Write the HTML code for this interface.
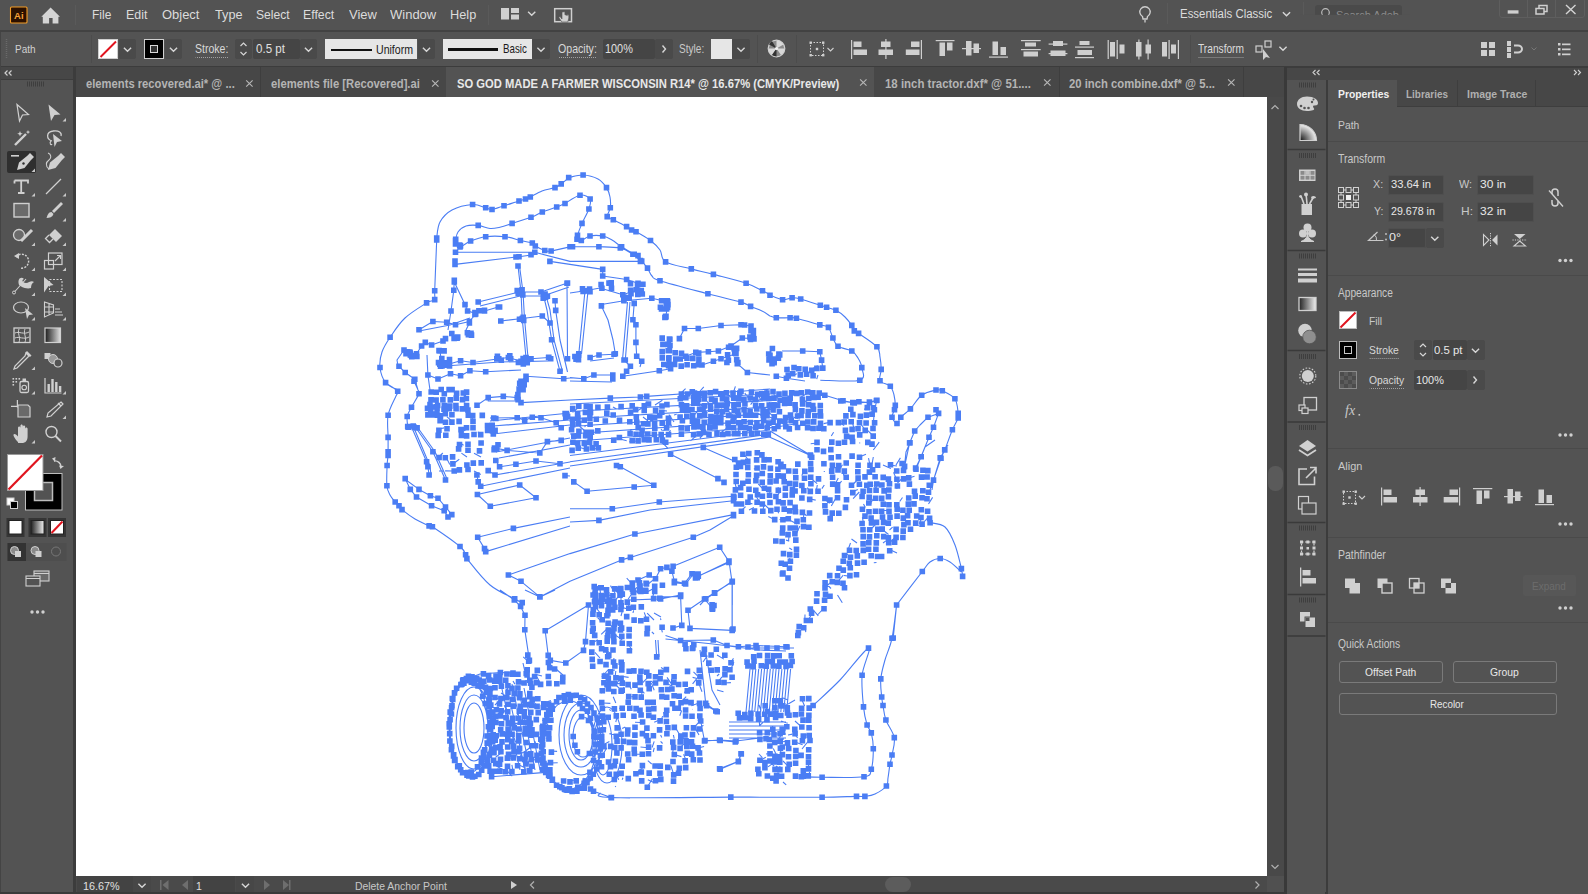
<!DOCTYPE html>
<html><head><meta charset="utf-8">
<style>
*{margin:0;padding:0;box-sizing:border-box}
html,body{width:1588px;height:894px;overflow:hidden;background:#535353;font-family:"Liberation Sans",sans-serif;color:#d6d6d6;font-size:12px}
.a{position:absolute}
.t{position:absolute;white-space:nowrap;line-height:1;transform-origin:0 0}
svg{position:absolute;overflow:visible}
.fld{position:absolute;background:#454545;border:1px solid #4f4f4f;border-radius:2px}
.dd{position:absolute;background:#4a4a4a;border-radius:2px}
.sep{position:absolute;background:#4a4a4a}
.btn{position:absolute;border:1px solid #7a7a7a;border-radius:3px}
</style></head><body>
<!-- MENU BAR -->
<div class="a" style="left:0;top:0;width:1588px;height:30px;background:#535353"></div>
<div class="a" style="left:0;top:30px;width:1588px;height:2px;background:#424242"></div>
<div class="sep" style="left:75px;top:5px;width:1px;height:20px;background:#5a5a5a"></div>
<div class="sep" style="left:488px;top:5px;width:1px;height:20px;background:#5a5a5a"></div>
<div class="sep" style="left:1167px;top:3px;width:1px;height:21px;background:#5a5a5a"></div>
<div class="sep" style="left:1303px;top:2px;width:1px;height:22px;background:#5a5a5a"></div>
<div class="a" style="left:1315px;top:5px;width:87px;height:10px;background:#4a4a4a;border-radius:3px 3px 0 0"></div>
<div class="a" style="left:1499px;top:-2px;width:86px;height:20px;border:1px solid #5e5e5e;border-radius:3px"></div>
<div class="a" style="left:1527px;top:0;width:1px;height:18px;background:#5e5e5e"></div>
<div class="a" style="left:1555px;top:0;width:1px;height:18px;background:#5e5e5e"></div>
<!-- CONTROL BAR -->
<div class="a" style="left:0;top:32px;width:1588px;height:34px;background:#535353"></div>

<div class="a" style="left:0;top:66px;width:1588px;height:2px;background:#3c3c3c"></div>
<div class="sep" style="left:91px;top:35px;width:1px;height:28px;background:#4c4c4c"></div>
<!-- fill / stroke -->
<div class="a" style="left:98px;top:39px;width:20px;height:20px;background:#fff;border:1px solid #cfcfcf"></div>
<svg style="left:98px;top:39px" width="20" height="20"><line x1="2.5" y1="18" x2="18" y2="2.5" stroke="#e0141e" stroke-width="2"/></svg>
<div class="dd" style="left:119px;top:39px;width:17px;height:20px"></div>
<div class="a" style="left:144px;top:39px;width:20px;height:20px;background:#000;border:1px solid #cfcfcf"></div>
<div class="a" style="left:150px;top:45px;width:8px;height:8px;border:1.5px solid #d8d8d8;background:#333"></div>
<div class="dd" style="left:165px;top:39px;width:17px;height:20px"></div>
<div class="dd" style="left:235px;top:39px;width:17px;height:20px"></div>
<div class="fld" style="left:253px;top:39px;width:47px;height:20px;border:none"></div>
<div class="dd" style="left:300px;top:39px;width:17px;height:20px"></div>
<div class="a" style="left:325px;top:39px;width:92px;height:20px;background:#e6e6e6"></div>
<div class="a" style="left:331px;top:48.5px;width:41px;height:2.5px;background:#111"></div>
<div class="dd" style="left:418px;top:39px;width:17px;height:20px"></div>
<div class="a" style="left:443px;top:39px;width:89px;height:20px;background:#e6e6e6"></div>
<div class="a" style="left:448px;top:48px;width:50px;height:2.5px;background:#111"></div>
<div class="dd" style="left:532px;top:39px;width:18px;height:20px"></div>
<div class="fld" style="left:603px;top:39px;width:52px;height:20px;border:none"></div>
<div class="dd" style="left:655px;top:39px;width:18px;height:20px"></div>
<div class="a" style="left:711px;top:39px;width:21px;height:20px;background:#e6e6e6"></div>
<div class="dd" style="left:732px;top:39px;width:18px;height:20px"></div>
<div class="sep" style="left:757px;top:35px;width:1px;height:28px;background:#4c4c4c"></div>
<div class="sep" style="left:796px;top:35px;width:1px;height:28px;background:#4c4c4c"></div>
<div class="sep" style="left:1190px;top:35px;width:1px;height:28px;background:#4c4c4c"></div>
<!-- LEFT PANEL -->
<div class="a" style="left:0;top:67px;width:73px;height:12px;background:#474747"></div>
<div class="a" style="left:0;top:78.5px;width:73px;height:1.5px;background:#3c3c3c"></div>
<div class="a" style="left:73px;top:67px;width:3px;height:827px;background:#3c3c3c"></div>
<div class="a" style="left:7px;top:151px;width:29px;height:22px;background:#2f2f2f;border-radius:2px"></div>
<!-- TAB ROW -->
<div class="a" style="left:76px;top:67px;width:1208px;height:30px;background:#474747"></div>
<div class="a" style="left:446px;top:67px;width:428px;height:30px;background:#535353"></div>
<div class="a" style="left:260px;top:67px;width:1px;height:30px;background:#3e3e3e"></div>
<div class="a" style="left:1059px;top:67px;width:1px;height:30px;background:#3e3e3e"></div>
<div class="a" style="left:1243px;top:67px;width:1px;height:30px;background:#3e3e3e"></div>
<!-- CANVAS -->
<div class="a" style="left:76px;top:97px;width:1191px;height:779px;background:#ffffff"></div>
<svg style="left:0;top:0" width="1588" height="894" viewBox="0 0 1588 894">
<path d="M397.7,390.0 C395.7,388.8 388.6,386.4 385.6,382.6 C382.7,378.9 380.6,372.6 380.0,367.5 C379.4,362.4 380.3,357.0 382.0,352.0 C383.7,347.0 386.3,343.0 390.1,337.3 C393.9,331.6 398.9,323.7 405.0,318.0 C411.1,312.3 421.7,306.0 426.6,302.9 C431.6,299.8 433.4,301.6 434.7,299.6 C436.0,297.6 434.4,300.7 434.7,290.8 C435.0,280.9 436.4,248.8 436.7,240.0 C437.0,231.2 436.1,241.0 436.7,238.0 C437.2,235.0 437.4,226.7 440.0,222.0 C442.6,217.3 446.6,212.9 452.0,210.0 C457.4,207.1 467.0,204.9 472.6,204.5 C478.2,204.1 482.5,207.0 485.7,207.8 C488.9,208.6 488.9,209.8 492.0,209.5 C495.1,209.2 499.5,207.2 504.0,205.8 C508.5,204.4 515.4,202.1 519.0,201.0 C522.6,199.9 523.6,199.7 525.5,199.0 C527.4,198.3 527.5,198.3 530.3,197.0 C533.0,195.7 537.9,192.6 542.0,191.0 C546.1,189.4 551.8,188.8 555.0,187.6 C558.2,186.4 558.9,185.6 561.2,183.9 C563.5,182.2 567.5,178.7 568.7,177.6 M455.5,240.5 C455.9,239.1 456.2,234.4 458.0,232.0 C459.8,229.6 462.6,227.1 466.0,226.0 C469.4,224.9 474.2,225.0 478.2,225.4 C482.2,225.8 486.2,228.2 490.0,228.5 C493.8,228.8 497.1,227.8 500.8,227.0 C504.5,226.2 507.1,225.0 512.1,223.4 C517.1,221.8 526.0,219.2 531.0,217.3 C536.0,215.4 538.0,213.7 542.3,212.0 C546.6,210.3 552.9,208.4 556.7,207.0 C560.5,205.6 563.6,204.1 565.0,203.5 M455.5,244.0 C456.2,244.5 457.5,247.5 460.0,247.0 C462.5,246.5 466.3,242.7 470.6,241.0 C474.9,239.3 480.0,237.4 485.7,236.7 C491.4,236.0 499.2,236.1 505.0,236.7 C510.8,237.3 515.9,239.4 520.4,240.5 C524.9,241.6 529.8,242.1 532.3,243.0 C534.8,243.9 533.2,244.8 535.3,246.0 C537.4,247.2 542.2,249.7 544.8,250.5 C547.4,251.3 546.9,251.6 551.1,251.0 C555.3,250.4 566.9,247.5 570.0,246.8 M455.5,252.3 L534.8,252.3 L531.0,254.8 M455.0,261.0 L455.0,264.4 L516.0,257.0 L519.0,256.8 L535.0,254.5 M549.9,261.4 L570.0,264.4 M518.0,266.0 L521.0,292.0 L522.2,318.5 L526.0,357.5 M519.5,266.0 L523.0,292.0 L524.5,318.5 L528.0,357.5 M478.2,302.0 L519.0,292.0 L541.0,292.0 L567.5,283.0 M480.0,306.0 L520.0,296.0 L543.0,296.0 L569.0,287.0 M484.5,311.0 L498.3,307.0 L499.6,307.0 M500.8,321.0 L522.2,318.5 L542.3,316.0 L550.0,323.0 M543.6,295.8 L547.0,310.0 L551.6,339.8 L560.0,371.3 M546.0,295.8 L550.0,310.0 L554.0,339.8 L562.5,371.3 M555.0,300.8 L555.7,310.4 L560.0,340.0 L567.5,372.0 M567.0,283.2 L567.5,358.7 M454.3,280.2 L453.8,290.3 L451.0,311.0 L448.0,330.0 M454.3,282.0 L465.0,304.6 L467.6,311.0 L475.7,313.4 L484.5,310.4 M419.0,329.8 L432.9,321.5 L446.7,322.2 L455.5,324.7 L469.4,321.5 L475.7,314.0 M419.0,331.0 L450.0,325.0 L470.0,318.0 M404.0,350.0 L410.3,355.0 L416.5,353.7 L421.6,346.0 L425.3,342.4 L431.6,345.0 L443.0,341.0 L445.5,338.6 M440.0,351.0 L442.0,366.0 L460.6,360.7 L473.0,362.5 L498.8,358.7 L508.4,357.5 L521.0,361.2 L531.0,358.7 L548.6,357.5 M445.0,366.0 L500.0,362.0 L548.0,361.0 M399.0,366.3 L405.2,372.5 L414.8,379.3 L418.0,390.0 M398.0,366.0 L397.0,360.0 L404.0,350.0 M427.9,375.0 L438.0,379.0 L450.5,373.8 L460.6,375.8 L469.9,370.8 L485.7,371.8 L521.0,370.0 M427.0,355.0 L427.9,375.0 L430.0,390.0 M521.0,381.3 L526.0,376.3 L563.7,378.8 L570.0,378.0 M451.8,333.5 L455.5,337.3 M469.4,323.0 L466.0,330.0 L469.4,333.5 M568.7,177.6 C571.1,177.2 578.2,174.8 583.1,175.0 C588.0,175.2 594.1,176.9 598.0,179.0 C601.9,181.1 604.5,184.6 606.5,187.6 C608.5,190.6 609.4,193.6 610.0,197.0 C610.6,200.4 610.8,204.5 610.3,207.8 C609.8,211.1 606.7,214.6 607.2,216.6 C607.7,218.6 610.1,218.1 613.3,219.8 C616.5,221.5 623.5,224.9 626.6,226.6 C629.7,228.3 630.0,229.2 631.6,230.0 C633.2,230.8 632.9,229.9 636.0,231.7 C639.1,233.4 646.5,237.4 650.5,240.5 C654.5,243.6 657.5,246.4 660.0,250.0 C662.5,253.6 660.4,258.8 665.6,261.9 C670.8,265.0 683.3,266.8 691.3,268.9 C699.3,271.0 704.3,272.0 713.4,274.4 C722.5,276.8 737.9,280.5 746.1,283.2 C754.3,285.9 758.5,288.9 762.5,290.8 C766.5,292.7 768.8,294.0 770.0,294.6 M565.0,203.5 C567.5,202.1 575.8,195.9 580.0,195.2 C584.2,194.4 588.6,196.7 590.1,199.0 C591.6,201.3 590.2,204.9 588.9,209.0 C587.5,213.1 583.9,219.0 582.0,223.4 C580.1,227.8 578.3,232.8 577.5,235.4 C576.7,238.0 576.4,238.3 577.0,239.2 C577.6,240.0 579.1,241.0 581.3,240.5 C583.5,240.0 586.4,236.8 590.0,236.0 C593.6,235.2 599.0,235.3 602.7,236.0 C606.4,236.7 608.9,238.2 612.0,240.0 C615.1,241.8 617.9,244.4 621.6,246.8 C625.3,249.2 631.5,252.8 634.2,254.3 C636.9,255.8 636.8,254.5 638.0,255.6 C639.2,256.7 640.1,259.0 641.7,261.1 C643.3,263.2 645.8,265.6 647.5,268.1 C649.2,270.6 649.9,273.9 652.0,276.0 C654.1,278.1 650.7,277.7 660.0,280.7 C669.3,283.7 694.4,290.2 707.9,293.8 C721.4,297.4 733.9,300.0 741.0,302.1 C748.1,304.2 747.1,304.9 750.6,306.4 C754.1,307.9 758.8,309.4 762.0,311.0 C765.2,312.6 768.7,315.2 770.0,316.0 M570.0,246.8 C570.4,246.8 567.7,246.8 572.5,246.8 C577.3,246.8 590.9,246.6 598.9,246.8 C606.9,247.0 614.6,246.8 620.3,248.0 C626.0,249.2 629.5,252.2 632.9,254.3 C636.2,256.4 639.1,259.6 640.4,260.6 M534.8,252.3 L570.0,261.4 L640.4,261.4 M570.0,264.4 L602.7,269.4 L602.7,276.0 L626.6,279.5 L638.0,283.2 M570.0,293.0 L585.0,290.8 L600.0,288.0 L622.8,294.8 L634.0,291.0 M585.0,290.8 L578.8,353.7 M588.0,291.0 L581.5,354.0 M601.4,305.9 L608.0,320.0 L613.0,340.0 L615.3,353.7 M601.4,304.5 L624.0,300.8 L651.8,298.3 L663.0,300.8 L668.0,304.6 L665.6,317.2 M634.2,303.4 L632.9,319.7 L635.9,324.7 L635.9,342.4 L636.7,356.2 L641.7,361.2 L640.0,367.0 M630.0,302.0 L625.3,360.0 M627.5,302.0 L622.5,360.0 M590.1,357.5 L599.0,355.0 L614.0,354.2 M590.1,361.0 L614.0,358.0 M624.0,360.0 L630.4,366.3 L626.6,371.3 L622.8,376.3 M570.0,377.6 L583.8,378.8 L593.9,375.0 L612.8,375.0 L612.8,379.0 M570.0,381.0 L612.0,382.0 M622.8,376.3 L659.3,370.8 L670.6,368.8 M679.4,338.6 L684.5,328.5 L698.3,328.5 L721.0,325.5 L741.0,324.7 L751.0,326.0 L753.6,338.6 L742.3,338.0 M685.7,356.2 L695.8,352.4 L708.4,351.7 L718.4,351.0 L731.0,346.0 L736.0,353.7 L721.0,358.7 L713.4,361.2 L702.0,365.0 M737.3,363.7 L747.4,372.5 L770.0,375.0 M742.3,338.0 L731.0,346.0 M770.0,294.6 C770.0,294.7 767.9,294.4 770.0,295.2 C772.1,296.0 778.9,299.3 782.6,299.7 C786.3,300.1 789.1,297.8 792.1,297.7 C795.1,297.6 796.0,297.7 800.7,299.0 C805.4,300.3 816.0,303.9 820.3,305.3 C824.6,306.7 824.0,306.5 826.6,307.3 C829.2,308.1 832.8,308.7 835.9,310.3 C839.0,311.9 842.4,314.5 845.0,317.0 C847.6,319.5 850.2,323.1 851.8,325.4 C853.3,327.7 853.2,329.6 854.3,330.9 C855.4,332.2 854.8,330.8 858.6,333.4 C862.4,336.0 873.3,342.9 876.9,346.8 C880.5,350.7 879.3,353.2 880.0,357.0 C880.7,360.8 881.2,365.4 881.2,369.4 C881.2,373.3 878.5,377.9 880.0,380.7 C881.5,383.5 888.0,383.9 890.3,386.3 C892.6,388.7 893.2,391.8 894.0,395.0 C894.8,398.2 895.2,402.9 895.3,405.4 C895.4,407.8 895.0,407.7 894.5,409.7 C894.0,411.7 891.6,414.9 892.0,417.2 C892.4,419.5 895.5,423.5 897.0,423.5 C898.5,423.5 898.6,419.6 900.8,417.2 C903.0,414.8 906.9,412.5 910.4,408.9 C913.9,405.2 917.4,398.4 921.7,395.3 C926.0,392.2 932.6,390.8 936.0,390.0 C939.4,389.2 939.1,389.3 942.3,390.8 C945.4,392.3 952.2,395.0 954.9,398.8 C957.5,402.6 957.7,410.2 958.2,413.4 C958.8,416.6 959.2,415.3 958.2,418.0 C957.2,420.7 954.6,424.5 952.4,429.8 C950.2,435.1 946.7,445.2 944.8,449.9 C942.9,454.6 942.9,453.2 941.0,458.2 C939.1,463.2 935.3,474.7 933.5,480.0 C931.7,485.3 930.6,488.3 930.0,490.0 M936.0,409.7 L938.6,413.4 L928.0,417.2 L920.0,425.0 L914.7,431.0 L909.6,443.0 L904.6,466.3 M938.6,413.4 L933.5,427.3 L929.0,437.3 L921.0,456.7 L916.0,469.3 M770.0,316.0 C771.0,316.3 772.9,317.5 776.3,317.8 C779.6,318.1 786.8,317.7 790.1,317.8 C793.5,317.9 791.5,317.1 796.4,318.3 C801.3,319.5 814.5,323.4 819.8,324.9 C825.1,326.4 826.2,325.2 828.4,327.4 C830.6,329.6 831.3,334.9 832.9,338.0 C834.5,341.1 834.9,344.1 838.0,346.3 C841.1,348.5 848.5,349.1 851.8,351.0 C855.1,352.9 856.3,355.2 858.0,358.0 C859.7,360.8 861.5,363.9 861.8,367.6 C862.1,371.3 866.7,378.1 859.8,380.2 C852.9,382.3 826.9,380.2 820.3,380.2 M782.0,351.0 L802.7,351.0 L819.8,351.8 L821.6,360.1 L822.8,368.1 M776.3,376.2 L786.4,378.2 L805.0,381.0 M824.8,395.3 L843.0,400.8 L854.3,402.9 L869.4,402.1 L876.9,400.3 L874.4,409.7 L873.0,428.5 M770.0,431.0 L810.3,455.0 M770.0,428.0 L795.0,424.0 M770.0,425.0 L800.0,420.0 M385.6,383.0 C387.6,384.4 396.0,389.1 397.7,391.3 C399.4,393.5 397.6,392.0 396.0,396.0 C394.4,400.0 389.4,408.3 388.1,415.2 C386.8,422.1 388.1,431.3 388.1,437.4 C388.1,443.5 388.1,448.7 388.1,451.7 C388.1,454.7 388.3,453.2 388.1,455.5 C387.9,457.8 387.3,460.5 387.1,465.5 C386.9,470.5 386.4,480.8 386.9,485.7 C387.4,490.6 388.6,492.3 390.0,495.0 C391.4,497.7 393.7,500.2 395.2,502.0 C396.7,503.8 397.9,504.5 399.0,505.8 C400.1,507.1 399.3,507.4 402.0,509.6 C404.7,511.8 410.5,516.3 415.0,519.0 C419.5,521.7 426.2,524.6 429.1,525.9 C432.0,527.2 427.2,523.3 432.4,526.7 C437.5,530.1 454.5,541.8 460.0,546.5 C465.5,551.2 464.5,552.8 465.6,554.8 C466.8,556.8 462.8,553.6 466.9,558.6 C471.0,563.6 482.0,578.3 490.0,585.0 C498.0,591.7 509.3,596.0 514.7,598.9 C520.1,601.8 521.0,602.0 522.2,602.6 M414.0,381.3 C414.7,382.8 417.2,387.9 418.0,390.0 C418.8,392.1 420.1,390.9 419.0,393.8 C417.9,396.7 413.5,403.4 411.5,407.2 C409.5,411.0 407.8,413.3 407.2,416.5 C406.6,419.7 407.6,424.8 407.7,426.5 M412.0,428.0 L426.6,461.8 L427.9,466.8 L429.1,475.0 M414.0,428.0 L430.0,466.0 L431.0,475.0 M416.0,428.0 L432.9,451.7 L445.5,480.0 M418.0,428.0 L435.0,451.7 L447.5,480.0 M405.2,478.6 L410.3,489.4 L416.5,497.0 L431.6,505.8 L444.2,510.8 L448.0,517.0 M406.0,480.0 L419.0,489.4 L430.4,495.7 L438.0,498.2 L445.5,507.0 L451.8,514.6 M477.0,405.2 L488.2,397.6 L503.3,396.4 L517.2,397.6 L521.0,402.6 M521.0,402.6 L570.0,400.0 M488.2,397.6 L488.2,401.0 L521.0,401.0 M490.0,418.0 L517.2,417.7 L524.7,420.3 L532.3,417.2 L541.0,417.7 L556.2,422.8 L561.2,427.8 M490.0,421.0 L570.0,413.0 M493.0,426.0 L570.0,420.0 M493.3,434.0 L570.0,425.0 M494.5,448.0 L507.1,450.4 L539.8,453.0 L547.4,441.6 L561.2,440.4 M496.0,452.0 L570.0,438.0 M495.8,460.5 L499.6,466.8 L515.9,464.3 L536.0,461.0 L560.0,463.8 M499.0,458.0 L570.0,445.0 M488.2,470.6 L495.0,475.0 L570.0,462.0 M476.9,475.0 L478.2,481.9 L480.7,486.2 L570.0,468.0 M477.4,494.5 L519.7,485.0 L536.0,497.7 L490.3,506.3 L477.4,494.5 M565.0,475.6 L570.0,476.0 M570.0,517.0 L513.4,528.4 L477.7,537.2 L484.5,548.6 L485.7,551.6 L570.0,526.0 M570.0,553.6 L508.4,575.0 L521.0,581.3 L539.8,596.9 L570.0,581.3 M570.0,400.0 L610.3,398.1 L640.4,397.0 L646.7,396.4 L694.5,393.0 L700.8,393.8 L741.0,391.3 L770.0,389.0 M570.0,404.0 L770.0,394.0 M570.0,411.5 L770.0,400.5 M570.0,419.0 L770.0,407.0 M570.0,426.5 L770.0,413.5 M570.0,434.0 L770.0,420.0 M570.0,441.5 L770.0,426.5 M570.0,455.5 L770.0,430.0 M570.0,461.8 L770.0,434.0 M570.0,466.0 L770.0,437.0 M670.6,454.2 L717.9,478.6 L724.0,482.4 M703.3,447.4 L738.6,463.0 M616.5,465.5 L620.3,466.8 L653.8,485.2 L634.2,487.0 L587.1,491.2 L573.8,481.9 M570.0,508.8 L612.3,508.8 L659.3,502.0 L733.5,496.2 M570.0,522.0 L598.9,520.4 L650.0,510.0 L733.5,500.8 M570.0,553.6 L634.9,534.0 L733.5,514.6 M570.0,581.3 L621.6,559.9 L630.4,557.4 L693.3,537.2 L710.0,530.0 L733.5,515.8 M719.7,547.3 L729.0,561.6 L698.3,576.2 L692.0,573.7 M719.7,547.3 L673.1,566.2 M649.2,575.0 L655.5,578.7 L660.6,568.7 L666.9,567.4 L671.9,571.2 L674.4,581.3 L684.5,583.3 L692.0,573.7 M638.0,580.0 L649.2,575.0 M732.3,581.3 L714.7,593.3 L705.8,598.9 L700.0,605.0 M732.3,581.3 L732.3,605.0 M680.7,595.0 L660.6,598.9 L630.0,600.0 M930.1,522.7 C932.6,523.4 940.9,523.3 945.0,527.0 C949.1,530.7 952.3,538.1 955.0,545.0 C957.7,551.9 960.1,563.4 961.4,568.6 C962.7,573.8 962.4,575.1 962.6,576.4 M896.6,605.0 C900.9,599.4 916.7,578.7 922.3,571.5 C927.9,564.3 927.0,564.2 930.0,562.0 C933.0,559.8 936.9,558.5 940.2,558.5 C943.5,558.5 946.5,559.8 950.0,562.0 C953.5,564.2 959.5,570.3 961.4,572.0 M896.6,605.0 L893.2,638.0 M732.2,582.0 L732.2,630.0 M910.0,442.7 L906.0,452.0 L904.4,466.8 M921.2,456.8 L915.6,468.0 M944.7,450.0 L940.2,457.9 L933.5,480.2 L932.0,490.0 M944.7,450.0 L948.0,445.0 M921.2,456.8 L925.0,447.0 L935.0,440.0 M763.8,434.4 L810.6,455.5 M840.8,401.0 L852.8,402.6 L858.9,401.7 L869.5,402.6 L876.4,400.5 M729.0,561.0 L732.0,581.8 M500.0,590.0 L514.3,600.0 L520.6,606.4 L525.0,615.2 L524.8,629.7 L529.4,660.4 M540.0,597.0 L525.0,590.0 M540.0,597.0 L555.0,590.0 M588.5,605.0 L545.2,630.8 L548.2,655.4 L550.3,660.4 L565.8,663.0 L583.5,650.4 L585.5,641.6 L588.5,605.0 M462.7,680.6 L480.0,674.0 L500.4,672.5 L513.0,673.0 M491.6,776.7 L545.7,772.4 M593.5,791.3 L611.1,797.5 L630.0,798.0 M500.0,680.0 L520.0,770.0 M506.0,682.0 L525.0,770.0 M512.0,684.0 L530.0,770.0 M518.0,686.0 L535.0,770.0 M524.0,688.0 L540.0,770.0 M700.7,575.0 L728.9,562.5 M674.3,582.6 L685.6,584.0 L692.0,576.0 M732.1,582.0 L714.5,592.7 L704.5,599.0 L712.0,607.8 M704.5,599.0 L688.0,610.3 L690.0,628.4 L732.1,630.4 L732.1,582.0 M680.6,596.5 L681.8,625.4 L673.0,628.0 M655.0,597.0 L680.6,596.5 M656.7,656.9 L655.5,640.0 M659.0,656.9 L658.0,640.0 M665.5,635.5 L680.6,640.5 L713.3,640.0 L727.0,645.5 L738.4,646.8 L756.0,645.5 L786.0,646.8 M665.5,639.0 L713.0,644.0 L760.0,650.0 L786.0,651.0 M700.0,650.0 L705.7,703.4 L715.8,711.0 M705.0,648.0 L712.0,690.0 L720.0,705.0 M745.0,648.0 L794.0,648.0 M750.0,669.0 L746.0,712.0 M752.9,669.0 L748.9,712.0 M755.8,669.0 L751.8,712.0 M758.7,669.0 L754.7,712.0 M761.6,669.0 L757.6,712.0 M764.5,669.0 L760.5,712.0 M767.4,669.0 L763.4,712.0 M770.3,669.0 L766.3,712.0 M773.2,669.0 L769.2,712.0 M776.1,669.0 L772.1,712.0 M779.0,669.0 L775.0,712.0 M781.9,669.0 L777.9,712.0 M784.8,669.0 L780.8,712.0 M787.7,669.0 L783.7,712.0 M790.6,669.0 L786.6,712.0 M700.7,721.0 L704.5,741.0 L719.6,740.0 L736.0,741.0 L760.0,738.0 M741.0,753.7 L738.4,761.3 L719.6,768.8 M896.6,605.0 C895.8,610.5 893.9,629.1 892.0,638.3 C890.1,647.5 886.9,653.2 885.0,660.0 C883.1,666.8 881.3,672.7 880.8,678.9 C880.2,685.1 881.3,692.6 881.7,697.0 C882.1,701.4 882.3,701.7 883.0,705.5 C883.7,709.3 884.0,714.6 885.9,720.0 C887.8,725.4 893.3,731.8 894.3,737.6 C895.3,743.4 892.7,750.6 892.0,755.0 C891.3,759.4 890.7,760.4 890.0,764.2 C889.3,768.0 888.6,774.4 888.0,778.0 C887.4,781.6 888.6,783.3 886.4,786.0 C884.2,788.7 878.6,792.3 875.0,794.0 C871.4,795.7 868.0,796.0 864.9,796.4 C861.8,796.8 863.6,796.3 856.5,796.4 C849.4,796.5 838.2,797.1 822.1,797.2 C806.0,797.3 775.2,797.2 760.0,797.2 C744.8,797.2 755.6,797.0 730.8,797.1 C706.0,797.2 633.2,798.3 611.4,797.6 C589.6,796.9 601.9,793.8 600.0,793.0 M813.1,705.5 C817.6,701.2 830.8,689.6 840.0,680.0 C849.2,670.4 864.8,648.9 868.5,648.1 C872.2,647.3 862.9,665.4 862.1,675.2 C861.3,685.0 862.7,698.6 863.5,706.9 C864.3,715.2 865.8,720.7 867.1,725.0 C868.4,729.3 870.3,728.9 871.3,732.9 C872.3,736.9 873.3,742.8 873.3,748.8 C873.3,754.8 872.8,764.5 871.3,769.2 C869.8,773.9 872.2,775.4 864.0,776.8 C855.8,778.1 832.5,777.3 822.1,777.3 C811.7,777.3 804.9,776.9 801.4,776.8 M705.0,740.5 L720.2,740.5 L735.3,742.0 M717.2,711.7 L706.6,705.7 M720.2,769.2 L738.3,761.6 L741.3,754.0 M729.0,722.0 L786.0,722.0 M729.0,726.0 L786.0,726.0 M729.0,730.0 L786.0,730.0 M729.0,734.0 L786.0,734.0 M729.0,738.0 L786.0,738.0 M449.0,727.0 a22,50 0 1 0 44,0 a22,50 0 1 0 -44,0 M450.0,727.0 a19,46 0 1 0 38,0 a19,46 0 1 0 -38,0 M464.0,728.0 a10,25 0 1 0 20,0 a10,25 0 1 0 -20,0 M460.0,728.0 a14,33 0 1 0 28,0 a14,33 0 1 0 -28,0 M456.0,728.0 a18,41 0 1 0 36,0 a18,41 0 1 0 -36,0 M541.0,743.0 a30,48 0 1 0 60,0 a30,48 0 1 0 -60,0 M542.0,745.0 a27,44 0 1 0 54,0 a27,44 0 1 0 -54,0 M569.0,735.0 a12,25 0 1 0 24,0 a12,25 0 1 0 -24,0 M564.0,735.0 a17,32 0 1 0 34,0 a17,32 0 1 0 -34,0 M559.0,735.0 a22,40 0 1 0 44,0 a22,40 0 1 0 -44,0 M573.0,737.0 a10,20 0 1 0 20,0 a10,20 0 1 0 -20,0 M592.0,745.0 a15,38 0 1 0 30,0 a15,38 0 1 0 -30,0 M594.0,745.0 a9,30 0 1 0 18,0 a9,30 0 1 0 -18,0 M788.0,369.0 l0.6,-2.1 M812.0,369.0 l5.7,-3.4 M794.0,375.0 l2.9,-1.2 M818.0,375.0 l-1.3,4.1 M807.8,393.0 l-7.1,4.3 M778.8,398.8 l-5.2,-4.3 M802.0,398.8 l6.4,4.5 M813.6,398.8 l-4.7,-5.4 M819.4,398.8 l-6.4,-2.2 M773.0,404.6 l-4.0,-2.4 M784.6,404.6 l-2.5,-3.8 M796.2,404.6 l0.4,7.7 M773.0,410.4 l-7.6,-3.5 M796.2,410.4 l2.0,6.4 M773.0,416.2 l-6.0,-5.6 M790.4,416.2 l7.5,2.4 M773.0,422.0 l-1.0,-5.1 M773.0,427.8 l-6.1,-0.9 M813.6,427.8 l0.9,-1.0 M453.0,422.0 l-6.2,-5.4 M474.0,422.0 l-4.0,-7.8 M439.0,429.0 l5.1,-1.1 M467.0,429.0 l-6.9,3.9 M481.0,436.0 l-3.1,-4.3 M460.0,443.0 l3.6,2.3 M439.0,457.0 l3.8,-4.0 M446.0,457.0 l3.8,7.6 M467.0,457.0 l-5.6,-3.9 M481.0,457.0 l-7.0,-3.7 M453.0,464.0 l6.3,-4.8 M439.0,471.0 l5.1,0.1 M453.0,471.0 l-7.9,-0.1 M474.0,471.0 l6.8,3.4 M579.0,407.0 l-6.4,5.4 M585.0,413.0 l6.8,-6.0 M591.0,419.0 l-2.5,-6.5 M585.0,425.0 l0.1,2.1 M591.0,425.0 l-1.6,-0.9 M579.0,431.0 l-1.7,6.8 M585.0,431.0 l-6.3,-5.5 M585.0,437.0 l0.4,1.3 M591.0,437.0 l-3.2,-0.6 M573.0,443.0 l7.4,3.3 M585.0,449.0 l-4.4,-1.3 M597.0,449.0 l-7.0,-1.7 M643.0,405.0 l2.6,-1.9 M649.0,405.0 l-3.5,-2.4 M655.0,405.0 l7.4,-4.7 M631.0,411.0 l-1.4,5.0 M637.0,411.0 l6.7,-3.9 M667.0,411.0 l-4.3,-0.4 M643.0,417.0 l4.8,3.8 M655.0,417.0 l-4.8,4.0 M655.0,423.0 l-4.0,-4.1 M667.0,423.0 l4.9,2.5 M631.0,429.0 l-0.4,5.1 M661.0,429.0 l1.5,1.9 M667.0,429.0 l-3.9,1.6 M637.0,435.0 l4.7,0.8 M667.0,435.0 l3.6,-4.7 M637.0,441.0 l-7.8,0.8 M661.0,441.0 l7.1,7.6 M681.0,393.0 l4.6,-4.4 M686.8,393.0 l-4.5,-1.6 M692.6,393.0 l3.6,6.4 M698.4,393.0 l5.4,-6.1 M727.4,393.0 l-5.9,-1.1 M733.2,393.0 l2.2,-6.7 M739.0,393.0 l0.1,-2.0 M744.8,393.0 l5.7,7.9 M756.4,393.0 l4.6,6.9 M762.2,393.0 l6.3,-3.6 M721.6,398.8 l3.9,-7.2 M733.2,398.8 l-7.5,-5.6 M744.8,398.8 l-8.0,-2.3 M762.2,398.8 l-6.5,2.2 M704.2,404.6 l-4.8,1.7 M710.0,404.6 l-3.0,-3.2 M727.4,404.6 l-4.3,-7.4 M750.6,404.6 l6.1,-7.8 M698.4,410.4 l-6.3,6.9 M704.2,410.4 l3.1,2.1 M727.4,410.4 l5.6,5.0 M739.0,410.4 l-2.9,-1.2 M768.0,410.4 l5.1,-5.3 M698.4,416.2 l3.2,-0.0 M715.8,416.2 l6.2,-7.6 M762.2,416.2 l-4.0,-2.8 M768.0,416.2 l7.6,3.7 M698.4,422.0 l-1.6,4.7 M727.4,427.8 l-5.9,4.4 M698.4,433.6 l-7.8,7.2 M704.2,433.6 l-4.3,4.4 M739.0,433.6 l-0.5,-5.7 M762.2,433.6 l2.2,2.2 M613.0,407.0 l3.5,2.0 M620.0,439.0 l6.7,1.7 M674.0,415.0 l2.7,-0.7 M674.0,422.0 l-5.1,-7.4 M749.0,461.0 l-5.6,-7.8 M763.0,461.0 l3.5,-4.1 M777.0,461.0 l2.1,3.3 M756.0,468.0 l-2.1,1.2 M735.0,482.0 l0.9,4.8 M742.0,482.0 l1.7,2.8 M735.0,489.0 l1.6,-2.5 M763.0,489.0 l-4.8,-5.1 M777.0,489.0 l1.6,-1.6 M749.0,496.0 l4.6,3.4 M756.0,496.0 l4.1,7.0 M770.0,496.0 l-0.3,-5.3 M777.0,496.0 l3.5,-4.9 M749.0,503.0 l3.4,0.9 M742.0,510.0 l3.6,-3.3 M749.0,510.0 l4.9,-2.5 M763.0,510.0 l1.1,-5.8 M770.0,510.0 l-6.7,-6.6 M777.0,510.0 l1.8,3.3 M784.0,510.0 l3.7,-1.5 M866.3,408.0 l-2.1,1.5 M866.3,415.0 l7.5,-4.4 M831.3,422.0 l-7.7,1.6 M838.3,422.0 l5.9,3.5 M852.3,422.0 l1.5,5.8 M859.3,422.0 l5.2,7.0 M831.3,436.0 l2.3,-3.7 M873.3,436.0 l-6.0,-5.9 M817.3,443.0 l-6.6,0.7 M859.3,443.0 l0.9,-0.1 M873.3,450.0 l5.9,-7.9 M859.3,457.0 l6.7,-2.8 M873.3,457.0 l-1.2,6.6 M803.3,471.0 l-1.4,4.6 M824.3,471.0 l-0.0,0.9 M838.3,471.0 l4.2,-6.3 M810.3,478.0 l6.9,5.7 M838.3,478.0 l-3.1,6.0 M845.3,478.0 l-2.3,-5.0 M817.3,485.0 l-0.9,5.4 M824.3,485.0 l-2.4,3.6 M838.3,485.0 l3.3,-3.8 M852.3,485.0 l6.0,-6.0 M810.3,492.0 l-3.0,-4.4 M852.3,492.0 l5.5,-2.4 M859.3,492.0 l-6.2,6.6 M803.3,499.0 l-3.2,-1.9 M810.3,499.0 l5.4,1.1 M824.3,499.0 l5.3,4.4 M845.3,499.0 l3.1,-1.7 M831.3,506.0 l4.2,-7.3 M803.3,513.0 l3.3,2.7 M775.3,520.0 l-7.0,-3.5 M782.3,520.0 l-2.8,-0.5 M789.3,520.0 l7.9,4.0 M803.3,520.0 l0.7,-7.9 M789.3,534.0 l-0.9,7.5 M796.3,534.0 l3.6,-8.0 M789.3,541.0 l-3.3,-0.9 M796.3,541.0 l-2.8,-0.6 M789.3,548.0 l2.8,1.7 M782.3,555.0 l2.9,-0.8 M789.3,562.0 l0.5,-4.0 M870.0,465.0 l-1.5,-6.8 M883.0,465.0 l7.9,3.5 M889.5,465.0 l7.4,1.0 M896.0,465.0 l4.4,-7.1 M915.5,471.5 l1.7,-6.4 M896.0,478.0 l-2.5,-5.6 M902.5,478.0 l-5.1,5.1 M909.0,478.0 l5.5,-1.7 M876.5,484.5 l-0.6,7.8 M896.0,484.5 l1.0,4.3 M876.5,491.0 l-2.4,-5.8 M889.5,491.0 l-3.2,-3.1 M870.0,497.5 l1.6,5.8 M902.5,497.5 l-2.8,4.0 M863.5,504.0 l1.8,3.6 M870.0,504.0 l4.3,-6.6 M928.5,504.0 l4.1,-6.6 M883.0,510.5 l7.7,-0.0 M902.5,517.0 l5.8,7.9 M922.0,517.0 l-2.6,6.7 M928.5,517.0 l-4.2,4.7 M863.5,523.5 l-1.1,-6.3 M909.0,523.5 l-7.3,0.1 M915.5,523.5 l3.0,2.4 M870.0,530.0 l8.0,-7.9 M883.0,530.0 l5.5,4.5 M889.5,530.0 l3.1,-2.8 M896.0,536.5 l-5.2,5.2 M850.5,543.0 l-1.9,5.3 M857.0,543.0 l-5.5,-4.0 M883.0,543.0 l2.9,-2.1 M857.0,549.5 l2.2,5.7 M889.5,549.5 l7.5,3.4 M844.0,556.0 l4.1,-1.9 M876.5,562.5 l-2.7,0.3 M844.0,575.5 l6.7,0.9 M837.5,582.0 l5.8,-6.8 M824.5,588.5 l5.4,-5.7 M831.0,588.5 l-6.4,-6.5 M824.5,595.0 l1.3,-2.9 M837.5,595.0 l4.8,7.7 M811.5,608.0 l6.8,7.9 M805.0,614.5 l-0.2,5.8 M811.5,614.5 l-3.7,6.3 M818.0,614.5 l6.8,-7.5 M805.0,627.5 l0.8,4.6 M489.0,675.0 l-5.3,7.1 M501.0,675.0 l-0.1,0.6 M501.0,681.0 l1.5,4.5 M513.0,681.0 l1.9,3.1 M525.0,681.0 l7.0,-1.4 M483.0,687.0 l-4.8,-4.5 M501.0,693.0 l7.5,4.6 M507.0,693.0 l-0.7,-4.2 M495.0,699.0 l5.0,-1.3 M501.0,699.0 l-2.3,5.5 M495.0,705.0 l5.3,-5.4 M507.0,711.0 l-2.8,-5.8 M519.0,711.0 l-1.7,4.0 M495.0,717.0 l1.2,5.2 M507.0,717.0 l-3.0,-7.1 M519.0,717.0 l-2.9,-1.0 M495.0,723.0 l4.1,-0.5 M513.0,723.0 l5.2,1.1 M519.0,723.0 l-6.9,0.8 M507.0,735.0 l1.7,5.2 M513.0,735.0 l2.8,7.6 M519.0,735.0 l5.4,-2.8 M489.0,741.0 l2.1,-2.6 M489.0,747.0 l-0.4,-5.9 M531.0,747.0 l-7.8,5.8 M501.0,753.0 l-5.5,4.4 M513.0,753.0 l1.0,0.1 M507.0,759.0 l6.5,-1.9 M513.0,759.0 l-0.7,1.4 M519.0,759.0 l3.6,-7.1 M483.0,765.0 l-4.2,7.8 M495.0,765.0 l7.6,4.8 M519.0,765.0 l7.6,3.4 M507.0,771.0 l5.3,5.0 M513.0,771.0 l-1.1,-6.2 M523.0,663.0 l1.7,7.7 M530.0,663.0 l-6.8,-6.2 M537.0,677.0 l2.9,5.6 M530.0,698.0 l6.2,6.7 M537.0,705.0 l0.5,2.4 M537.0,747.0 l-2.2,-5.7 M537.0,761.0 l-3.1,-1.5 M544.0,703.0 l6.9,-2.5 M550.0,703.0 l5.7,4.8 M544.0,709.0 l6.5,-5.5 M550.0,709.0 l-5.7,-6.4 M550.0,715.0 l-7.8,5.6 M550.0,727.0 l-4.9,-4.5 M544.0,739.0 l-0.6,3.4 M550.0,739.0 l-4.3,-1.0 M550.0,751.0 l7.1,0.4 M544.0,757.0 l-6.7,-3.8 M550.0,763.0 l7.7,-0.3 M608.0,593.0 l-4.4,1.6 M615.0,593.0 l-4.5,-7.4 M615.0,600.0 l5.3,-4.8 M601.0,614.0 l-4.3,-5.3 M601.0,621.0 l-3.4,-3.4 M608.0,628.0 l-6.8,6.4 M615.0,635.0 l7.3,4.6 M622.0,635.0 l-1.5,7.4 M594.0,642.0 l3.8,-2.2 M601.0,649.0 l-0.3,-7.7 M608.0,649.0 l-2.1,7.4 M608.0,670.0 l-6.2,7.0 M615.0,670.0 l-2.6,0.4 M608.0,677.0 l2.0,3.1 M615.0,684.0 l4.8,4.8 M622.0,691.0 l2.1,-4.1 M556.0,669.0 l6.9,6.0 M542.0,676.0 l-6.9,-1.8 M549.0,676.0 l-2.9,-0.4 M535.0,683.0 l-0.7,2.2 M633.0,585.0 l-6.3,-6.9 M640.0,585.0 l-5.2,4.2 M647.0,585.0 l7.5,-6.1 M633.0,592.0 l-4.9,7.3 M640.0,592.0 l-3.9,-0.5 M647.0,592.0 l5.7,-2.9 M654.0,592.0 l-1.3,5.1 M633.0,613.0 l0.6,-2.6 M654.0,613.0 l7.0,3.9 M647.0,620.0 l-2.8,-7.6 M654.0,620.0 l-6.9,-6.9 M661.0,620.0 l-0.6,-1.6 M661.0,627.0 l1.4,5.3 M654.0,634.0 l-2.2,-2.2 M600.0,588.0 l0.4,5.1 M614.0,588.0 l6.1,7.9 M607.0,595.0 l6.6,0.8 M621.0,595.0 l0.0,6.4 M600.0,602.0 l2.1,4.9 M614.0,602.0 l-7.9,-2.6 M628.0,602.0 l1.6,6.5 M607.0,609.0 l7.1,-0.9 M628.0,609.0 l-5.4,-1.4 M600.0,616.0 l-2.9,0.1 M621.0,616.0 l1.5,-5.7 M607.0,623.0 l5.6,3.7 M628.0,644.0 l4.0,5.7 M607.0,651.0 l3.3,2.1 M600.0,658.0 l-5.1,-5.6 M614.0,658.0 l-1.0,4.7 M717.0,655.0 l6.9,4.1 M703.0,662.0 l4.4,-6.4 M731.0,662.0 l2.5,-3.6 M731.0,669.0 l2.9,-7.1 M717.0,676.0 l2.2,-2.0 M731.0,676.0 l-0.6,-0.5 M717.0,683.0 l5.0,-6.1 M724.0,683.0 l6.9,-0.4 M717.0,690.0 l6.5,1.8 M615.8,671.0 l-0.6,5.2 M667.0,671.0 l-6.0,-3.5 M603.0,677.4 l0.9,-4.7 M628.6,677.4 l-7.2,-1.2 M647.8,677.4 l-5.1,5.3 M667.0,677.4 l5.3,7.7 M673.4,677.4 l-2.2,2.6 M692.6,677.4 l3.6,0.8 M699.0,677.4 l-5.5,-5.6 M615.8,683.8 l4.1,-4.1 M622.2,683.8 l-6.5,-0.4 M628.6,683.8 l2.7,5.4 M654.2,683.8 l-3.1,-2.8 M667.0,683.8 l5.6,2.4 M692.6,683.8 l6.4,-7.9 M699.0,683.8 l3.0,7.9 M603.0,690.2 l-1.6,3.0 M622.2,690.2 l2.7,-0.1 M641.4,690.2 l3.0,3.2 M654.2,690.2 l-2.8,-7.1 M686.2,690.2 l-1.9,2.7 M635.0,696.6 l-3.6,0.0 M641.4,696.6 l0.5,-3.6 M686.2,696.6 l-4.3,4.6 M603.0,703.0 l7.4,0.4 M615.8,703.0 l-2.6,-6.3 M699.0,703.0 l-7.7,2.8 M609.4,709.4 l1.4,1.2 M622.2,709.4 l-3.0,-1.3 M667.0,709.4 l-3.8,4.0 M679.8,709.4 l-2.1,-1.1 M692.6,709.4 l0.2,-0.1 M679.8,715.8 l1.8,-5.3 M686.2,715.8 l-0.3,1.9 M699.0,715.8 l-0.9,5.3 M615.8,722.2 l1.8,-7.5 M635.0,722.2 l5.2,0.3 M654.2,722.2 l6.4,-2.6 M660.6,722.2 l2.0,-6.1 M699.0,722.2 l-6.5,6.8 M603.0,728.6 l3.2,-0.6 M622.2,728.6 l3.1,-1.7 M699.0,728.6 l4.4,-3.3 M615.8,735.0 l-6.4,-1.4 M660.6,735.0 l1.2,2.4 M673.4,735.0 l0.8,3.7 M679.8,735.0 l-4.0,-6.7 M699.0,735.0 l-4.4,-7.9 M609.4,741.4 l-7.4,4.1 M654.2,741.4 l-2.1,6.1 M660.6,741.4 l2.0,2.1 M647.8,747.8 l-7.3,-0.8 M654.2,747.8 l-1.0,4.2 M673.4,747.8 l-0.9,6.6 M679.8,747.8 l6.8,-6.3 M692.6,747.8 l-4.4,-6.7 M699.0,747.8 l5.1,-1.3 M603.0,754.2 l3.9,-6.4 M615.8,754.2 l3.1,1.4 M641.4,754.2 l-6.2,0.1 M673.4,754.2 l8.0,2.4 M647.8,760.6 l3.9,3.4 M686.2,760.6 l-2.6,-6.4 M609.4,767.0 l7.4,-4.3 M615.8,773.4 l2.9,6.3 M635.0,773.4 l7.5,-5.2 M673.4,773.4 l-2.6,-7.8 M622.2,779.8 l0.7,-2.0 M647.8,779.8 l6.1,2.6 M615.8,786.2 l-0.6,0.8 M647.8,786.2 l4.6,-7.5 M783.0,740.0 l0.3,-1.8 M776.0,754.0 l-2.7,-5.5 M769.0,761.0 l5.1,5.1 M776.0,761.0 l-8.0,5.9 M783.0,761.0 l4.3,4.4 M783.0,782.0 l3.2,2.8 M788.0,700.0 l-6.3,-2.4 M795.0,700.0 l-6.8,4.0 M802.0,700.0 l2.6,6.0 M788.0,707.0 l-2.8,-3.5 M781.0,721.0 l6.7,2.2 M795.0,721.0 l5.6,5.1 M774.0,728.0 l-2.0,-1.4 M781.0,735.0 l-2.5,4.5 M788.0,735.0 l4.5,-0.9 M795.0,735.0 l2.7,3.0 M809.0,735.0 l-7.3,-0.2 M781.0,742.0 l5.1,-0.7 M795.0,742.0 l7.6,2.8 M802.0,749.0 l6.0,-7.5 M781.0,756.0 l-0.5,-8.0 M795.0,756.0 l0.6,1.6 M809.0,763.0 l-1.1,6.4 M774.0,770.0 l6.4,-3.6 M781.0,770.0 l-5.1,-4.0 M809.0,777.0 l0.5,-5.2 M759.0,705.0 l2.0,5.8 M759.0,719.0 l0.7,7.1 M759.0,726.0 l7.3,-6.4 M759.0,754.0 l3.3,3.6 M766.0,754.0 l6.8,-1.0 M759.0,761.0 l6.8,-3.7 M570.0,781.0 l6.0,-1.3 M591.0,781.0 l-7.7,-2.7 M563.0,788.0 l6.7,-0.3" fill="none" stroke="#4a7df4" stroke-width="1.1" stroke-linejoin="round"/>
<path d="M784.2,366.7h5.6v5.6h-5.6zM791.2,364.8h5.6v5.6h-5.6zM796.0,366.0h5.6v5.6h-5.6zM802.4,366.6h5.6v5.6h-5.6zM808.9,367.6h5.6v5.6h-5.6zM814.1,365.6h5.6v5.6h-5.6zM785.4,372.6h5.6v5.6h-5.6zM789.9,370.9h5.6v5.6h-5.6zM797.5,372.1h5.6v5.6h-5.6zM803.8,371.4h5.6v5.6h-5.6zM810.3,372.9h5.6v5.6h-5.6zM770.2,388.8h5.6v5.6h-5.6zM776.2,391.3h5.6v5.6h-5.6zM782.1,390.4h5.6v5.6h-5.6zM788.9,390.1h5.6v5.6h-5.6zM794.0,390.6h5.6v5.6h-5.6zM798.6,389.9h5.6v5.6h-5.6zM804.9,389.2h5.6v5.6h-5.6zM810.0,389.9h5.6v5.6h-5.6zM816.4,390.3h5.6v5.6h-5.6zM771.3,395.3h5.6v5.6h-5.6zM777.2,397.4h5.6v5.6h-5.6zM781.8,396.3h5.6v5.6h-5.6zM787.4,395.6h5.6v5.6h-5.6zM799.6,396.5h5.6v5.6h-5.6zM805.9,395.7h5.6v5.6h-5.6zM811.2,394.7h5.6v5.6h-5.6zM815.3,394.5h5.6v5.6h-5.6zM771.3,402.1h5.6v5.6h-5.6zM774.9,402.8h5.6v5.6h-5.6zM781.8,400.6h5.6v5.6h-5.6zM786.6,400.4h5.6v5.6h-5.6zM792.3,401.9h5.6v5.6h-5.6zM799.8,401.1h5.6v5.6h-5.6zM805.8,401.9h5.6v5.6h-5.6zM810.0,402.7h5.6v5.6h-5.6zM817.5,402.8h5.6v5.6h-5.6zM770.3,407.2h5.6v5.6h-5.6zM776.6,409.0h5.6v5.6h-5.6zM792.6,406.7h5.6v5.6h-5.6zM799.1,408.1h5.6v5.6h-5.6zM805.5,408.8h5.6v5.6h-5.6zM810.7,406.6h5.6v5.6h-5.6zM817.5,409.0h5.6v5.6h-5.6zM771.5,414.1h5.6v5.6h-5.6zM782.8,414.8h5.6v5.6h-5.6zM787.7,412.3h5.6v5.6h-5.6zM794.7,413.2h5.6v5.6h-5.6zM798.3,412.7h5.6v5.6h-5.6zM805.3,412.7h5.6v5.6h-5.6zM812.0,413.0h5.6v5.6h-5.6zM817.8,413.2h5.6v5.6h-5.6zM770.3,419.3h5.6v5.6h-5.6zM776.9,418.2h5.6v5.6h-5.6zM782.0,418.7h5.6v5.6h-5.6zM788.5,418.0h5.6v5.6h-5.6zM792.7,420.0h5.6v5.6h-5.6zM800.0,420.4h5.6v5.6h-5.6zM805.0,419.2h5.6v5.6h-5.6zM810.9,419.1h5.6v5.6h-5.6zM817.7,420.5h5.6v5.6h-5.6zM771.5,426.0h5.6v5.6h-5.6zM775.2,423.7h5.6v5.6h-5.6zM783.0,424.0h5.6v5.6h-5.6zM786.5,426.1h5.6v5.6h-5.6zM794.8,424.7h5.6v5.6h-5.6zM804.8,425.0h5.6v5.6h-5.6zM810.3,425.7h5.6v5.6h-5.6zM816.1,425.4h5.6v5.6h-5.6zM437.7,413.1h5.6v5.6h-5.6zM442.5,410.8h5.6v5.6h-5.6zM449.1,412.0h5.6v5.6h-5.6zM465.5,412.4h5.6v5.6h-5.6zM469.9,412.8h5.6v5.6h-5.6zM479.5,412.6h5.6v5.6h-5.6zM437.3,417.9h5.6v5.6h-5.6zM442.7,419.4h5.6v5.6h-5.6zM449.1,419.3h5.6v5.6h-5.6zM456.3,418.6h5.6v5.6h-5.6zM470.2,418.7h5.6v5.6h-5.6zM436.1,427.5h5.6v5.6h-5.6zM444.2,425.9h5.6v5.6h-5.6zM458.2,426.8h5.6v5.6h-5.6zM463.7,424.9h5.6v5.6h-5.6zM470.2,425.0h5.6v5.6h-5.6zM435.4,432.6h5.6v5.6h-5.6zM443.0,432.5h5.6v5.6h-5.6zM458.6,432.6h5.6v5.6h-5.6zM463.8,433.1h5.6v5.6h-5.6zM471.2,431.7h5.6v5.6h-5.6zM477.9,431.8h5.6v5.6h-5.6zM456.7,441.7h5.6v5.6h-5.6zM465.2,441.4h5.6v5.6h-5.6zM478.3,440.2h5.6v5.6h-5.6zM455.8,446.1h5.6v5.6h-5.6zM465.2,447.4h5.6v5.6h-5.6zM476.7,448.1h5.6v5.6h-5.6zM436.3,454.7h5.6v5.6h-5.6zM442.5,454.9h5.6v5.6h-5.6zM449.8,454.1h5.6v5.6h-5.6zM450.1,461.1h5.6v5.6h-5.6zM464.1,462.2h5.6v5.6h-5.6zM470.5,460.3h5.6v5.6h-5.6zM478.4,460.1h5.6v5.6h-5.6zM451.4,468.2h5.6v5.6h-5.6zM456.6,467.1h5.6v5.6h-5.6zM465.2,466.7h5.6v5.6h-5.6zM569.9,405.7h5.6v5.6h-5.6zM576.0,403.5h5.6v5.6h-5.6zM583.5,403.4h5.6v5.6h-5.6zM587.3,403.8h5.6v5.6h-5.6zM595.1,404.6h5.6v5.6h-5.6zM574.8,410.9h5.6v5.6h-5.6zM582.6,409.6h5.6v5.6h-5.6zM587.7,409.6h5.6v5.6h-5.6zM569.6,416.4h5.6v5.6h-5.6zM575.2,415.3h5.6v5.6h-5.6zM581.4,417.4h5.6v5.6h-5.6zM587.1,415.3h5.6v5.6h-5.6zM593.5,416.4h5.6v5.6h-5.6zM569.9,421.9h5.6v5.6h-5.6zM575.7,420.9h5.6v5.6h-5.6zM587.3,421.5h5.6v5.6h-5.6zM568.8,426.8h5.6v5.6h-5.6zM576.1,428.5h5.6v5.6h-5.6zM583.3,429.6h5.6v5.6h-5.6zM588.7,429.5h5.6v5.6h-5.6zM595.0,428.1h5.6v5.6h-5.6zM571.0,433.4h5.6v5.6h-5.6zM575.6,433.1h5.6v5.6h-5.6zM582.8,433.0h5.6v5.6h-5.6zM587.4,434.5h5.6v5.6h-5.6zM570.1,439.4h5.6v5.6h-5.6zM574.8,440.2h5.6v5.6h-5.6zM581.5,440.7h5.6v5.6h-5.6zM586.8,439.7h5.6v5.6h-5.6zM593.3,441.1h5.6v5.6h-5.6zM569.3,447.6h5.6v5.6h-5.6zM575.4,445.4h5.6v5.6h-5.6zM583.6,446.2h5.6v5.6h-5.6zM589.5,445.1h5.6v5.6h-5.6zM595.6,445.1h5.6v5.6h-5.6zM629.4,402.9h5.6v5.6h-5.6zM641.5,402.9h5.6v5.6h-5.6zM645.7,401.2h5.6v5.6h-5.6zM659.2,403.2h5.6v5.6h-5.6zM664.1,401.8h5.6v5.6h-5.6zM627.8,409.4h5.6v5.6h-5.6zM632.8,406.8h5.6v5.6h-5.6zM641.4,407.7h5.6v5.6h-5.6zM652.8,407.6h5.6v5.6h-5.6zM659.0,409.4h5.6v5.6h-5.6zM633.5,414.0h5.6v5.6h-5.6zM647.0,414.5h5.6v5.6h-5.6zM651.8,415.0h5.6v5.6h-5.6zM656.9,412.8h5.6v5.6h-5.6zM665.6,415.4h5.6v5.6h-5.6zM627.0,419.0h5.6v5.6h-5.6zM634.0,419.4h5.6v5.6h-5.6zM640.7,420.9h5.6v5.6h-5.6zM645.1,421.2h5.6v5.6h-5.6zM651.8,420.9h5.6v5.6h-5.6zM659.4,420.4h5.6v5.6h-5.6zM665.7,420.2h5.6v5.6h-5.6zM635.4,424.8h5.6v5.6h-5.6zM639.3,427.6h5.6v5.6h-5.6zM652.0,425.5h5.6v5.6h-5.6zM663.8,425.1h5.6v5.6h-5.6zM627.3,430.7h5.6v5.6h-5.6zM633.3,431.6h5.6v5.6h-5.6zM639.0,431.9h5.6v5.6h-5.6zM645.0,431.2h5.6v5.6h-5.6zM651.5,431.6h5.6v5.6h-5.6zM658.4,431.8h5.6v5.6h-5.6zM665.7,431.8h5.6v5.6h-5.6zM629.4,438.0h5.6v5.6h-5.6zM635.3,438.1h5.6v5.6h-5.6zM641.4,437.0h5.6v5.6h-5.6zM646.2,437.1h5.6v5.6h-5.6zM653.5,437.0h5.6v5.6h-5.6zM659.6,437.3h5.6v5.6h-5.6zM662.9,439.5h5.6v5.6h-5.6zM678.6,391.2h5.6v5.6h-5.6zM685.0,391.2h5.6v5.6h-5.6zM689.5,389.1h5.6v5.6h-5.6zM695.8,391.0h5.6v5.6h-5.6zM701.6,390.6h5.6v5.6h-5.6zM707.4,390.0h5.6v5.6h-5.6zM712.8,388.8h5.6v5.6h-5.6zM718.0,391.0h5.6v5.6h-5.6zM723.6,390.1h5.6v5.6h-5.6zM730.2,390.2h5.6v5.6h-5.6zM737.0,390.2h5.6v5.6h-5.6zM748.7,389.3h5.6v5.6h-5.6zM755.0,391.4h5.6v5.6h-5.6zM759.0,391.0h5.6v5.6h-5.6zM764.1,390.2h5.6v5.6h-5.6zM677.5,396.0h5.6v5.6h-5.6zM683.0,395.0h5.6v5.6h-5.6zM691.0,395.0h5.6v5.6h-5.6zM695.7,396.4h5.6v5.6h-5.6zM701.6,396.2h5.6v5.6h-5.6zM708.7,396.4h5.6v5.6h-5.6zM712.3,397.5h5.6v5.6h-5.6zM719.6,395.8h5.6v5.6h-5.6zM723.9,396.4h5.6v5.6h-5.6zM730.9,395.4h5.6v5.6h-5.6zM736.0,396.0h5.6v5.6h-5.6zM741.2,396.5h5.6v5.6h-5.6zM747.4,395.2h5.6v5.6h-5.6zM752.7,396.4h5.6v5.6h-5.6zM760.7,395.2h5.6v5.6h-5.6zM766.0,395.7h5.6v5.6h-5.6zM678.6,402.0h5.6v5.6h-5.6zM683.8,403.1h5.6v5.6h-5.6zM691.0,400.4h5.6v5.6h-5.6zM694.8,400.5h5.6v5.6h-5.6zM701.6,403.1h5.6v5.6h-5.6zM707.6,402.7h5.6v5.6h-5.6zM714.2,402.6h5.6v5.6h-5.6zM719.8,402.5h5.6v5.6h-5.6zM724.5,401.0h5.6v5.6h-5.6zM731.1,402.4h5.6v5.6h-5.6zM735.5,402.0h5.6v5.6h-5.6zM742.1,401.1h5.6v5.6h-5.6zM752.8,402.5h5.6v5.6h-5.6zM758.9,402.9h5.6v5.6h-5.6zM766.4,402.2h5.6v5.6h-5.6zM679.6,407.5h5.6v5.6h-5.6zM685.1,407.4h5.6v5.6h-5.6zM689.2,406.7h5.6v5.6h-5.6zM696.8,406.5h5.6v5.6h-5.6zM700.3,406.2h5.6v5.6h-5.6zM707.9,406.3h5.6v5.6h-5.6zM714.0,408.6h5.6v5.6h-5.6zM719.9,408.8h5.6v5.6h-5.6zM723.7,406.4h5.6v5.6h-5.6zM731.4,408.0h5.6v5.6h-5.6zM735.0,408.4h5.6v5.6h-5.6zM741.3,406.9h5.6v5.6h-5.6zM747.3,409.0h5.6v5.6h-5.6zM754.0,406.2h5.6v5.6h-5.6zM760.2,407.1h5.6v5.6h-5.6zM764.3,408.7h5.6v5.6h-5.6zM677.3,414.2h5.6v5.6h-5.6zM684.0,413.4h5.6v5.6h-5.6zM689.8,412.9h5.6v5.6h-5.6zM696.9,412.8h5.6v5.6h-5.6zM701.8,412.1h5.6v5.6h-5.6zM708.1,413.8h5.6v5.6h-5.6zM712.7,414.6h5.6v5.6h-5.6zM718.1,414.6h5.6v5.6h-5.6zM725.8,412.6h5.6v5.6h-5.6zM731.2,414.2h5.6v5.6h-5.6zM735.7,412.4h5.6v5.6h-5.6zM742.7,412.4h5.6v5.6h-5.6zM748.0,412.3h5.6v5.6h-5.6zM752.8,412.5h5.6v5.6h-5.6zM760.4,412.4h5.6v5.6h-5.6zM764.2,412.9h5.6v5.6h-5.6zM679.6,418.0h5.6v5.6h-5.6zM689.6,418.3h5.6v5.6h-5.6zM694.7,418.9h5.6v5.6h-5.6zM701.4,419.6h5.6v5.6h-5.6zM707.5,418.9h5.6v5.6h-5.6zM712.8,419.4h5.6v5.6h-5.6zM718.0,419.9h5.6v5.6h-5.6zM725.2,420.3h5.6v5.6h-5.6zM730.3,418.6h5.6v5.6h-5.6zM736.0,420.0h5.6v5.6h-5.6zM741.3,419.0h5.6v5.6h-5.6zM747.5,419.7h5.6v5.6h-5.6zM754.1,420.0h5.6v5.6h-5.6zM760.8,417.8h5.6v5.6h-5.6zM766.0,420.5h5.6v5.6h-5.6zM678.4,425.1h5.6v5.6h-5.6zM684.4,426.0h5.6v5.6h-5.6zM691.1,424.1h5.6v5.6h-5.6zM696.4,423.9h5.6v5.6h-5.6zM700.1,424.3h5.6v5.6h-5.6zM707.0,424.8h5.6v5.6h-5.6zM712.3,424.2h5.6v5.6h-5.6zM725.5,424.7h5.6v5.6h-5.6zM730.8,424.9h5.6v5.6h-5.6zM737.6,424.6h5.6v5.6h-5.6zM742.9,424.9h5.6v5.6h-5.6zM746.7,426.0h5.6v5.6h-5.6zM752.9,424.6h5.6v5.6h-5.6zM758.5,423.5h5.6v5.6h-5.6zM764.4,424.4h5.6v5.6h-5.6zM678.6,431.3h5.6v5.6h-5.6zM690.8,432.0h5.6v5.6h-5.6zM696.6,431.2h5.6v5.6h-5.6zM700.7,429.6h5.6v5.6h-5.6zM706.2,432.0h5.6v5.6h-5.6zM714.2,431.1h5.6v5.6h-5.6zM720.0,431.7h5.6v5.6h-5.6zM725.2,430.9h5.6v5.6h-5.6zM731.5,431.0h5.6v5.6h-5.6zM735.1,430.8h5.6v5.6h-5.6zM742.0,430.9h5.6v5.6h-5.6zM748.8,430.7h5.6v5.6h-5.6zM754.6,430.4h5.6v5.6h-5.6zM765.5,431.3h5.6v5.6h-5.6zM604.6,404.2h5.6v5.6h-5.6zM618.3,403.8h5.6v5.6h-5.6zM604.0,410.3h5.6v5.6h-5.6zM610.4,412.2h5.6v5.6h-5.6zM602.5,418.2h5.6v5.6h-5.6zM616.7,417.6h5.6v5.6h-5.6zM610.9,437.4h5.6v5.6h-5.6zM616.6,434.7h5.6v5.6h-5.6zM740.1,451.4h5.6v5.6h-5.6zM746.0,450.7h5.6v5.6h-5.6zM754.5,449.9h5.6v5.6h-5.6zM759.1,452.1h5.6v5.6h-5.6zM732.0,456.7h5.6v5.6h-5.6zM740.5,459.6h5.6v5.6h-5.6zM745.0,458.6h5.6v5.6h-5.6zM753.8,457.1h5.6v5.6h-5.6zM761.3,457.1h5.6v5.6h-5.6zM766.3,456.9h5.6v5.6h-5.6zM775.3,458.9h5.6v5.6h-5.6zM733.5,464.5h5.6v5.6h-5.6zM737.7,463.7h5.6v5.6h-5.6zM744.9,464.6h5.6v5.6h-5.6zM754.3,465.2h5.6v5.6h-5.6zM760.7,464.1h5.6v5.6h-5.6zM767.6,465.6h5.6v5.6h-5.6zM775.1,466.5h5.6v5.6h-5.6zM780.6,463.9h5.6v5.6h-5.6zM733.2,471.7h5.6v5.6h-5.6zM745.6,472.0h5.6v5.6h-5.6zM753.8,472.5h5.6v5.6h-5.6zM759.5,470.7h5.6v5.6h-5.6zM767.5,473.1h5.6v5.6h-5.6zM775.2,473.1h5.6v5.6h-5.6zM780.5,473.3h5.6v5.6h-5.6zM733.4,478.7h5.6v5.6h-5.6zM740.0,480.5h5.6v5.6h-5.6zM745.3,478.5h5.6v5.6h-5.6zM753.1,478.0h5.6v5.6h-5.6zM759.4,479.4h5.6v5.6h-5.6zM767.3,479.1h5.6v5.6h-5.6zM773.3,478.2h5.6v5.6h-5.6zM781.4,478.9h5.6v5.6h-5.6zM786.8,480.7h5.6v5.6h-5.6zM732.6,487.1h5.6v5.6h-5.6zM737.8,484.8h5.6v5.6h-5.6zM746.2,486.4h5.6v5.6h-5.6zM753.0,487.5h5.6v5.6h-5.6zM761.6,485.5h5.6v5.6h-5.6zM765.9,486.4h5.6v5.6h-5.6zM775.5,487.4h5.6v5.6h-5.6zM782.6,485.5h5.6v5.6h-5.6zM789.6,486.7h5.6v5.6h-5.6zM731.2,494.6h5.6v5.6h-5.6zM737.8,492.5h5.6v5.6h-5.6zM747.4,494.2h5.6v5.6h-5.6zM754.7,491.9h5.6v5.6h-5.6zM759.6,493.5h5.6v5.6h-5.6zM766.7,492.5h5.6v5.6h-5.6zM773.1,493.7h5.6v5.6h-5.6zM782.5,492.4h5.6v5.6h-5.6zM789.4,492.1h5.6v5.6h-5.6zM733.5,501.2h5.6v5.6h-5.6zM738.7,501.2h5.6v5.6h-5.6zM745.1,499.4h5.6v5.6h-5.6zM754.3,499.5h5.6v5.6h-5.6zM759.5,501.2h5.6v5.6h-5.6zM767.2,499.7h5.6v5.6h-5.6zM775.6,498.9h5.6v5.6h-5.6zM780.3,500.1h5.6v5.6h-5.6zM787.3,499.8h5.6v5.6h-5.6zM738.6,508.4h5.6v5.6h-5.6zM751.7,508.2h5.6v5.6h-5.6zM760.0,508.4h5.6v5.6h-5.6zM768.0,507.8h5.6v5.6h-5.6zM774.2,506.5h5.6v5.6h-5.6zM781.4,506.3h5.6v5.6h-5.6zM786.9,508.1h5.6v5.6h-5.6zM848.0,406.4h5.6v5.6h-5.6zM864.5,404.8h5.6v5.6h-5.6zM870.6,405.0h5.6v5.6h-5.6zM843.1,413.1h5.6v5.6h-5.6zM850.1,411.8h5.6v5.6h-5.6zM857.6,413.6h5.6v5.6h-5.6zM863.6,412.3h5.6v5.6h-5.6zM869.3,411.5h5.6v5.6h-5.6zM827.3,419.8h5.6v5.6h-5.6zM835.6,419.8h5.6v5.6h-5.6zM841.4,419.2h5.6v5.6h-5.6zM848.4,418.9h5.6v5.6h-5.6zM856.7,419.9h5.6v5.6h-5.6zM863.3,420.2h5.6v5.6h-5.6zM871.8,420.0h5.6v5.6h-5.6zM821.0,426.0h5.6v5.6h-5.6zM842.6,427.6h5.6v5.6h-5.6zM849.3,426.6h5.6v5.6h-5.6zM855.2,426.0h5.6v5.6h-5.6zM862.4,427.6h5.6v5.6h-5.6zM843.8,433.6h5.6v5.6h-5.6zM849.3,434.6h5.6v5.6h-5.6zM856.9,432.1h5.6v5.6h-5.6zM870.4,433.3h5.6v5.6h-5.6zM814.2,439.6h5.6v5.6h-5.6zM829.0,439.3h5.6v5.6h-5.6zM835.6,440.5h5.6v5.6h-5.6zM841.7,439.4h5.6v5.6h-5.6zM849.8,438.7h5.6v5.6h-5.6zM865.0,439.6h5.6v5.6h-5.6zM869.2,441.3h5.6v5.6h-5.6zM814.2,447.0h5.6v5.6h-5.6zM820.7,448.6h5.6v5.6h-5.6zM828.0,446.8h5.6v5.6h-5.6zM808.9,454.4h5.6v5.6h-5.6zM828.4,454.9h5.6v5.6h-5.6zM835.7,453.9h5.6v5.6h-5.6zM849.3,453.3h5.6v5.6h-5.6zM856.7,454.4h5.6v5.6h-5.6zM778.1,461.4h5.6v5.6h-5.6zM795.0,461.3h5.6v5.6h-5.6zM807.8,460.8h5.6v5.6h-5.6zM821.1,460.9h5.6v5.6h-5.6zM829.6,462.6h5.6v5.6h-5.6zM835.9,462.7h5.6v5.6h-5.6zM843.4,460.2h5.6v5.6h-5.6zM855.3,462.4h5.6v5.6h-5.6zM785.9,468.2h5.6v5.6h-5.6zM792.5,468.6h5.6v5.6h-5.6zM802.0,468.6h5.6v5.6h-5.6zM808.1,466.7h5.6v5.6h-5.6zM828.9,468.3h5.6v5.6h-5.6zM835.2,467.1h5.6v5.6h-5.6zM841.5,468.3h5.6v5.6h-5.6zM855.0,469.0h5.6v5.6h-5.6zM869.8,467.0h5.6v5.6h-5.6zM793.0,475.0h5.6v5.6h-5.6zM801.7,475.4h5.6v5.6h-5.6zM807.9,474.4h5.6v5.6h-5.6zM815.7,476.1h5.6v5.6h-5.6zM829.8,474.4h5.6v5.6h-5.6zM843.4,474.4h5.6v5.6h-5.6zM855.3,475.3h5.6v5.6h-5.6zM862.2,474.1h5.6v5.6h-5.6zM792.7,481.3h5.6v5.6h-5.6zM799.1,482.7h5.6v5.6h-5.6zM808.1,481.0h5.6v5.6h-5.6zM829.9,481.3h5.6v5.6h-5.6zM834.7,482.1h5.6v5.6h-5.6zM848.7,482.5h5.6v5.6h-5.6zM856.6,481.5h5.6v5.6h-5.6zM864.0,482.4h5.6v5.6h-5.6zM792.3,488.2h5.6v5.6h-5.6zM801.0,488.0h5.6v5.6h-5.6zM807.5,488.6h5.6v5.6h-5.6zM815.2,488.5h5.6v5.6h-5.6zM834.8,487.8h5.6v5.6h-5.6zM850.0,489.8h5.6v5.6h-5.6zM799.1,495.2h5.6v5.6h-5.6zM806.9,496.6h5.6v5.6h-5.6zM822.1,495.7h5.6v5.6h-5.6zM827.1,497.3h5.6v5.6h-5.6zM834.7,495.0h5.6v5.6h-5.6zM843.7,496.9h5.6v5.6h-5.6zM792.3,504.5h5.6v5.6h-5.6zM822.1,503.0h5.6v5.6h-5.6zM842.6,504.6h5.6v5.6h-5.6zM792.7,508.9h5.6v5.6h-5.6zM799.6,509.6h5.6v5.6h-5.6zM806.7,510.2h5.6v5.6h-5.6zM822.7,509.1h5.6v5.6h-5.6zM829.4,510.3h5.6v5.6h-5.6zM836.0,510.5h5.6v5.6h-5.6zM771.9,516.8h5.6v5.6h-5.6zM780.1,517.0h5.6v5.6h-5.6zM785.5,515.9h5.6v5.6h-5.6zM794.2,518.6h5.6v5.6h-5.6zM800.5,517.0h5.6v5.6h-5.6zM827.4,515.8h5.6v5.6h-5.6zM779.9,525.2h5.6v5.6h-5.6zM787.4,525.2h5.6v5.6h-5.6zM792.6,525.2h5.6v5.6h-5.6zM800.7,523.8h5.6v5.6h-5.6zM806.1,524.4h5.6v5.6h-5.6zM779.5,530.2h5.6v5.6h-5.6zM785.2,531.8h5.6v5.6h-5.6zM792.1,531.0h5.6v5.6h-5.6zM773.0,538.2h5.6v5.6h-5.6zM779.3,538.7h5.6v5.6h-5.6zM793.0,537.3h5.6v5.6h-5.6zM793.7,546.6h5.6v5.6h-5.6zM780.7,550.8h5.6v5.6h-5.6zM787.0,551.8h5.6v5.6h-5.6zM793.6,552.4h5.6v5.6h-5.6zM778.5,560.4h5.6v5.6h-5.6zM787.6,558.5h5.6v5.6h-5.6zM786.7,565.4h5.6v5.6h-5.6zM867.2,462.5h5.6v5.6h-5.6zM874.8,462.4h5.6v5.6h-5.6zM887.7,461.9h5.6v5.6h-5.6zM899.3,460.7h5.6v5.6h-5.6zM866.6,469.3h5.6v5.6h-5.6zM893.9,468.2h5.6v5.6h-5.6zM900.7,467.6h5.6v5.6h-5.6zM920.1,467.5h5.6v5.6h-5.6zM925.0,467.8h5.6v5.6h-5.6zM872.3,474.0h5.6v5.6h-5.6zM880.4,474.6h5.6v5.6h-5.6zM885.6,476.3h5.6v5.6h-5.6zM894.1,476.5h5.6v5.6h-5.6zM900.8,476.1h5.6v5.6h-5.6zM905.9,475.1h5.6v5.6h-5.6zM918.7,474.3h5.6v5.6h-5.6zM924.3,474.2h5.6v5.6h-5.6zM867.4,481.4h5.6v5.6h-5.6zM873.9,481.2h5.6v5.6h-5.6zM879.1,482.2h5.6v5.6h-5.6zM886.7,481.0h5.6v5.6h-5.6zM894.6,483.2h5.6v5.6h-5.6zM906.6,481.3h5.6v5.6h-5.6zM926.5,482.4h5.6v5.6h-5.6zM860.3,488.4h5.6v5.6h-5.6zM866.7,487.7h5.6v5.6h-5.6zM873.3,487.4h5.6v5.6h-5.6zM881.3,488.1h5.6v5.6h-5.6zM886.1,487.2h5.6v5.6h-5.6zM911.7,488.4h5.6v5.6h-5.6zM920.0,488.0h5.6v5.6h-5.6zM925.7,489.4h5.6v5.6h-5.6zM859.3,493.7h5.6v5.6h-5.6zM866.4,494.4h5.6v5.6h-5.6zM872.8,495.4h5.6v5.6h-5.6zM878.9,495.6h5.6v5.6h-5.6zM885.6,493.8h5.6v5.6h-5.6zM905.9,495.2h5.6v5.6h-5.6zM912.4,493.3h5.6v5.6h-5.6zM919.2,495.0h5.6v5.6h-5.6zM924.2,496.0h5.6v5.6h-5.6zM866.0,500.2h5.6v5.6h-5.6zM880.5,501.4h5.6v5.6h-5.6zM886.2,501.9h5.6v5.6h-5.6zM894.0,502.0h5.6v5.6h-5.6zM905.5,501.3h5.6v5.6h-5.6zM911.2,501.1h5.6v5.6h-5.6zM859.6,506.4h5.6v5.6h-5.6zM866.2,509.0h5.6v5.6h-5.6zM872.7,508.4h5.6v5.6h-5.6zM878.8,508.5h5.6v5.6h-5.6zM886.2,508.6h5.6v5.6h-5.6zM894.4,506.5h5.6v5.6h-5.6zM900.1,507.4h5.6v5.6h-5.6zM906.4,507.4h5.6v5.6h-5.6zM918.5,507.0h5.6v5.6h-5.6zM924.8,508.5h5.6v5.6h-5.6zM862.2,513.3h5.6v5.6h-5.6zM868.3,515.3h5.6v5.6h-5.6zM879.7,514.2h5.6v5.6h-5.6zM887.2,514.5h5.6v5.6h-5.6zM894.3,513.3h5.6v5.6h-5.6zM900.5,515.3h5.6v5.6h-5.6zM904.8,513.0h5.6v5.6h-5.6zM913.9,513.2h5.6v5.6h-5.6zM918.2,514.7h5.6v5.6h-5.6zM926.8,515.6h5.6v5.6h-5.6zM859.3,520.7h5.6v5.6h-5.6zM868.7,520.1h5.6v5.6h-5.6zM873.7,519.6h5.6v5.6h-5.6zM880.8,519.6h5.6v5.6h-5.6zM885.5,520.3h5.6v5.6h-5.6zM901.1,521.8h5.6v5.6h-5.6zM905.2,520.0h5.6v5.6h-5.6zM912.9,520.3h5.6v5.6h-5.6zM919.3,521.3h5.6v5.6h-5.6zM860.2,527.0h5.6v5.6h-5.6zM866.9,526.9h5.6v5.6h-5.6zM875.0,526.5h5.6v5.6h-5.6zM879.4,526.3h5.6v5.6h-5.6zM893.3,526.6h5.6v5.6h-5.6zM900.4,528.3h5.6v5.6h-5.6zM907.7,526.4h5.6v5.6h-5.6zM860.4,533.8h5.6v5.6h-5.6zM866.7,534.1h5.6v5.6h-5.6zM874.0,533.0h5.6v5.6h-5.6zM880.9,533.8h5.6v5.6h-5.6zM885.6,535.0h5.6v5.6h-5.6zM893.3,534.6h5.6v5.6h-5.6zM900.1,534.7h5.6v5.6h-5.6zM860.3,541.1h5.6v5.6h-5.6zM866.0,539.9h5.6v5.6h-5.6zM873.5,540.1h5.6v5.6h-5.6zM885.9,539.8h5.6v5.6h-5.6zM891.8,539.3h5.6v5.6h-5.6zM846.7,547.4h5.6v5.6h-5.6zM853.4,547.7h5.6v5.6h-5.6zM860.5,547.6h5.6v5.6h-5.6zM865.8,546.5h5.6v5.6h-5.6zM873.1,546.4h5.6v5.6h-5.6zM886.9,548.0h5.6v5.6h-5.6zM841.7,552.7h5.6v5.6h-5.6zM847.7,554.4h5.6v5.6h-5.6zM854.5,553.1h5.6v5.6h-5.6zM868.4,553.0h5.6v5.6h-5.6zM874.7,553.7h5.6v5.6h-5.6zM878.8,553.7h5.6v5.6h-5.6zM840.4,558.4h5.6v5.6h-5.6zM846.5,560.5h5.6v5.6h-5.6zM854.7,560.3h5.6v5.6h-5.6zM861.3,559.5h5.6v5.6h-5.6zM836.2,565.5h5.6v5.6h-5.6zM840.5,567.3h5.6v5.6h-5.6zM847.5,564.9h5.6v5.6h-5.6zM826.9,572.8h5.6v5.6h-5.6zM834.7,573.0h5.6v5.6h-5.6zM847.1,572.8h5.6v5.6h-5.6zM853.7,572.0h5.6v5.6h-5.6zM822.3,580.1h5.6v5.6h-5.6zM829.5,579.0h5.6v5.6h-5.6zM834.5,579.6h5.6v5.6h-5.6zM840.2,580.5h5.6v5.6h-5.6zM822.2,585.1h5.6v5.6h-5.6zM841.7,585.0h5.6v5.6h-5.6zM814.2,590.9h5.6v5.6h-5.6zM822.7,591.6h5.6v5.6h-5.6zM827.2,593.4h5.6v5.6h-5.6zM813.8,598.3h5.6v5.6h-5.6zM821.8,597.5h5.6v5.6h-5.6zM807.5,606.2h5.6v5.6h-5.6zM821.2,606.0h5.6v5.6h-5.6zM808.8,610.5h5.6v5.6h-5.6zM803.6,617.7h5.6v5.6h-5.6zM807.4,617.7h5.6v5.6h-5.6zM796.4,623.7h5.6v5.6h-5.6zM800.9,624.9h5.6v5.6h-5.6zM795.6,629.8h5.6v5.6h-5.6zM480.6,671.1h5.6v5.6h-5.6zM485.8,672.7h5.6v5.6h-5.6zM493.2,673.3h5.6v5.6h-5.6zM497.0,673.3h5.6v5.6h-5.6zM504.1,671.2h5.6v5.6h-5.6zM509.8,671.3h5.6v5.6h-5.6zM515.1,671.4h5.6v5.6h-5.6zM523.4,670.7h5.6v5.6h-5.6zM481.1,678.4h5.6v5.6h-5.6zM487.0,677.2h5.6v5.6h-5.6zM491.9,678.3h5.6v5.6h-5.6zM497.0,678.4h5.6v5.6h-5.6zM502.9,677.4h5.6v5.6h-5.6zM515.7,679.1h5.6v5.6h-5.6zM527.0,677.4h5.6v5.6h-5.6zM479.2,683.7h5.6v5.6h-5.6zM487.6,685.7h5.6v5.6h-5.6zM492.2,685.0h5.6v5.6h-5.6zM498.6,683.3h5.6v5.6h-5.6zM505.1,683.0h5.6v5.6h-5.6zM509.2,685.6h5.6v5.6h-5.6zM515.1,685.2h5.6v5.6h-5.6zM529.1,684.5h5.6v5.6h-5.6zM487.1,691.3h5.6v5.6h-5.6zM505.2,689.4h5.6v5.6h-5.6zM511.4,690.8h5.6v5.6h-5.6zM517.1,691.1h5.6v5.6h-5.6zM527.0,690.7h5.6v5.6h-5.6zM486.5,697.2h5.6v5.6h-5.6zM492.2,694.7h5.6v5.6h-5.6zM498.1,695.7h5.6v5.6h-5.6zM503.6,695.0h5.6v5.6h-5.6zM510.0,696.7h5.6v5.6h-5.6zM516.7,694.8h5.6v5.6h-5.6zM521.5,697.6h5.6v5.6h-5.6zM529.4,696.5h5.6v5.6h-5.6zM486.2,703.6h5.6v5.6h-5.6zM496.7,701.2h5.6v5.6h-5.6zM505.1,701.5h5.6v5.6h-5.6zM510.4,703.3h5.6v5.6h-5.6zM517.5,703.4h5.6v5.6h-5.6zM522.6,702.0h5.6v5.6h-5.6zM528.7,702.6h5.6v5.6h-5.6zM486.7,709.4h5.6v5.6h-5.6zM493.6,706.9h5.6v5.6h-5.6zM498.4,708.0h5.6v5.6h-5.6zM504.9,708.9h5.6v5.6h-5.6zM516.5,708.4h5.6v5.6h-5.6zM521.5,709.0h5.6v5.6h-5.6zM528.0,709.6h5.6v5.6h-5.6zM486.7,713.8h5.6v5.6h-5.6zM492.8,713.5h5.6v5.6h-5.6zM497.7,713.1h5.6v5.6h-5.6zM503.2,714.9h5.6v5.6h-5.6zM509.8,715.6h5.6v5.6h-5.6zM515.6,715.5h5.6v5.6h-5.6zM521.5,713.9h5.6v5.6h-5.6zM487.4,720.1h5.6v5.6h-5.6zM493.0,719.6h5.6v5.6h-5.6zM498.7,721.0h5.6v5.6h-5.6zM505.5,720.3h5.6v5.6h-5.6zM509.5,721.0h5.6v5.6h-5.6zM517.5,719.5h5.6v5.6h-5.6zM522.7,719.9h5.6v5.6h-5.6zM527.6,720.6h5.6v5.6h-5.6zM486.8,727.0h5.6v5.6h-5.6zM497.9,727.1h5.6v5.6h-5.6zM505.3,726.3h5.6v5.6h-5.6zM511.4,725.1h5.6v5.6h-5.6zM515.9,726.2h5.6v5.6h-5.6zM522.4,725.9h5.6v5.6h-5.6zM529.2,727.1h5.6v5.6h-5.6zM486.7,733.0h5.6v5.6h-5.6zM493.4,732.9h5.6v5.6h-5.6zM499.3,731.1h5.6v5.6h-5.6zM504.5,731.5h5.6v5.6h-5.6zM509.3,731.4h5.6v5.6h-5.6zM515.8,732.8h5.6v5.6h-5.6zM522.6,731.1h5.6v5.6h-5.6zM528.0,732.4h5.6v5.6h-5.6zM487.2,737.0h5.6v5.6h-5.6zM492.4,737.4h5.6v5.6h-5.6zM499.2,739.1h5.6v5.6h-5.6zM505.0,736.8h5.6v5.6h-5.6zM508.9,738.6h5.6v5.6h-5.6zM515.9,738.2h5.6v5.6h-5.6zM523.3,739.7h5.6v5.6h-5.6zM492.7,744.8h5.6v5.6h-5.6zM497.3,743.9h5.6v5.6h-5.6zM504.9,744.2h5.6v5.6h-5.6zM510.8,743.3h5.6v5.6h-5.6zM516.8,745.6h5.6v5.6h-5.6zM528.9,742.9h5.6v5.6h-5.6zM480.6,749.5h5.6v5.6h-5.6zM486.6,751.7h5.6v5.6h-5.6zM491.2,749.8h5.6v5.6h-5.6zM498.1,749.0h5.6v5.6h-5.6zM505.7,751.4h5.6v5.6h-5.6zM511.2,749.1h5.6v5.6h-5.6zM515.5,748.8h5.6v5.6h-5.6zM523.5,751.6h5.6v5.6h-5.6zM527.9,751.1h5.6v5.6h-5.6zM478.7,755.3h5.6v5.6h-5.6zM484.7,757.2h5.6v5.6h-5.6zM490.8,757.4h5.6v5.6h-5.6zM497.7,756.6h5.6v5.6h-5.6zM504.6,755.3h5.6v5.6h-5.6zM510.5,755.1h5.6v5.6h-5.6zM516.8,756.0h5.6v5.6h-5.6zM521.9,756.7h5.6v5.6h-5.6zM528.6,756.8h5.6v5.6h-5.6zM481.4,762.5h5.6v5.6h-5.6zM485.9,763.1h5.6v5.6h-5.6zM492.9,760.8h5.6v5.6h-5.6zM496.8,761.4h5.6v5.6h-5.6zM504.7,763.5h5.6v5.6h-5.6zM514.8,763.0h5.6v5.6h-5.6zM523.1,761.2h5.6v5.6h-5.6zM529.1,763.4h5.6v5.6h-5.6zM487.3,768.4h5.6v5.6h-5.6zM492.6,768.5h5.6v5.6h-5.6zM496.9,768.3h5.6v5.6h-5.6zM502.7,768.9h5.6v5.6h-5.6zM509.1,768.7h5.6v5.6h-5.6zM521.0,768.9h5.6v5.6h-5.6zM527.0,767.8h5.6v5.6h-5.6zM534.5,667.6h5.6v5.6h-5.6zM521.3,680.2h5.6v5.6h-5.6zM527.8,680.5h5.6v5.6h-5.6zM533.7,680.0h5.6v5.6h-5.6zM526.9,693.8h5.6v5.6h-5.6zM535.0,696.0h5.6v5.6h-5.6zM528.2,701.6h5.6v5.6h-5.6zM534.3,703.6h5.6v5.6h-5.6zM535.4,709.8h5.6v5.6h-5.6zM526.3,715.6h5.6v5.6h-5.6zM533.5,716.8h5.6v5.6h-5.6zM527.0,723.8h5.6v5.6h-5.6zM526.5,728.8h5.6v5.6h-5.6zM533.5,731.6h5.6v5.6h-5.6zM532.9,742.9h5.6v5.6h-5.6zM534.2,752.6h5.6v5.6h-5.6zM535.0,757.2h5.6v5.6h-5.6zM541.0,700.9h5.6v5.6h-5.6zM545.8,701.2h5.6v5.6h-5.6zM540.5,704.7h5.6v5.6h-5.6zM547.5,706.7h5.6v5.6h-5.6zM547.4,711.4h5.6v5.6h-5.6zM542.6,717.8h5.6v5.6h-5.6zM548.1,717.5h5.6v5.6h-5.6zM540.0,723.4h5.6v5.6h-5.6zM546.8,725.0h5.6v5.6h-5.6zM540.8,730.6h5.6v5.6h-5.6zM545.9,730.7h5.6v5.6h-5.6zM539.8,736.0h5.6v5.6h-5.6zM546.1,736.1h5.6v5.6h-5.6zM539.9,741.8h5.6v5.6h-5.6zM540.4,748.9h5.6v5.6h-5.6zM548.6,749.3h5.6v5.6h-5.6zM540.2,755.3h5.6v5.6h-5.6zM539.9,760.1h5.6v5.6h-5.6zM547.7,759.8h5.6v5.6h-5.6zM539.7,766.7h5.6v5.6h-5.6zM547.1,766.9h5.6v5.6h-5.6zM547.2,772.5h5.6v5.6h-5.6zM592.1,591.5h5.6v5.6h-5.6zM618.1,589.3h5.6v5.6h-5.6zM592.5,596.9h5.6v5.6h-5.6zM599.5,596.4h5.6v5.6h-5.6zM606.5,597.2h5.6v5.6h-5.6zM592.6,603.7h5.6v5.6h-5.6zM598.7,602.8h5.6v5.6h-5.6zM606.2,602.7h5.6v5.6h-5.6zM612.1,604.4h5.6v5.6h-5.6zM618.4,603.1h5.6v5.6h-5.6zM590.1,611.3h5.6v5.6h-5.6zM605.1,610.9h5.6v5.6h-5.6zM599.4,617.0h5.6v5.6h-5.6zM612.3,619.2h5.6v5.6h-5.6zM590.4,625.7h5.6v5.6h-5.6zM611.2,625.8h5.6v5.6h-5.6zM618.8,625.3h5.6v5.6h-5.6zM591.9,632.6h5.6v5.6h-5.6zM605.1,632.7h5.6v5.6h-5.6zM619.0,633.6h5.6v5.6h-5.6zM604.4,638.3h5.6v5.6h-5.6zM611.1,638.9h5.6v5.6h-5.6zM619.4,640.5h5.6v5.6h-5.6zM598.8,646.0h5.6v5.6h-5.6zM606.0,652.6h5.6v5.6h-5.6zM597.3,658.7h5.6v5.6h-5.6zM610.7,659.2h5.6v5.6h-5.6zM618.4,659.5h5.6v5.6h-5.6zM619.0,667.1h5.6v5.6h-5.6zM604.0,673.2h5.6v5.6h-5.6zM613.1,674.9h5.6v5.6h-5.6zM618.3,675.5h5.6v5.6h-5.6zM604.2,681.8h5.6v5.6h-5.6zM619.5,680.3h5.6v5.6h-5.6zM611.0,688.7h5.6v5.6h-5.6zM618.3,688.4h5.6v5.6h-5.6zM525.0,652.3h5.6v5.6h-5.6zM525.9,658.4h5.6v5.6h-5.6zM545.6,659.7h5.6v5.6h-5.6zM524.4,667.0h5.6v5.6h-5.6zM546.9,664.9h5.6v5.6h-5.6zM551.8,666.2h5.6v5.6h-5.6zM524.3,672.1h5.6v5.6h-5.6zM531.8,673.8h5.6v5.6h-5.6zM545.5,673.7h5.6v5.6h-5.6zM560.0,674.5h5.6v5.6h-5.6zM537.8,681.6h5.6v5.6h-5.6zM546.1,680.6h5.6v5.6h-5.6zM554.0,681.0h5.6v5.6h-5.6zM559.9,679.0h5.6v5.6h-5.6zM629.6,583.0h5.6v5.6h-5.6zM637.3,583.2h5.6v5.6h-5.6zM643.7,581.1h5.6v5.6h-5.6zM651.9,583.4h5.6v5.6h-5.6zM659.6,582.5h5.6v5.6h-5.6zM630.8,589.9h5.6v5.6h-5.6zM638.1,588.7h5.6v5.6h-5.6zM651.9,588.7h5.6v5.6h-5.6zM631.0,596.5h5.6v5.6h-5.6zM650.8,595.8h5.6v5.6h-5.6zM657.0,595.4h5.6v5.6h-5.6zM630.6,604.4h5.6v5.6h-5.6zM638.5,604.1h5.6v5.6h-5.6zM631.3,617.3h5.6v5.6h-5.6zM638.0,618.0h5.6v5.6h-5.6zM643.7,616.4h5.6v5.6h-5.6zM644.6,625.4h5.6v5.6h-5.6zM659.3,624.4h5.6v5.6h-5.6zM644.2,630.9h5.6v5.6h-5.6zM591.4,583.8h5.6v5.6h-5.6zM597.9,585.0h5.6v5.6h-5.6zM611.9,586.1h5.6v5.6h-5.6zM617.8,585.8h5.6v5.6h-5.6zM624.6,584.7h5.6v5.6h-5.6zM590.3,592.2h5.6v5.6h-5.6zM598.6,593.7h5.6v5.6h-5.6zM619.5,591.3h5.6v5.6h-5.6zM604.5,598.5h5.6v5.6h-5.6zM611.2,599.1h5.6v5.6h-5.6zM624.5,599.3h5.6v5.6h-5.6zM590.5,606.9h5.6v5.6h-5.6zM605.2,607.5h5.6v5.6h-5.6zM609.9,607.1h5.6v5.6h-5.6zM618.1,606.6h5.6v5.6h-5.6zM626.0,605.4h5.6v5.6h-5.6zM596.4,612.0h5.6v5.6h-5.6zM604.1,613.0h5.6v5.6h-5.6zM623.9,613.8h5.6v5.6h-5.6zM589.8,620.0h5.6v5.6h-5.6zM605.3,620.4h5.6v5.6h-5.6zM611.6,621.5h5.6v5.6h-5.6zM617.6,620.4h5.6v5.6h-5.6zM589.8,628.3h5.6v5.6h-5.6zM605.5,627.3h5.6v5.6h-5.6zM610.0,628.4h5.6v5.6h-5.6zM617.7,627.1h5.6v5.6h-5.6zM626.4,626.7h5.6v5.6h-5.6zM604.5,635.1h5.6v5.6h-5.6zM610.9,633.8h5.6v5.6h-5.6zM626.2,633.2h5.6v5.6h-5.6zM589.3,639.9h5.6v5.6h-5.6zM596.4,639.9h5.6v5.6h-5.6zM626.5,641.0h5.6v5.6h-5.6zM589.0,649.3h5.6v5.6h-5.6zM602.9,647.1h5.6v5.6h-5.6zM610.2,647.2h5.6v5.6h-5.6zM626.6,648.0h5.6v5.6h-5.6zM589.4,656.6h5.6v5.6h-5.6zM604.9,653.9h5.6v5.6h-5.6zM589.9,663.5h5.6v5.6h-5.6zM603.2,661.8h5.6v5.6h-5.6zM612.1,663.1h5.6v5.6h-5.6zM619.1,661.9h5.6v5.6h-5.6zM701.6,646.6h5.6v5.6h-5.6zM713.5,646.4h5.6v5.6h-5.6zM701.0,651.5h5.6v5.6h-5.6zM708.3,652.2h5.6v5.6h-5.6zM722.0,652.4h5.6v5.6h-5.6zM706.0,660.3h5.6v5.6h-5.6zM728.2,659.9h5.6v5.6h-5.6zM708.5,667.5h5.6v5.6h-5.6zM714.4,667.1h5.6v5.6h-5.6zM722.3,665.9h5.6v5.6h-5.6zM727.1,666.9h5.6v5.6h-5.6zM722.1,671.8h5.6v5.6h-5.6zM729.3,674.4h5.6v5.6h-5.6zM715.5,679.3h5.6v5.6h-5.6zM721.2,679.7h5.6v5.6h-5.6zM607.8,669.1h5.6v5.6h-5.6zM626.4,668.4h5.6v5.6h-5.6zM631.1,668.1h5.6v5.6h-5.6zM638.2,668.4h5.6v5.6h-5.6zM644.0,669.4h5.6v5.6h-5.6zM658.0,669.6h5.6v5.6h-5.6zM663.6,666.8h5.6v5.6h-5.6zM684.7,668.6h5.6v5.6h-5.6zM696.5,667.6h5.6v5.6h-5.6zM601.6,673.3h5.6v5.6h-5.6zM605.5,675.6h5.6v5.6h-5.6zM637.1,674.3h5.6v5.6h-5.6zM646.0,673.1h5.6v5.6h-5.6zM652.7,673.9h5.6v5.6h-5.6zM657.3,676.0h5.6v5.6h-5.6zM671.3,673.9h5.6v5.6h-5.6zM697.4,673.9h5.6v5.6h-5.6zM601.1,680.0h5.6v5.6h-5.6zM606.8,680.7h5.6v5.6h-5.6zM611.7,680.8h5.6v5.6h-5.6zM625.3,681.8h5.6v5.6h-5.6zM632.2,682.3h5.6v5.6h-5.6zM637.3,679.7h5.6v5.6h-5.6zM645.4,680.8h5.6v5.6h-5.6zM652.7,680.2h5.6v5.6h-5.6zM663.2,679.6h5.6v5.6h-5.6zM671.0,679.7h5.6v5.6h-5.6zM675.8,681.7h5.6v5.6h-5.6zM682.4,681.5h5.6v5.6h-5.6zM695.9,680.1h5.6v5.6h-5.6zM599.5,687.9h5.6v5.6h-5.6zM605.6,686.1h5.6v5.6h-5.6zM619.4,687.4h5.6v5.6h-5.6zM637.5,687.4h5.6v5.6h-5.6zM646.4,686.0h5.6v5.6h-5.6zM658.5,686.9h5.6v5.6h-5.6zM664.8,686.7h5.6v5.6h-5.6zM669.1,686.2h5.6v5.6h-5.6zM684.5,688.1h5.6v5.6h-5.6zM688.4,687.0h5.6v5.6h-5.6zM625.9,693.7h5.6v5.6h-5.6zM632.2,694.1h5.6v5.6h-5.6zM638.4,694.3h5.6v5.6h-5.6zM659.1,693.8h5.6v5.6h-5.6zM663.9,694.4h5.6v5.6h-5.6zM671.3,692.9h5.6v5.6h-5.6zM676.4,693.4h5.6v5.6h-5.6zM598.9,699.8h5.6v5.6h-5.6zM625.4,699.5h5.6v5.6h-5.6zM644.8,699.6h5.6v5.6h-5.6zM650.4,699.5h5.6v5.6h-5.6zM669.7,701.0h5.6v5.6h-5.6zM678.2,700.0h5.6v5.6h-5.6zM682.7,698.8h5.6v5.6h-5.6zM688.3,699.8h5.6v5.6h-5.6zM696.7,700.6h5.6v5.6h-5.6zM599.6,705.7h5.6v5.6h-5.6zM611.6,706.1h5.6v5.6h-5.6zM619.4,705.5h5.6v5.6h-5.6zM627.0,705.4h5.6v5.6h-5.6zM633.3,705.8h5.6v5.6h-5.6zM637.2,707.5h5.6v5.6h-5.6zM645.8,706.5h5.6v5.6h-5.6zM651.0,705.8h5.6v5.6h-5.6zM663.9,707.5h5.6v5.6h-5.6zM672.1,705.4h5.6v5.6h-5.6zM675.5,705.4h5.6v5.6h-5.6zM682.8,707.2h5.6v5.6h-5.6zM697.3,705.7h5.6v5.6h-5.6zM599.7,713.3h5.6v5.6h-5.6zM605.4,714.4h5.6v5.6h-5.6zM613.5,713.1h5.6v5.6h-5.6zM620.4,712.5h5.6v5.6h-5.6zM631.2,713.5h5.6v5.6h-5.6zM638.3,712.2h5.6v5.6h-5.6zM646.0,712.6h5.6v5.6h-5.6zM650.6,714.4h5.6v5.6h-5.6zM663.3,712.0h5.6v5.6h-5.6zM682.8,713.2h5.6v5.6h-5.6zM689.2,713.5h5.6v5.6h-5.6zM697.0,713.2h5.6v5.6h-5.6zM601.0,719.0h5.6v5.6h-5.6zM639.8,719.2h5.6v5.6h-5.6zM657.3,718.1h5.6v5.6h-5.6zM663.6,718.7h5.6v5.6h-5.6zM600.5,726.9h5.6v5.6h-5.6zM614.4,725.1h5.6v5.6h-5.6zM625.0,727.2h5.6v5.6h-5.6zM632.2,724.4h5.6v5.6h-5.6zM644.1,725.3h5.6v5.6h-5.6zM656.8,727.1h5.6v5.6h-5.6zM665.1,724.9h5.6v5.6h-5.6zM671.5,724.6h5.6v5.6h-5.6zM683.6,725.0h5.6v5.6h-5.6zM690.7,725.1h5.6v5.6h-5.6zM696.5,726.2h5.6v5.6h-5.6zM613.5,733.6h5.6v5.6h-5.6zM618.3,731.4h5.6v5.6h-5.6zM624.7,731.2h5.6v5.6h-5.6zM632.1,732.3h5.6v5.6h-5.6zM639.6,730.8h5.6v5.6h-5.6zM643.6,733.0h5.6v5.6h-5.6zM650.6,733.0h5.6v5.6h-5.6zM664.1,730.9h5.6v5.6h-5.6zM678.0,733.3h5.6v5.6h-5.6zM682.2,732.2h5.6v5.6h-5.6zM689.7,731.8h5.6v5.6h-5.6zM599.0,739.2h5.6v5.6h-5.6zM614.3,738.3h5.6v5.6h-5.6zM620.7,738.6h5.6v5.6h-5.6zM626.6,739.6h5.6v5.6h-5.6zM631.9,739.8h5.6v5.6h-5.6zM645.2,737.8h5.6v5.6h-5.6zM670.0,739.2h5.6v5.6h-5.6zM677.4,739.1h5.6v5.6h-5.6zM683.2,738.1h5.6v5.6h-5.6zM688.7,739.1h5.6v5.6h-5.6zM601.1,743.8h5.6v5.6h-5.6zM607.9,743.6h5.6v5.6h-5.6zM612.0,744.7h5.6v5.6h-5.6zM618.3,745.1h5.6v5.6h-5.6zM631.4,746.4h5.6v5.6h-5.6zM645.8,744.3h5.6v5.6h-5.6zM656.8,745.1h5.6v5.6h-5.6zM670.8,744.7h5.6v5.6h-5.6zM677.3,745.6h5.6v5.6h-5.6zM684.0,743.6h5.6v5.6h-5.6zM689.7,743.5h5.6v5.6h-5.6zM695.3,745.1h5.6v5.6h-5.6zM599.4,752.4h5.6v5.6h-5.6zM614.1,750.2h5.6v5.6h-5.6zM624.9,751.2h5.6v5.6h-5.6zM631.6,750.7h5.6v5.6h-5.6zM639.5,751.4h5.6v5.6h-5.6zM645.7,751.0h5.6v5.6h-5.6zM671.5,751.7h5.6v5.6h-5.6zM684.5,750.4h5.6v5.6h-5.6zM688.9,751.3h5.6v5.6h-5.6zM696.7,750.2h5.6v5.6h-5.6zM605.7,759.2h5.6v5.6h-5.6zM612.6,758.4h5.6v5.6h-5.6zM625.8,756.9h5.6v5.6h-5.6zM670.2,758.7h5.6v5.6h-5.6zM682.4,758.0h5.6v5.6h-5.6zM690.5,757.0h5.6v5.6h-5.6zM697.2,757.2h5.6v5.6h-5.6zM598.7,764.0h5.6v5.6h-5.6zM607.7,763.8h5.6v5.6h-5.6zM611.6,763.0h5.6v5.6h-5.6zM619.4,763.4h5.6v5.6h-5.6zM639.6,762.8h5.6v5.6h-5.6zM652.3,763.2h5.6v5.6h-5.6zM657.5,763.3h5.6v5.6h-5.6zM665.0,764.6h5.6v5.6h-5.6zM676.5,765.5h5.6v5.6h-5.6zM682.9,764.8h5.6v5.6h-5.6zM606.5,771.4h5.6v5.6h-5.6zM613.4,771.5h5.6v5.6h-5.6zM618.3,770.6h5.6v5.6h-5.6zM633.1,771.0h5.6v5.6h-5.6zM638.5,769.2h5.6v5.6h-5.6zM646.4,770.3h5.6v5.6h-5.6zM657.2,770.6h5.6v5.6h-5.6zM670.9,772.1h5.6v5.6h-5.6zM675.7,770.4h5.6v5.6h-5.6zM611.5,776.7h5.6v5.6h-5.6zM625.5,775.8h5.6v5.6h-5.6zM638.9,778.1h5.6v5.6h-5.6zM652.7,778.0h5.6v5.6h-5.6zM658.0,776.6h5.6v5.6h-5.6zM670.7,778.3h5.6v5.6h-5.6zM644.5,784.5h5.6v5.6h-5.6zM779.8,729.4h5.6v5.6h-5.6zM766.5,736.7h5.6v5.6h-5.6zM767.1,743.2h5.6v5.6h-5.6zM779.5,744.2h5.6v5.6h-5.6zM767.2,750.9h5.6v5.6h-5.6zM779.6,751.8h5.6v5.6h-5.6zM767.1,758.2h5.6v5.6h-5.6zM774.5,759.1h5.6v5.6h-5.6zM773.8,772.8h5.6v5.6h-5.6zM773.3,778.1h5.6v5.6h-5.6zM772.0,698.0h5.6v5.6h-5.6zM777.5,698.0h5.6v5.6h-5.6zM799.7,696.0h5.6v5.6h-5.6zM806.0,695.8h5.6v5.6h-5.6zM772.1,704.8h5.6v5.6h-5.6zM778.8,703.1h5.6v5.6h-5.6zM784.5,704.9h5.6v5.6h-5.6zM798.8,705.5h5.6v5.6h-5.6zM806.4,705.3h5.6v5.6h-5.6zM770.0,711.2h5.6v5.6h-5.6zM778.0,712.7h5.6v5.6h-5.6zM786.2,712.4h5.6v5.6h-5.6zM792.6,711.9h5.6v5.6h-5.6zM798.6,711.2h5.6v5.6h-5.6zM806.1,712.4h5.6v5.6h-5.6zM800.2,717.3h5.6v5.6h-5.6zM805.9,717.3h5.6v5.6h-5.6zM770.0,726.6h5.6v5.6h-5.6zM779.4,726.5h5.6v5.6h-5.6zM784.0,723.9h5.6v5.6h-5.6zM792.0,726.6h5.6v5.6h-5.6zM799.0,724.2h5.6v5.6h-5.6zM806.3,725.0h5.6v5.6h-5.6zM771.2,732.0h5.6v5.6h-5.6zM777.3,730.9h5.6v5.6h-5.6zM792.3,730.8h5.6v5.6h-5.6zM800.5,733.2h5.6v5.6h-5.6zM806.4,732.7h5.6v5.6h-5.6zM771.9,739.6h5.6v5.6h-5.6zM777.4,738.3h5.6v5.6h-5.6zM784.7,740.1h5.6v5.6h-5.6zM791.9,739.4h5.6v5.6h-5.6zM799.6,738.0h5.6v5.6h-5.6zM807.2,737.7h5.6v5.6h-5.6zM777.6,745.4h5.6v5.6h-5.6zM785.9,745.7h5.6v5.6h-5.6zM793.1,747.7h5.6v5.6h-5.6zM805.9,747.0h5.6v5.6h-5.6zM772.1,753.4h5.6v5.6h-5.6zM776.8,754.0h5.6v5.6h-5.6zM785.7,754.0h5.6v5.6h-5.6zM792.9,753.7h5.6v5.6h-5.6zM798.3,752.6h5.6v5.6h-5.6zM805.7,753.9h5.6v5.6h-5.6zM771.9,759.1h5.6v5.6h-5.6zM777.0,759.5h5.6v5.6h-5.6zM786.4,761.5h5.6v5.6h-5.6zM792.8,760.4h5.6v5.6h-5.6zM805.7,759.7h5.6v5.6h-5.6zM772.2,766.6h5.6v5.6h-5.6zM777.1,766.8h5.6v5.6h-5.6zM785.0,766.6h5.6v5.6h-5.6zM800.5,768.1h5.6v5.6h-5.6zM805.7,766.1h5.6v5.6h-5.6zM770.0,775.5h5.6v5.6h-5.6zM778.8,773.4h5.6v5.6h-5.6zM792.7,773.3h5.6v5.6h-5.6zM800.6,773.3h5.6v5.6h-5.6zM805.5,773.1h5.6v5.6h-5.6zM762.4,703.0h5.6v5.6h-5.6zM764.6,708.7h5.6v5.6h-5.6zM764.2,717.0h5.6v5.6h-5.6zM756.8,729.9h5.6v5.6h-5.6zM764.5,729.9h5.6v5.6h-5.6zM757.1,736.6h5.6v5.6h-5.6zM763.2,735.9h5.6v5.6h-5.6zM757.1,757.5h5.6v5.6h-5.6zM762.1,759.7h5.6v5.6h-5.6zM755.1,766.4h5.6v5.6h-5.6zM762.1,764.9h5.6v5.6h-5.6zM756.0,770.9h5.6v5.6h-5.6zM764.6,773.2h5.6v5.6h-5.6zM560.8,778.2h5.6v5.6h-5.6zM567.2,779.1h5.6v5.6h-5.6zM573.4,778.1h5.6v5.6h-5.6zM582.4,778.2h5.6v5.6h-5.6zM559.1,785.0h5.6v5.6h-5.6zM575.0,784.6h5.6v5.6h-5.6zM581.4,785.5h5.6v5.6h-5.6zM587.7,786.2h5.6v5.6h-5.6zM489.4,723.6h5.6v5.6h-5.6zM490.4,732.1h5.6v5.6h-5.6zM489.8,739.0h5.6v5.6h-5.6zM488.9,746.2h5.6v5.6h-5.6zM486.6,752.4h5.6v5.6h-5.6zM484.5,757.5h5.6v5.6h-5.6zM481.8,763.2h5.6v5.6h-5.6zM478.9,767.3h5.6v5.6h-5.6zM476.0,771.7h5.6v5.6h-5.6zM472.1,773.4h5.6v5.6h-5.6zM469.7,774.2h5.6v5.6h-5.6zM466.0,773.1h5.6v5.6h-5.6zM464.2,772.5h5.6v5.6h-5.6zM459.8,769.9h5.6v5.6h-5.6zM457.9,767.0h5.6v5.6h-5.6zM454.9,763.9h5.6v5.6h-5.6zM451.8,757.7h5.6v5.6h-5.6zM450.7,753.1h5.6v5.6h-5.6zM448.6,746.9h5.6v5.6h-5.6zM447.1,738.2h5.6v5.6h-5.6zM446.9,730.8h5.6v5.6h-5.6zM446.5,724.1h5.6v5.6h-5.6zM447.3,717.0h5.6v5.6h-5.6zM447.4,709.3h5.6v5.6h-5.6zM449.2,703.0h5.6v5.6h-5.6zM449.5,695.7h5.6v5.6h-5.6zM451.7,690.1h5.6v5.6h-5.6zM453.8,685.5h5.6v5.6h-5.6zM458.1,681.8h5.6v5.6h-5.6zM460.4,676.9h5.6v5.6h-5.6zM463.6,675.7h5.6v5.6h-5.6zM465.6,673.6h5.6v5.6h-5.6zM469.2,674.0h5.6v5.6h-5.6zM473.9,675.5h5.6v5.6h-5.6zM476.4,677.2h5.6v5.6h-5.6zM478.5,680.4h5.6v5.6h-5.6zM482.7,684.4h5.6v5.6h-5.6zM483.6,689.6h5.6v5.6h-5.6zM486.2,696.6h5.6v5.6h-5.6zM488.0,702.3h5.6v5.6h-5.6zM490.0,709.3h5.6v5.6h-5.6zM489.5,717.7h5.6v5.6h-5.6zM485.6,724.0h5.6v5.6h-5.6zM484.2,733.2h5.6v5.6h-5.6zM484.4,740.3h5.6v5.6h-5.6zM481.9,747.1h5.6v5.6h-5.6zM480.9,754.6h5.6v5.6h-5.6zM478.5,760.0h5.6v5.6h-5.6zM474.7,764.1h5.6v5.6h-5.6zM468.4,769.3h5.6v5.6h-5.6zM464.9,769.8h5.6v5.6h-5.6zM456.5,762.9h5.6v5.6h-5.6zM452.2,756.8h5.6v5.6h-5.6zM450.9,751.9h5.6v5.6h-5.6zM448.9,743.6h5.6v5.6h-5.6zM446.4,721.0h5.6v5.6h-5.6zM448.6,711.2h5.6v5.6h-5.6zM448.8,705.0h5.6v5.6h-5.6zM450.0,696.6h5.6v5.6h-5.6zM459.1,681.5h5.6v5.6h-5.6zM461.1,680.3h5.6v5.6h-5.6zM465.6,677.9h5.6v5.6h-5.6zM468.6,679.5h5.6v5.6h-5.6zM471.4,680.7h5.6v5.6h-5.6zM475.2,683.1h5.6v5.6h-5.6zM479.9,693.4h5.6v5.6h-5.6zM482.5,700.7h5.6v5.6h-5.6zM597.3,740.9h5.6v5.6h-5.6zM597.5,746.2h5.6v5.6h-5.6zM597.6,752.7h5.6v5.6h-5.6zM596.3,760.1h5.6v5.6h-5.6zM594.0,766.2h5.6v5.6h-5.6zM590.5,771.4h5.6v5.6h-5.6zM587.5,775.2h5.6v5.6h-5.6zM584.2,779.8h5.6v5.6h-5.6zM581.5,783.1h5.6v5.6h-5.6zM576.6,785.5h5.6v5.6h-5.6zM574.1,788.3h5.6v5.6h-5.6zM569.3,788.7h5.6v5.6h-5.6zM564.3,787.4h5.6v5.6h-5.6zM561.7,786.4h5.6v5.6h-5.6zM557.0,783.9h5.6v5.6h-5.6zM553.8,782.4h5.6v5.6h-5.6zM549.4,777.3h5.6v5.6h-5.6zM547.0,773.3h5.6v5.6h-5.6zM543.2,769.1h5.6v5.6h-5.6zM542.3,762.4h5.6v5.6h-5.6zM540.0,757.1h5.6v5.6h-5.6zM538.6,750.6h5.6v5.6h-5.6zM539.0,744.1h5.6v5.6h-5.6zM538.0,736.4h5.6v5.6h-5.6zM539.5,729.8h5.6v5.6h-5.6zM539.4,724.7h5.6v5.6h-5.6zM542.3,717.7h5.6v5.6h-5.6zM544.0,711.8h5.6v5.6h-5.6zM545.8,707.7h5.6v5.6h-5.6zM549.0,702.7h5.6v5.6h-5.6zM553.8,699.0h5.6v5.6h-5.6zM556.1,694.7h5.6v5.6h-5.6zM561.5,692.9h5.6v5.6h-5.6zM565.6,691.8h5.6v5.6h-5.6zM570.0,692.7h5.6v5.6h-5.6zM573.4,692.5h5.6v5.6h-5.6zM578.0,694.9h5.6v5.6h-5.6zM581.8,697.0h5.6v5.6h-5.6zM584.7,701.2h5.6v5.6h-5.6zM588.2,704.7h5.6v5.6h-5.6zM591.2,710.3h5.6v5.6h-5.6zM594.4,715.2h5.6v5.6h-5.6zM596.3,720.0h5.6v5.6h-5.6zM597.5,727.6h5.6v5.6h-5.6zM598.9,733.8h5.6v5.6h-5.6zM592.4,741.4h5.6v5.6h-5.6zM592.5,749.2h5.6v5.6h-5.6zM590.8,757.7h5.6v5.6h-5.6zM587.1,769.5h5.6v5.6h-5.6zM581.3,780.6h5.6v5.6h-5.6zM566.6,785.9h5.6v5.6h-5.6zM562.6,786.8h5.6v5.6h-5.6zM549.6,776.6h5.6v5.6h-5.6zM545.8,772.7h5.6v5.6h-5.6zM544.2,767.0h5.6v5.6h-5.6zM541.2,760.8h5.6v5.6h-5.6zM539.2,738.0h5.6v5.6h-5.6zM540.0,731.3h5.6v5.6h-5.6zM542.3,724.8h5.6v5.6h-5.6zM549.5,706.4h5.6v5.6h-5.6zM561.8,698.3h5.6v5.6h-5.6zM567.5,697.5h5.6v5.6h-5.6zM577.1,701.0h5.6v5.6h-5.6zM579.7,705.7h5.6v5.6h-5.6zM584.7,708.3h5.6v5.6h-5.6zM587.7,715.5h5.6v5.6h-5.6zM591.4,728.5h5.6v5.6h-5.6zM593.7,734.3h5.6v5.6h-5.6zM591.1,733.7h5.6v5.6h-5.6zM586.6,750.7h5.6v5.6h-5.6zM574.6,748.9h5.6v5.6h-5.6zM572.1,742.4h5.6v5.6h-5.6zM570.4,733.7h5.6v5.6h-5.6zM578.8,713.8h5.6v5.6h-5.6zM585.7,717.7h5.6v5.6h-5.6zM382.8,379.8h5.6v5.6h-5.6zM377.2,364.7h5.6v5.6h-5.6zM387.3,334.5h5.6v5.6h-5.6zM423.8,300.1h5.6v5.6h-5.6zM431.9,296.8h5.6v5.6h-5.6zM431.9,288.0h5.6v5.6h-5.6zM433.9,237.2h5.6v5.6h-5.6zM433.9,235.2h5.6v5.6h-5.6zM469.8,201.7h5.6v5.6h-5.6zM482.9,205.0h5.6v5.6h-5.6zM489.2,206.7h5.6v5.6h-5.6zM501.2,203.0h5.6v5.6h-5.6zM516.2,198.2h5.6v5.6h-5.6zM522.7,196.2h5.6v5.6h-5.6zM527.5,194.2h5.6v5.6h-5.6zM552.2,184.8h5.6v5.6h-5.6zM558.4,181.1h5.6v5.6h-5.6zM565.9,174.8h5.6v5.6h-5.6zM452.7,237.7h5.6v5.6h-5.6zM475.4,222.6h5.6v5.6h-5.6zM509.3,220.6h5.6v5.6h-5.6zM528.2,214.5h5.6v5.6h-5.6zM539.5,209.2h5.6v5.6h-5.6zM553.9,204.2h5.6v5.6h-5.6zM562.2,200.7h5.6v5.6h-5.6zM452.7,241.2h5.6v5.6h-5.6zM457.2,244.2h5.6v5.6h-5.6zM467.8,238.2h5.6v5.6h-5.6zM482.9,233.9h5.6v5.6h-5.6zM502.2,233.9h5.6v5.6h-5.6zM517.6,237.7h5.6v5.6h-5.6zM529.5,240.2h5.6v5.6h-5.6zM532.5,243.2h5.6v5.6h-5.6zM542.0,247.7h5.6v5.6h-5.6zM548.3,248.2h5.6v5.6h-5.6zM567.2,244.0h5.6v5.6h-5.6zM452.7,249.5h5.6v5.6h-5.6zM532.0,249.5h5.6v5.6h-5.6zM528.2,252.0h5.6v5.6h-5.6zM452.2,258.2h5.6v5.6h-5.6zM452.2,261.6h5.6v5.6h-5.6zM513.2,254.2h5.6v5.6h-5.6zM516.2,254.0h5.6v5.6h-5.6zM547.1,258.6h5.6v5.6h-5.6zM515.2,263.2h5.6v5.6h-5.6zM518.2,289.2h5.6v5.6h-5.6zM519.4,315.7h5.6v5.6h-5.6zM523.2,354.7h5.6v5.6h-5.6zM475.4,299.2h5.6v5.6h-5.6zM516.2,289.2h5.6v5.6h-5.6zM538.2,289.2h5.6v5.6h-5.6zM564.7,280.2h5.6v5.6h-5.6zM481.7,308.2h5.6v5.6h-5.6zM495.5,304.2h5.6v5.6h-5.6zM496.8,304.2h5.6v5.6h-5.6zM498.0,318.2h5.6v5.6h-5.6zM519.4,315.7h5.6v5.6h-5.6zM539.5,313.2h5.6v5.6h-5.6zM547.2,320.2h5.6v5.6h-5.6zM540.8,293.0h5.6v5.6h-5.6zM548.8,337.0h5.6v5.6h-5.6zM557.2,368.5h5.6v5.6h-5.6zM552.2,298.0h5.6v5.6h-5.6zM552.9,307.6h5.6v5.6h-5.6zM564.2,280.4h5.6v5.6h-5.6zM564.7,355.9h5.6v5.6h-5.6zM451.5,277.4h5.6v5.6h-5.6zM451.0,287.5h5.6v5.6h-5.6zM448.2,308.2h5.6v5.6h-5.6zM451.5,279.2h5.6v5.6h-5.6zM462.2,301.8h5.6v5.6h-5.6zM464.8,308.2h5.6v5.6h-5.6zM472.9,310.6h5.6v5.6h-5.6zM481.7,307.6h5.6v5.6h-5.6zM416.2,327.0h5.6v5.6h-5.6zM430.1,318.7h5.6v5.6h-5.6zM443.9,319.4h5.6v5.6h-5.6zM452.7,321.9h5.6v5.6h-5.6zM466.6,318.7h5.6v5.6h-5.6zM472.9,311.2h5.6v5.6h-5.6zM401.2,347.2h5.6v5.6h-5.6zM407.5,352.2h5.6v5.6h-5.6zM413.7,350.9h5.6v5.6h-5.6zM418.8,343.2h5.6v5.6h-5.6zM422.5,339.6h5.6v5.6h-5.6zM428.8,342.2h5.6v5.6h-5.6zM440.2,338.2h5.6v5.6h-5.6zM442.7,335.8h5.6v5.6h-5.6zM437.2,348.2h5.6v5.6h-5.6zM439.2,363.2h5.6v5.6h-5.6zM457.8,357.9h5.6v5.6h-5.6zM470.2,359.7h5.6v5.6h-5.6zM496.0,355.9h5.6v5.6h-5.6zM505.6,354.7h5.6v5.6h-5.6zM518.2,358.4h5.6v5.6h-5.6zM528.2,355.9h5.6v5.6h-5.6zM545.8,354.7h5.6v5.6h-5.6zM396.2,363.5h5.6v5.6h-5.6zM402.4,369.7h5.6v5.6h-5.6zM412.0,376.5h5.6v5.6h-5.6zM425.1,372.2h5.6v5.6h-5.6zM435.2,376.2h5.6v5.6h-5.6zM447.7,371.0h5.6v5.6h-5.6zM457.8,373.0h5.6v5.6h-5.6zM467.1,368.0h5.6v5.6h-5.6zM482.9,369.0h5.6v5.6h-5.6zM425.1,372.2h5.6v5.6h-5.6zM518.2,378.5h5.6v5.6h-5.6zM523.2,373.5h5.6v5.6h-5.6zM560.9,376.0h5.6v5.6h-5.6zM449.0,330.7h5.6v5.6h-5.6zM452.7,334.5h5.6v5.6h-5.6zM466.6,320.2h5.6v5.6h-5.6zM466.6,330.7h5.6v5.6h-5.6zM580.3,172.2h5.6v5.6h-5.6zM603.7,184.8h5.6v5.6h-5.6zM607.5,205.0h5.6v5.6h-5.6zM604.4,213.8h5.6v5.6h-5.6zM610.5,217.0h5.6v5.6h-5.6zM623.8,223.8h5.6v5.6h-5.6zM628.8,227.2h5.6v5.6h-5.6zM633.2,228.9h5.6v5.6h-5.6zM647.7,237.7h5.6v5.6h-5.6zM662.8,259.1h5.6v5.6h-5.6zM688.5,266.1h5.6v5.6h-5.6zM710.6,271.6h5.6v5.6h-5.6zM743.3,280.4h5.6v5.6h-5.6zM759.7,288.0h5.6v5.6h-5.6zM577.2,192.4h5.6v5.6h-5.6zM587.3,196.2h5.6v5.6h-5.6zM586.1,206.2h5.6v5.6h-5.6zM579.2,220.6h5.6v5.6h-5.6zM574.7,232.6h5.6v5.6h-5.6zM574.2,236.4h5.6v5.6h-5.6zM578.5,237.7h5.6v5.6h-5.6zM587.2,233.2h5.6v5.6h-5.6zM599.9,233.2h5.6v5.6h-5.6zM618.8,244.0h5.6v5.6h-5.6zM631.4,251.5h5.6v5.6h-5.6zM635.2,252.8h5.6v5.6h-5.6zM638.9,258.3h5.6v5.6h-5.6zM644.7,265.3h5.6v5.6h-5.6zM657.2,277.9h5.6v5.6h-5.6zM705.1,291.0h5.6v5.6h-5.6zM738.2,299.3h5.6v5.6h-5.6zM747.8,303.6h5.6v5.6h-5.6zM569.7,244.0h5.6v5.6h-5.6zM596.1,244.0h5.6v5.6h-5.6zM617.5,245.2h5.6v5.6h-5.6zM630.1,251.5h5.6v5.6h-5.6zM637.6,257.8h5.6v5.6h-5.6zM637.6,258.6h5.6v5.6h-5.6zM599.9,266.6h5.6v5.6h-5.6zM599.9,273.2h5.6v5.6h-5.6zM623.8,276.7h5.6v5.6h-5.6zM635.2,280.4h5.6v5.6h-5.6zM582.2,288.0h5.6v5.6h-5.6zM620.0,292.0h5.6v5.6h-5.6zM576.0,350.9h5.6v5.6h-5.6zM598.6,303.1h5.6v5.6h-5.6zM612.5,350.9h5.6v5.6h-5.6zM621.2,298.0h5.6v5.6h-5.6zM649.0,295.5h5.6v5.6h-5.6zM660.2,298.0h5.6v5.6h-5.6zM665.2,301.8h5.6v5.6h-5.6zM662.8,314.4h5.6v5.6h-5.6zM631.4,300.6h5.6v5.6h-5.6zM630.1,316.9h5.6v5.6h-5.6zM633.1,321.9h5.6v5.6h-5.6zM633.1,339.6h5.6v5.6h-5.6zM633.9,353.4h5.6v5.6h-5.6zM638.9,358.4h5.6v5.6h-5.6zM622.5,357.2h5.6v5.6h-5.6zM587.3,354.7h5.6v5.6h-5.6zM596.2,352.2h5.6v5.6h-5.6zM611.2,351.4h5.6v5.6h-5.6zM621.2,357.2h5.6v5.6h-5.6zM627.6,363.5h5.6v5.6h-5.6zM623.8,368.5h5.6v5.6h-5.6zM620.0,373.5h5.6v5.6h-5.6zM581.0,376.0h5.6v5.6h-5.6zM591.1,372.2h5.6v5.6h-5.6zM610.0,372.2h5.6v5.6h-5.6zM610.0,376.2h5.6v5.6h-5.6zM656.5,368.0h5.6v5.6h-5.6zM667.8,366.0h5.6v5.6h-5.6zM676.6,335.8h5.6v5.6h-5.6zM681.7,325.7h5.6v5.6h-5.6zM695.5,325.7h5.6v5.6h-5.6zM718.2,322.7h5.6v5.6h-5.6zM738.2,321.9h5.6v5.6h-5.6zM748.2,323.2h5.6v5.6h-5.6zM750.8,335.8h5.6v5.6h-5.6zM739.5,335.2h5.6v5.6h-5.6zM682.9,353.4h5.6v5.6h-5.6zM693.0,349.6h5.6v5.6h-5.6zM705.6,348.9h5.6v5.6h-5.6zM715.6,348.2h5.6v5.6h-5.6zM728.2,343.2h5.6v5.6h-5.6zM733.2,350.9h5.6v5.6h-5.6zM718.2,355.9h5.6v5.6h-5.6zM710.6,358.4h5.6v5.6h-5.6zM699.2,362.2h5.6v5.6h-5.6zM734.5,360.9h5.6v5.6h-5.6zM744.6,369.7h5.6v5.6h-5.6zM767.2,292.4h5.6v5.6h-5.6zM779.8,296.9h5.6v5.6h-5.6zM789.3,294.9h5.6v5.6h-5.6zM797.9,296.2h5.6v5.6h-5.6zM817.5,302.5h5.6v5.6h-5.6zM823.8,304.5h5.6v5.6h-5.6zM833.1,307.5h5.6v5.6h-5.6zM849.0,322.6h5.6v5.6h-5.6zM851.5,328.1h5.6v5.6h-5.6zM855.8,330.6h5.6v5.6h-5.6zM874.1,344.0h5.6v5.6h-5.6zM878.4,366.6h5.6v5.6h-5.6zM877.2,377.9h5.6v5.6h-5.6zM887.5,383.5h5.6v5.6h-5.6zM892.5,402.6h5.6v5.6h-5.6zM891.7,406.9h5.6v5.6h-5.6zM889.2,414.4h5.6v5.6h-5.6zM894.2,420.7h5.6v5.6h-5.6zM898.0,414.4h5.6v5.6h-5.6zM907.6,406.1h5.6v5.6h-5.6zM918.9,392.5h5.6v5.6h-5.6zM933.2,387.2h5.6v5.6h-5.6zM939.5,388.0h5.6v5.6h-5.6zM952.1,396.0h5.6v5.6h-5.6zM955.4,410.6h5.6v5.6h-5.6zM955.4,415.2h5.6v5.6h-5.6zM949.6,427.0h5.6v5.6h-5.6zM942.0,447.1h5.6v5.6h-5.6zM938.2,455.4h5.6v5.6h-5.6zM930.7,477.2h5.6v5.6h-5.6zM933.2,406.9h5.6v5.6h-5.6zM935.8,410.6h5.6v5.6h-5.6zM925.2,414.4h5.6v5.6h-5.6zM911.9,428.2h5.6v5.6h-5.6zM906.8,440.2h5.6v5.6h-5.6zM901.8,463.5h5.6v5.6h-5.6zM930.7,424.5h5.6v5.6h-5.6zM926.2,434.5h5.6v5.6h-5.6zM918.2,453.9h5.6v5.6h-5.6zM913.2,466.5h5.6v5.6h-5.6zM773.5,315.0h5.6v5.6h-5.6zM787.3,315.0h5.6v5.6h-5.6zM793.6,315.5h5.6v5.6h-5.6zM817.0,322.1h5.6v5.6h-5.6zM825.6,324.6h5.6v5.6h-5.6zM830.1,335.2h5.6v5.6h-5.6zM835.2,343.5h5.6v5.6h-5.6zM849.0,348.2h5.6v5.6h-5.6zM859.0,364.8h5.6v5.6h-5.6zM857.0,377.4h5.6v5.6h-5.6zM799.9,348.2h5.6v5.6h-5.6zM817.0,349.0h5.6v5.6h-5.6zM818.8,357.3h5.6v5.6h-5.6zM820.0,365.3h5.6v5.6h-5.6zM773.5,373.4h5.6v5.6h-5.6zM783.6,375.4h5.6v5.6h-5.6zM822.0,392.5h5.6v5.6h-5.6zM840.2,398.0h5.6v5.6h-5.6zM851.5,400.1h5.6v5.6h-5.6zM866.6,399.3h5.6v5.6h-5.6zM874.1,397.5h5.6v5.6h-5.6zM871.6,406.9h5.6v5.6h-5.6zM870.2,425.7h5.6v5.6h-5.6zM807.5,452.2h5.6v5.6h-5.6zM394.9,388.5h5.6v5.6h-5.6zM385.3,412.4h5.6v5.6h-5.6zM385.3,434.6h5.6v5.6h-5.6zM385.3,448.9h5.6v5.6h-5.6zM385.3,452.7h5.6v5.6h-5.6zM384.3,462.7h5.6v5.6h-5.6zM384.1,482.9h5.6v5.6h-5.6zM392.4,499.2h5.6v5.6h-5.6zM396.2,503.0h5.6v5.6h-5.6zM399.2,506.8h5.6v5.6h-5.6zM426.3,523.1h5.6v5.6h-5.6zM429.6,523.9h5.6v5.6h-5.6zM457.2,543.7h5.6v5.6h-5.6zM462.8,552.0h5.6v5.6h-5.6zM464.1,555.8h5.6v5.6h-5.6zM511.9,596.1h5.6v5.6h-5.6zM519.4,599.8h5.6v5.6h-5.6zM411.2,378.5h5.6v5.6h-5.6zM416.2,391.0h5.6v5.6h-5.6zM408.7,404.4h5.6v5.6h-5.6zM404.4,413.7h5.6v5.6h-5.6zM404.9,423.7h5.6v5.6h-5.6zM423.8,459.0h5.6v5.6h-5.6zM425.1,464.0h5.6v5.6h-5.6zM426.3,472.2h5.6v5.6h-5.6zM430.1,448.9h5.6v5.6h-5.6zM442.7,477.2h5.6v5.6h-5.6zM402.4,475.8h5.6v5.6h-5.6zM407.5,486.6h5.6v5.6h-5.6zM413.7,494.2h5.6v5.6h-5.6zM428.8,503.0h5.6v5.6h-5.6zM441.4,508.0h5.6v5.6h-5.6zM445.2,514.2h5.6v5.6h-5.6zM416.2,486.6h5.6v5.6h-5.6zM427.6,492.9h5.6v5.6h-5.6zM435.2,495.4h5.6v5.6h-5.6zM442.7,504.2h5.6v5.6h-5.6zM449.0,511.8h5.6v5.6h-5.6zM474.2,402.4h5.6v5.6h-5.6zM485.4,394.8h5.6v5.6h-5.6zM500.5,393.6h5.6v5.6h-5.6zM514.4,394.8h5.6v5.6h-5.6zM518.2,399.8h5.6v5.6h-5.6zM514.4,414.9h5.6v5.6h-5.6zM521.9,417.5h5.6v5.6h-5.6zM529.5,414.4h5.6v5.6h-5.6zM538.2,414.9h5.6v5.6h-5.6zM553.4,420.0h5.6v5.6h-5.6zM558.4,425.0h5.6v5.6h-5.6zM490.5,431.2h5.6v5.6h-5.6zM491.7,445.2h5.6v5.6h-5.6zM504.3,447.6h5.6v5.6h-5.6zM537.0,450.2h5.6v5.6h-5.6zM544.6,438.8h5.6v5.6h-5.6zM558.4,437.6h5.6v5.6h-5.6zM493.0,457.7h5.6v5.6h-5.6zM496.8,464.0h5.6v5.6h-5.6zM513.1,461.5h5.6v5.6h-5.6zM533.2,458.2h5.6v5.6h-5.6zM557.2,461.0h5.6v5.6h-5.6zM485.4,467.8h5.6v5.6h-5.6zM492.2,472.2h5.6v5.6h-5.6zM474.1,472.2h5.6v5.6h-5.6zM475.4,479.1h5.6v5.6h-5.6zM477.9,483.4h5.6v5.6h-5.6zM474.6,491.7h5.6v5.6h-5.6zM516.9,482.2h5.6v5.6h-5.6zM533.2,494.9h5.6v5.6h-5.6zM487.5,503.5h5.6v5.6h-5.6zM474.6,491.7h5.6v5.6h-5.6zM562.2,472.8h5.6v5.6h-5.6zM510.6,525.6h5.6v5.6h-5.6zM474.9,534.4h5.6v5.6h-5.6zM481.7,545.8h5.6v5.6h-5.6zM482.9,548.8h5.6v5.6h-5.6zM505.6,572.2h5.6v5.6h-5.6zM518.2,578.5h5.6v5.6h-5.6zM537.0,594.1h5.6v5.6h-5.6zM607.5,395.3h5.6v5.6h-5.6zM637.6,394.2h5.6v5.6h-5.6zM643.9,393.6h5.6v5.6h-5.6zM691.7,390.2h5.6v5.6h-5.6zM698.0,391.0h5.6v5.6h-5.6zM738.2,388.5h5.6v5.6h-5.6zM667.8,451.4h5.6v5.6h-5.6zM715.1,475.8h5.6v5.6h-5.6zM721.2,479.6h5.6v5.6h-5.6zM700.5,444.6h5.6v5.6h-5.6zM735.8,460.2h5.6v5.6h-5.6zM613.7,462.7h5.6v5.6h-5.6zM617.5,464.0h5.6v5.6h-5.6zM651.0,482.4h5.6v5.6h-5.6zM631.4,484.2h5.6v5.6h-5.6zM584.3,488.4h5.6v5.6h-5.6zM571.0,479.1h5.6v5.6h-5.6zM609.5,506.0h5.6v5.6h-5.6zM656.5,499.2h5.6v5.6h-5.6zM730.7,493.4h5.6v5.6h-5.6zM596.1,517.6h5.6v5.6h-5.6zM730.7,498.0h5.6v5.6h-5.6zM632.1,531.2h5.6v5.6h-5.6zM730.7,511.8h5.6v5.6h-5.6zM618.8,557.1h5.6v5.6h-5.6zM627.6,554.6h5.6v5.6h-5.6zM690.5,534.4h5.6v5.6h-5.6zM730.7,513.0h5.6v5.6h-5.6zM716.9,544.5h5.6v5.6h-5.6zM726.2,558.8h5.6v5.6h-5.6zM695.5,573.4h5.6v5.6h-5.6zM689.2,570.9h5.6v5.6h-5.6zM670.3,563.4h5.6v5.6h-5.6zM646.4,572.2h5.6v5.6h-5.6zM652.7,575.9h5.6v5.6h-5.6zM657.8,565.9h5.6v5.6h-5.6zM664.1,564.6h5.6v5.6h-5.6zM669.1,568.4h5.6v5.6h-5.6zM671.6,578.5h5.6v5.6h-5.6zM681.7,580.5h5.6v5.6h-5.6zM689.2,570.9h5.6v5.6h-5.6zM635.2,577.2h5.6v5.6h-5.6zM646.4,572.2h5.6v5.6h-5.6zM729.5,578.5h5.6v5.6h-5.6zM711.9,590.5h5.6v5.6h-5.6zM703.0,596.1h5.6v5.6h-5.6zM677.9,592.2h5.6v5.6h-5.6zM657.8,596.1h5.6v5.6h-5.6zM927.3,519.9h5.6v5.6h-5.6zM958.6,565.8h5.6v5.6h-5.6zM959.8,573.6h5.6v5.6h-5.6zM893.8,602.2h5.6v5.6h-5.6zM919.5,568.7h5.6v5.6h-5.6zM937.4,555.7h5.6v5.6h-5.6zM893.8,602.2h5.6v5.6h-5.6zM890.4,635.2h5.6v5.6h-5.6zM729.4,579.2h5.6v5.6h-5.6zM729.4,627.2h5.6v5.6h-5.6zM907.2,439.9h5.6v5.6h-5.6zM901.6,464.0h5.6v5.6h-5.6zM918.4,454.0h5.6v5.6h-5.6zM912.8,465.2h5.6v5.6h-5.6zM941.9,447.2h5.6v5.6h-5.6zM937.4,455.1h5.6v5.6h-5.6zM930.7,477.4h5.6v5.6h-5.6zM761.0,431.6h5.6v5.6h-5.6zM807.8,452.7h5.6v5.6h-5.6zM838.0,398.2h5.6v5.6h-5.6zM850.0,399.8h5.6v5.6h-5.6zM856.1,398.9h5.6v5.6h-5.6zM866.7,399.8h5.6v5.6h-5.6zM873.6,397.7h5.6v5.6h-5.6zM726.2,558.2h5.6v5.6h-5.6zM511.5,597.2h5.6v5.6h-5.6zM517.8,603.6h5.6v5.6h-5.6zM522.2,612.4h5.6v5.6h-5.6zM522.0,626.9h5.6v5.6h-5.6zM526.6,657.6h5.6v5.6h-5.6zM537.2,594.2h5.6v5.6h-5.6zM537.2,594.2h5.6v5.6h-5.6zM585.7,602.2h5.6v5.6h-5.6zM542.4,628.0h5.6v5.6h-5.6zM545.4,652.6h5.6v5.6h-5.6zM547.5,657.6h5.6v5.6h-5.6zM563.0,660.2h5.6v5.6h-5.6zM580.7,647.6h5.6v5.6h-5.6zM582.7,638.8h5.6v5.6h-5.6zM585.7,602.2h5.6v5.6h-5.6zM459.9,677.8h5.6v5.6h-5.6zM497.6,669.7h5.6v5.6h-5.6zM510.2,670.2h5.6v5.6h-5.6zM488.8,773.9h5.6v5.6h-5.6zM542.9,769.6h5.6v5.6h-5.6zM590.7,788.5h5.6v5.6h-5.6zM608.3,794.7h5.6v5.6h-5.6zM726.1,559.7h5.6v5.6h-5.6zM671.5,579.8h5.6v5.6h-5.6zM682.8,581.2h5.6v5.6h-5.6zM729.3,579.2h5.6v5.6h-5.6zM711.7,589.9h5.6v5.6h-5.6zM701.7,596.2h5.6v5.6h-5.6zM709.2,605.0h5.6v5.6h-5.6zM685.2,607.5h5.6v5.6h-5.6zM687.2,625.6h5.6v5.6h-5.6zM729.3,627.6h5.6v5.6h-5.6zM729.3,579.2h5.6v5.6h-5.6zM677.8,593.7h5.6v5.6h-5.6zM679.0,622.6h5.6v5.6h-5.6zM670.2,625.2h5.6v5.6h-5.6zM677.8,593.7h5.6v5.6h-5.6zM653.9,654.1h5.6v5.6h-5.6zM677.8,637.7h5.6v5.6h-5.6zM710.5,637.2h5.6v5.6h-5.6zM724.2,642.7h5.6v5.6h-5.6zM735.6,644.0h5.6v5.6h-5.6zM753.2,642.7h5.6v5.6h-5.6zM783.2,644.0h5.6v5.6h-5.6zM702.9,700.6h5.6v5.6h-5.6zM713.0,708.2h5.6v5.6h-5.6zM697.9,718.2h5.6v5.6h-5.6zM701.7,738.2h5.6v5.6h-5.6zM716.8,737.2h5.6v5.6h-5.6zM733.2,738.2h5.6v5.6h-5.6zM738.2,750.9h5.6v5.6h-5.6zM735.6,758.5h5.6v5.6h-5.6zM716.8,766.0h5.6v5.6h-5.6zM889.2,635.5h5.6v5.6h-5.6zM878.0,676.1h5.6v5.6h-5.6zM878.9,694.2h5.6v5.6h-5.6zM880.2,702.7h5.6v5.6h-5.6zM883.1,717.2h5.6v5.6h-5.6zM891.5,734.8h5.6v5.6h-5.6zM889.2,752.2h5.6v5.6h-5.6zM887.2,761.4h5.6v5.6h-5.6zM883.6,783.2h5.6v5.6h-5.6zM862.1,793.6h5.6v5.6h-5.6zM853.7,793.6h5.6v5.6h-5.6zM819.3,794.4h5.6v5.6h-5.6zM728.0,794.3h5.6v5.6h-5.6zM608.6,794.8h5.6v5.6h-5.6zM810.3,702.7h5.6v5.6h-5.6zM865.7,645.3h5.6v5.6h-5.6zM859.3,672.4h5.6v5.6h-5.6zM860.7,704.1h5.6v5.6h-5.6zM864.3,722.2h5.6v5.6h-5.6zM868.5,730.1h5.6v5.6h-5.6zM870.5,746.0h5.6v5.6h-5.6zM868.5,766.4h5.6v5.6h-5.6zM861.2,774.0h5.6v5.6h-5.6zM819.3,774.5h5.6v5.6h-5.6zM798.6,774.0h5.6v5.6h-5.6zM702.2,737.7h5.6v5.6h-5.6zM717.4,737.7h5.6v5.6h-5.6zM732.5,739.2h5.6v5.6h-5.6zM714.4,708.9h5.6v5.6h-5.6zM703.8,702.9h5.6v5.6h-5.6zM717.4,766.4h5.6v5.6h-5.6zM735.5,758.8h5.6v5.6h-5.6zM738.5,751.2h5.6v5.6h-5.6zM730.2,626.2h5.6v5.6h-5.6zM785.2,575.2h5.6v5.6h-5.6zM780.2,570.2h5.6v5.6h-5.6zM745.2,644.2h5.6v5.6h-5.6zM754.2,645.2h5.6v5.6h-5.6zM764.2,645.2h5.6v5.6h-5.6zM774.2,645.2h5.6v5.6h-5.6zM784.2,644.2h5.6v5.6h-5.6zM779.6,571.2h5.6v5.6h-5.6zM782.4,561.4h5.6v5.6h-5.6zM795.0,632.7h5.6v5.6h-5.6zM452.9,236.6h5.6v5.6h-5.6zM456.9,242.3h5.6v5.6h-5.6zM457.7,243.1h5.6v5.6h-5.6zM472.1,309.7h5.6v5.6h-5.6zM476.1,308.0h5.6v5.6h-5.6zM472.1,311.7h5.6v5.6h-5.6zM514.4,287.8h5.6v5.6h-5.6zM519.3,287.0h5.6v5.6h-5.6zM515.4,290.7h5.6v5.6h-5.6zM520.0,292.1h5.6v5.6h-5.6zM520.4,314.5h5.6v5.6h-5.6zM516.7,316.4h5.6v5.6h-5.6zM520.9,317.6h5.6v5.6h-5.6zM544.6,293.4h5.6v5.6h-5.6zM540.4,295.3h5.6v5.6h-5.6zM464.6,330.0h5.6v5.6h-5.6zM468.2,330.4h5.6v5.6h-5.6zM465.6,331.8h5.6v5.6h-5.6zM468.7,332.3h5.6v5.6h-5.6zM454.9,334.3h5.6v5.6h-5.6zM451.3,335.6h5.6v5.6h-5.6zM454.3,335.3h5.6v5.6h-5.6zM436.2,347.8h5.6v5.6h-5.6zM441.3,348.1h5.6v5.6h-5.6zM435.7,359.8h5.6v5.6h-5.6zM441.9,359.9h5.6v5.6h-5.6zM439.0,355.8h5.6v5.6h-5.6zM446.7,356.7h5.6v5.6h-5.6zM437.7,363.3h5.6v5.6h-5.6zM443.9,362.3h5.6v5.6h-5.6zM446.7,363.2h5.6v5.6h-5.6zM437.0,361.5h5.6v5.6h-5.6zM444.2,361.5h5.6v5.6h-5.6zM446.7,361.8h5.6v5.6h-5.6zM523.3,376.7h5.6v5.6h-5.6zM518.1,381.9h5.6v5.6h-5.6zM521.4,381.9h5.6v5.6h-5.6zM404.8,349.0h5.6v5.6h-5.6zM407.0,349.2h5.6v5.6h-5.6zM403.2,351.0h5.6v5.6h-5.6zM407.4,350.2h5.6v5.6h-5.6zM409.0,353.8h5.6v5.6h-5.6zM408.4,352.7h5.6v5.6h-5.6zM414.1,353.7h5.6v5.6h-5.6zM494.6,353.5h5.6v5.6h-5.6zM494.0,356.1h5.6v5.6h-5.6zM498.5,357.4h5.6v5.6h-5.6zM520.3,355.8h5.6v5.6h-5.6zM524.9,356.6h5.6v5.6h-5.6zM515.6,359.6h5.6v5.6h-5.6zM520.5,361.1h5.6v5.6h-5.6zM524.4,359.9h5.6v5.6h-5.6zM507.0,353.0h5.6v5.6h-5.6zM507.9,356.0h5.6v5.6h-5.6zM546.0,354.5h5.6v5.6h-5.6zM547.9,355.9h5.6v5.6h-5.6zM541.7,293.0h5.6v5.6h-5.6zM542.3,291.3h5.6v5.6h-5.6zM542.8,294.4h5.6v5.6h-5.6zM627.7,280.8h5.6v5.6h-5.6zM634.7,281.8h5.6v5.6h-5.6zM640.1,281.5h5.6v5.6h-5.6zM627.8,287.4h5.6v5.6h-5.6zM633.5,286.9h5.6v5.6h-5.6zM638.5,287.7h5.6v5.6h-5.6zM628.2,290.8h5.6v5.6h-5.6zM635.0,291.6h5.6v5.6h-5.6zM639.5,291.2h5.6v5.6h-5.6zM598.3,281.7h5.6v5.6h-5.6zM606.2,280.3h5.6v5.6h-5.6zM608.4,280.1h5.6v5.6h-5.6zM599.1,285.4h5.6v5.6h-5.6zM608.7,285.6h5.6v5.6h-5.6zM579.7,286.0h5.6v5.6h-5.6zM586.7,286.2h5.6v5.6h-5.6zM580.3,288.7h5.6v5.6h-5.6zM586.3,288.4h5.6v5.6h-5.6zM587.2,288.8h5.6v5.6h-5.6zM621.5,294.5h5.6v5.6h-5.6zM626.2,294.7h5.6v5.6h-5.6zM621.0,297.1h5.6v5.6h-5.6zM626.4,295.4h5.6v5.6h-5.6zM658.8,297.9h5.6v5.6h-5.6zM664.9,298.8h5.6v5.6h-5.6zM664.4,298.1h5.6v5.6h-5.6zM657.6,304.5h5.6v5.6h-5.6zM664.6,304.5h5.6v5.6h-5.6zM663.5,303.3h5.6v5.6h-5.6zM658.7,306.2h5.6v5.6h-5.6zM664.8,304.7h5.6v5.6h-5.6zM663.8,306.1h5.6v5.6h-5.6zM662.7,313.8h5.6v5.6h-5.6zM662.1,314.7h5.6v5.6h-5.6zM663.2,313.6h5.6v5.6h-5.6zM659.4,335.3h5.6v5.6h-5.6zM666.6,336.3h5.6v5.6h-5.6zM667.1,336.5h5.6v5.6h-5.6zM660.1,341.6h5.6v5.6h-5.6zM665.6,341.5h5.6v5.6h-5.6zM667.2,342.6h5.6v5.6h-5.6zM659.4,348.8h5.6v5.6h-5.6zM665.4,347.8h5.6v5.6h-5.6zM666.6,347.8h5.6v5.6h-5.6zM659.5,355.1h5.6v5.6h-5.6zM666.0,355.8h5.6v5.6h-5.6zM666.2,355.0h5.6v5.6h-5.6zM661.0,361.7h5.6v5.6h-5.6zM666.7,361.5h5.6v5.6h-5.6zM665.7,362.5h5.6v5.6h-5.6zM665.9,363.0h5.6v5.6h-5.6zM672.4,350.0h5.6v5.6h-5.6zM678.7,350.4h5.6v5.6h-5.6zM695.9,350.3h5.6v5.6h-5.6zM672.9,356.2h5.6v5.6h-5.6zM677.4,356.2h5.6v5.6h-5.6zM684.2,355.5h5.6v5.6h-5.6zM690.0,355.6h5.6v5.6h-5.6zM696.1,356.3h5.6v5.6h-5.6zM671.8,361.7h5.6v5.6h-5.6zM678.4,363.3h5.6v5.6h-5.6zM684.3,362.0h5.6v5.6h-5.6zM690.9,363.0h5.6v5.6h-5.6zM695.7,361.8h5.6v5.6h-5.6zM741.8,322.2h5.6v5.6h-5.6zM748.2,327.9h5.6v5.6h-5.6zM750.6,327.7h5.6v5.6h-5.6zM747.1,334.2h5.6v5.6h-5.6zM750.6,332.4h5.6v5.6h-5.6zM747.7,336.7h5.6v5.6h-5.6zM751.2,336.1h5.6v5.6h-5.6zM725.8,344.4h5.6v5.6h-5.6zM731.3,346.0h5.6v5.6h-5.6zM733.8,345.6h5.6v5.6h-5.6zM724.8,351.9h5.6v5.6h-5.6zM731.9,350.5h5.6v5.6h-5.6zM725.6,357.5h5.6v5.6h-5.6zM733.9,356.9h5.6v5.6h-5.6zM724.1,359.7h5.6v5.6h-5.6zM735.1,359.7h5.6v5.6h-5.6zM765.9,351.2h5.6v5.6h-5.6zM767.2,352.4h5.6v5.6h-5.6zM766.2,357.1h5.6v5.6h-5.6zM572.1,353.7h5.6v5.6h-5.6zM575.9,352.3h5.6v5.6h-5.6zM573.2,356.3h5.6v5.6h-5.6zM575.7,356.8h5.6v5.6h-5.6zM769.6,345.7h5.6v5.6h-5.6zM776.1,351.2h5.6v5.6h-5.6zM776.9,352.1h5.6v5.6h-5.6zM770.0,356.3h5.6v5.6h-5.6zM775.6,355.3h5.6v5.6h-5.6zM770.6,359.4h5.6v5.6h-5.6zM771.4,359.0h5.6v5.6h-5.6zM769.2,360.9h5.6v5.6h-5.6zM771.3,359.8h5.6v5.6h-5.6zM410.4,423.2h5.6v5.6h-5.6zM414.2,424.9h5.6v5.6h-5.6zM405.4,424.5h5.6v5.6h-5.6zM411.4,424.6h5.6v5.6h-5.6zM414.3,425.1h5.6v5.6h-5.6zM428.4,389.2h5.6v5.6h-5.6zM433.4,389.5h5.6v5.6h-5.6zM441.5,390.9h5.6v5.6h-5.6zM453.8,390.5h5.6v5.6h-5.6zM460.5,390.2h5.6v5.6h-5.6zM463.8,389.3h5.6v5.6h-5.6zM428.2,397.0h5.6v5.6h-5.6zM433.3,397.2h5.6v5.6h-5.6zM440.1,397.0h5.6v5.6h-5.6zM447.5,397.1h5.6v5.6h-5.6zM453.4,395.3h5.6v5.6h-5.6zM459.7,396.8h5.6v5.6h-5.6zM463.6,395.7h5.6v5.6h-5.6zM427.2,401.8h5.6v5.6h-5.6zM434.9,402.7h5.6v5.6h-5.6zM441.5,402.8h5.6v5.6h-5.6zM447.0,403.3h5.6v5.6h-5.6zM453.1,402.8h5.6v5.6h-5.6zM463.8,402.8h5.6v5.6h-5.6zM427.9,406.8h5.6v5.6h-5.6zM434.3,406.0h5.6v5.6h-5.6zM441.2,406.3h5.6v5.6h-5.6zM446.5,405.9h5.6v5.6h-5.6zM453.3,405.8h5.6v5.6h-5.6zM459.5,406.1h5.6v5.6h-5.6zM465.1,407.2h5.6v5.6h-5.6zM438.4,386.7h5.6v5.6h-5.6zM446.3,386.8h5.6v5.6h-5.6zM449.3,386.8h5.6v5.6h-5.6zM424.7,405.6h5.6v5.6h-5.6zM431.5,404.2h5.6v5.6h-5.6zM433.9,404.1h5.6v5.6h-5.6zM425.1,412.1h5.6v5.6h-5.6zM432.1,411.2h5.6v5.6h-5.6zM434.0,411.2h5.6v5.6h-5.6zM430.3,412.1h5.6v5.6h-5.6zM434.6,412.4h5.6v5.6h-5.6zM516.9,380.5h5.6v5.6h-5.6zM519.5,380.4h5.6v5.6h-5.6zM516.3,386.3h5.6v5.6h-5.6zM520.3,387.0h5.6v5.6h-5.6zM515.1,391.8h5.6v5.6h-5.6zM515.3,396.8h5.6v5.6h-5.6zM490.9,415.2h5.6v5.6h-5.6zM493.0,415.7h5.6v5.6h-5.6zM484.7,422.7h5.6v5.6h-5.6zM489.4,422.4h5.6v5.6h-5.6zM484.8,427.6h5.6v5.6h-5.6zM489.7,428.1h5.6v5.6h-5.6zM492.3,427.5h5.6v5.6h-5.6zM562.3,410.8h5.6v5.6h-5.6zM563.6,410.7h5.6v5.6h-5.6zM562.9,414.4h5.6v5.6h-5.6zM564.8,413.7h5.6v5.6h-5.6zM495.2,442.0h5.6v5.6h-5.6zM491.3,446.8h5.6v5.6h-5.6zM494.0,446.2h5.6v5.6h-5.6zM629.5,580.3h5.6v5.6h-5.6zM636.6,580.1h5.6v5.6h-5.6zM643.3,580.5h5.6v5.6h-5.6zM629.6,586.5h5.6v5.6h-5.6zM637.0,587.9h5.6v5.6h-5.6zM642.8,587.5h5.6v5.6h-5.6zM630.3,588.4h5.6v5.6h-5.6zM636.7,587.7h5.6v5.6h-5.6zM643.1,588.5h5.6v5.6h-5.6zM592.4,586.0h5.6v5.6h-5.6zM598.4,585.0h5.6v5.6h-5.6zM603.7,587.0h5.6v5.6h-5.6zM616.5,586.7h5.6v5.6h-5.6zM618.0,586.3h5.6v5.6h-5.6zM592.5,591.8h5.6v5.6h-5.6zM598.4,592.8h5.6v5.6h-5.6zM604.1,592.1h5.6v5.6h-5.6zM610.1,593.1h5.6v5.6h-5.6zM617.2,592.4h5.6v5.6h-5.6zM591.7,599.0h5.6v5.6h-5.6zM598.3,598.1h5.6v5.6h-5.6zM604.9,598.3h5.6v5.6h-5.6zM592.0,598.6h5.6v5.6h-5.6zM597.4,599.4h5.6v5.6h-5.6zM610.6,599.0h5.6v5.6h-5.6zM618.1,600.1h5.6v5.6h-5.6zM692.9,571.3h5.6v5.6h-5.6zM695.3,571.2h5.6v5.6h-5.6zM692.7,575.2h5.6v5.6h-5.6zM694.4,575.0h5.6v5.6h-5.6zM709.3,602.1h5.6v5.6h-5.6zM711.2,602.7h5.6v5.6h-5.6zM709.9,605.8h5.6v5.6h-5.6zM709.5,606.5h5.6v5.6h-5.6zM682.3,641.5h5.6v5.6h-5.6zM691.0,641.9h5.6v5.6h-5.6zM683.1,646.0h5.6v5.6h-5.6zM689.6,645.7h5.6v5.6h-5.6zM690.1,645.1h5.6v5.6h-5.6zM750.9,654.0h5.6v5.6h-5.6zM756.7,652.7h5.6v5.6h-5.6zM764.8,652.7h5.6v5.6h-5.6zM770.9,653.1h5.6v5.6h-5.6zM776.4,652.9h5.6v5.6h-5.6zM788.5,653.0h5.6v5.6h-5.6zM744.3,659.3h5.6v5.6h-5.6zM751.2,658.4h5.6v5.6h-5.6zM764.7,658.4h5.6v5.6h-5.6zM769.5,658.8h5.6v5.6h-5.6zM777.0,659.2h5.6v5.6h-5.6zM782.6,659.3h5.6v5.6h-5.6zM789.3,658.7h5.6v5.6h-5.6zM745.1,663.1h5.6v5.6h-5.6zM750.4,663.8h5.6v5.6h-5.6zM758.5,663.0h5.6v5.6h-5.6zM763.5,663.5h5.6v5.6h-5.6zM770.5,663.2h5.6v5.6h-5.6zM776.1,663.3h5.6v5.6h-5.6zM783.2,663.7h5.6v5.6h-5.6zM787.6,662.6h5.6v5.6h-5.6zM735.4,710.4h5.6v5.6h-5.6zM742.0,711.8h5.6v5.6h-5.6zM748.1,710.4h5.6v5.6h-5.6zM755.3,711.2h5.6v5.6h-5.6zM761.8,711.4h5.6v5.6h-5.6zM767.7,711.3h5.6v5.6h-5.6zM773.0,710.7h5.6v5.6h-5.6zM784.7,710.2h5.6v5.6h-5.6zM736.7,715.1h5.6v5.6h-5.6zM742.3,714.9h5.6v5.6h-5.6zM747.9,715.8h5.6v5.6h-5.6zM755.8,716.3h5.6v5.6h-5.6zM772.8,714.7h5.6v5.6h-5.6z" fill="#4a7df4"/>
</svg>
<!-- V SCROLL -->
<div class="a" style="left:1267px;top:97px;width:17px;height:779px;background:#494949"></div>
<div class="a" style="left:1268px;top:466px;width:15px;height:25px;background:#5a5a5a;border-radius:7px"></div>
<div class="a" style="left:1283.5px;top:67px;width:3.5px;height:827px;background:#393939"></div>
<!-- STATUS BAR -->
<div class="a" style="left:76px;top:876px;width:1208px;height:16px;background:#4a4a4a"></div>
<div class="a" style="left:77px;top:876px;width:56px;height:16px;background:#434343"></div>
<div class="a" style="left:133px;top:876px;width:18px;height:16px;background:#474747"></div>
<div class="a" style="left:193px;top:876px;width:42px;height:16px;background:#434343"></div>
<div class="a" style="left:236px;top:876px;width:18px;height:16px;background:#474747"></div>
<div class="a" style="left:885px;top:877px;width:26px;height:15px;background:#5c5c5c;border-radius:8px"></div>
<div class="a" style="left:1267px;top:876px;width:17px;height:16px;background:#505050"></div>
<div class="a" style="left:0;top:892px;width:1588px;height:2px;background:#3a3a3a"></div>
<!-- RIGHT DOCK -->
<div class="a" style="left:1287px;top:67.5px;width:301px;height:12px;background:#474747"></div>
<div class="a" style="left:1287px;top:79.5px;width:38px;height:815px;background:#535353"></div>
<div class="a" style="left:1325.5px;top:79.5px;width:2.5px;height:815px;background:#3c3c3c"></div>
<div class="a" style="left:1328px;top:79.5px;width:260px;height:815px;background:#535353"></div>
<!-- props tabs -->
<div class="a" style="left:1397px;top:80px;width:191px;height:27px;background:#474747"></div>
<div class="a" style="left:1457px;top:80px;width:1px;height:27px;background:#3e3e3e"></div>
<div class="a" style="left:1535px;top:80px;width:1px;height:27px;background:#3e3e3e"></div>
<div class="a" style="left:1397px;top:106px;width:191px;height:1px;background:#3e3e3e"></div>
<!-- section separators -->
<div class="a" style="left:1328px;top:141px;width:260px;height:1px;background:#4a4a4a"></div>
<div class="a" style="left:1328px;top:275px;width:260px;height:1px;background:#4a4a4a"></div>
<div class="a" style="left:1328px;top:448px;width:260px;height:1px;background:#4a4a4a"></div>
<div class="a" style="left:1328px;top:537px;width:260px;height:1px;background:#4a4a4a"></div>
<div class="a" style="left:1328px;top:622px;width:260px;height:1px;background:#4a4a4a"></div>
<!-- transform fields -->
<div class="fld" style="left:1388px;top:174.5px;width:56px;height:20px"></div>
<div class="fld" style="left:1477px;top:174.5px;width:57px;height:20px"></div>
<div class="fld" style="left:1388px;top:201.5px;width:56px;height:20px"></div>
<div class="fld" style="left:1477px;top:201.5px;width:57px;height:20px"></div>
<div class="fld" style="left:1387.5px;top:228px;width:38px;height:20px"></div>
<div class="dd" style="left:1426px;top:228px;width:18px;height:20px"></div>
<!-- appearance -->
<div class="a" style="left:1339px;top:311px;width:18px;height:18px;background:#fff;border:1px solid #bdbdbd"></div>
<svg style="left:1339px;top:311px" width="18" height="18"><line x1="1.5" y1="16.5" x2="16.5" y2="1.5" stroke="#e0141e" stroke-width="2"/></svg>
<div class="a" style="left:1339px;top:341px;width:18px;height:18px;background:#000;border:1px solid #bdbdbd"></div>
<div class="a" style="left:1344px;top:346px;width:8px;height:8px;border:1.5px solid #c8c8c8"></div>
<div class="dd" style="left:1414px;top:340px;width:18px;height:20px"></div>
<div class="fld" style="left:1433px;top:340px;width:34px;height:20px;border:none"></div>
<div class="dd" style="left:1467px;top:340px;width:18px;height:20px"></div>
<div class="a" style="left:1339px;top:371px;width:18px;height:18px;border:1px solid #8a8a8a;background:repeating-conic-gradient(#5c5c5c 0 25%,#4c4c4c 0 50%) 0 0/8px 8px"></div>
<div class="fld" style="left:1414px;top:370px;width:53px;height:20px;border:none"></div>
<div class="dd" style="left:1467px;top:370px;width:18px;height:20px"></div>
<!-- expand button -->
<div class="a" style="left:1523px;top:575px;width:53px;height:21px;background:#575757;border-radius:2px"></div>
<!-- quick action buttons -->
<div class="btn" style="left:1338.5px;top:661px;width:104px;height:22px"></div>
<div class="btn" style="left:1452.5px;top:661px;width:104px;height:22px"></div>
<div class="btn" style="left:1338.5px;top:693px;width:218px;height:22px"></div>
<div class="a" style="left:0;top:32px;width:1px;height:860px;background:#444444"></div>
<svg style="left:0;top:0" width="1588" height="894" viewBox="0 0 1588 894">
<defs>
</defs>
<!-- ===== MENU BAR ===== -->
<rect x="10.5" y="7" width="16.5" height="16" rx="1" fill="#2b1000" stroke="#f29b26" stroke-width="1.1"/>
<text x="18.8" y="18.5" font-family="Liberation Sans" font-weight="bold" font-size="9.5" fill="#f5a33a" text-anchor="middle">Ai</text>
<path d="M50.6,7.6 L41.3,16.8 L42.8,16.8 L42.8,23.4 L49.1,23.4 L49.1,18 L52.6,18 L52.6,23.4 L58.4,23.4 L58.4,16.8 L60,16.8 Z" fill="#d4d4d4"/>
<rect x="501" y="8" width="8" height="11.5" fill="#cfcfcf"/><rect x="511" y="8" width="8" height="5" fill="#cfcfcf"/><rect x="511" y="14.5" width="8" height="5" fill="#cfcfcf"/>
<g transform="translate(531.7,13.5)"><polyline points="-3.6,-1.8 0,1.8 3.6,-1.8" fill="none" stroke="#d6d6d6" stroke-width="1.4"/></g>
<rect x="554.7" y="8.7" width="16.8" height="13" fill="none" stroke="#cfcfcf" stroke-width="1.5"/>
<path d="M562,12 v7 l-2,-2.5 l-1.2,1 l3,4.5 h6 l1,-4 v-3 l-1.5,-0.5 v1 l-1.2,-0.5 l-1.2,-0.3 v-3 z" fill="#cfcfcf" stroke="#535353" stroke-width="0.6"/>
<path d="M1145,20 v2.5 M1142.5,16.5 a5.2,5.2 0 1 1 5,0 l-0.5,2.5 h-4 z" fill="none" stroke="#cfcfcf" stroke-width="1.3"/>
<g transform="translate(1286.5,14)"><polyline points="-3.6,-1.8 0,1.8 3.6,-1.8" fill="none" stroke="#d6d6d6" stroke-width="1.4"/></g>
<circle cx="1325.5" cy="12.5" r="3.8" fill="none" stroke="#bdbdbd" stroke-width="1.2"/>
<text x="1336" y="18.8" font-family="Liberation Sans" font-size="11" fill="#8c8c8c">Search Adob</text>
<rect x="1300" y="14.8" width="110" height="15" fill="#535353"/>
<rect x="1507.7" y="10.3" width="10.8" height="3.3" fill="#cfcfcf"/>
<path d="M1539,8.5 v-3 h8 v6 h-3 M1536,8.5 h8 v5.5 h-8 z" fill="none" stroke="#cfcfcf" stroke-width="1.5"/>
<path d="M1566,5 L1575.5,14 M1575.5,5 L1566,14" stroke="#d4d4d4" stroke-width="1.4"/>
<!-- ===== CONTROL BAR ===== -->
<path d="M6.5,39 v19.5" stroke="#6a6a6a" stroke-width="1.5" stroke-dasharray="1,1"/>
<g transform="translate(127.5,49.5)"><polyline points="-3.6,-1.8 0,1.8 3.6,-1.8" fill="none" stroke="#d6d6d6" stroke-width="1.4"/></g>
<g transform="translate(173.5,49.5)"><polyline points="-3.6,-1.8 0,1.8 3.6,-1.8" fill="none" stroke="#d6d6d6" stroke-width="1.4"/></g>
<polyline points="240.5,46 243.5,43 246.5,46" fill="none" stroke="#d6d6d6" stroke-width="1.2"/>
<polyline points="240.5,52 243.5,55 246.5,52" fill="none" stroke="#d6d6d6" stroke-width="1.2"/>
<g transform="translate(308.5,49.5)"><polyline points="-3.6,-1.8 0,1.8 3.6,-1.8" fill="none" stroke="#d6d6d6" stroke-width="1.4"/></g>
<g transform="translate(426.5,49.5)"><polyline points="-3.6,-1.8 0,1.8 3.6,-1.8" fill="none" stroke="#d6d6d6" stroke-width="1.4"/></g>
<g transform="translate(541,49.5)"><polyline points="-3.6,-1.8 0,1.8 3.6,-1.8" fill="none" stroke="#d6d6d6" stroke-width="1.4"/></g>
<polyline points="662.5,45.5 665.5,49 662.5,52.5" fill="none" stroke="#d6d6d6" stroke-width="1.4"/>
<g transform="translate(741,49.5)"><polyline points="-3.6,-1.8 0,1.8 3.6,-1.8" fill="none" stroke="#d6d6d6" stroke-width="1.4"/></g>
<path d="M228,57.5 h-32.5 M596,57.5 h-38 M1243.5,57.5 h-45" stroke="#a0a0a0" stroke-width="1" stroke-dasharray="1,1"/>
<circle cx="776.5" cy="48.5" r="8.3" fill="#8a8a8a" stroke="#d0d0d0" stroke-width="1.2"/>
<path d="M776.5,48.5 L776.5,40.5 A8,8 0 0 1 783.5,44.5 Z M776.5,48.5 L784.5,48.5 A8,8 0 0 1 781,55 Z M776.5,48.5 L772,55 A8,8 0 0 1 768.5,48.5 Z" fill="#d8d8d8"/>
<path d="M776.5,48.5 L769,44.5 A8,8 0 0 1 772,41 Z M776.5,48.5 L776.5,56.5 A8,8 0 0 1 772,55 Z" fill="#333"/>
<circle cx="776.5" cy="48.5" r="1.6" fill="#f0f0f0"/>
<!-- align-to -->
<rect x="810.5" y="42.5" width="13" height="13" fill="none" stroke="#cfcfcf" stroke-width="1" stroke-dasharray="1.5,1.5"/>
<rect x="809.5" y="41.5" width="2.4" height="2.4" fill="#cfcfcf"/><rect x="822" y="41.5" width="2.4" height="2.4" fill="#cfcfcf"/><rect x="809.5" y="54" width="2.4" height="2.4" fill="#cfcfcf"/><rect x="822" y="54" width="2.4" height="2.4" fill="#cfcfcf"/><rect x="815.8" y="47.8" width="2.4" height="2.4" fill="#cfcfcf"/>
<polyline points="827.5,48 830.5,51 833.5,48" fill="none" stroke="#cfcfcf" stroke-width="1.1"/>
<g fill="#cfcfcf">
<!-- align left 851-867 -->
<rect x="851" y="40" width="1.2" height="19"/><rect x="853.5" y="41.5" width="8" height="5.5"/><rect x="853.5" y="49.5" width="13.5" height="5.5"/>
<!-- align hcenter 878.5-893 -->
<rect x="885.3" y="39" width="1.2" height="20"/><rect x="881" y="41.5" width="9.5" height="5.5"/><rect x="878.5" y="49.5" width="14.5" height="5.5"/>
<!-- align right 905.8-922 -->
<rect x="920.8" y="40" width="1.2" height="19"/><rect x="911" y="41.5" width="8.5" height="5.5"/><rect x="905.8" y="49.5" width="13.7" height="5.5"/>
<!-- align top 935.7-954.5 -->
<rect x="935.7" y="40" width="18.8" height="1.2"/><rect x="939.5" y="42.5" width="5.5" height="13.5"/><rect x="947" y="42.5" width="5.5" height="8"/>
<!-- align vcenter 962-981 -->
<rect x="962" y="48" width="19" height="1.2"/><rect x="966" y="41" width="5.5" height="14.5"/><rect x="973.5" y="43.5" width="5.5" height="9.5"/>
<!-- align bottom 989-1008 -->
<rect x="989" y="56.5" width="19" height="1.2"/><rect x="992.5" y="41.5" width="5.5" height="13.5"/><rect x="1000.5" y="47" width="5.5" height="8"/>
<!-- dist top 1021-1040.7 -->
<rect x="1021" y="40" width="19.7" height="1.2"/><rect x="1025" y="42.5" width="11" height="4"/><rect x="1021" y="49" width="19.7" height="1.2"/><rect x="1023.5" y="51.5" width="14.5" height="5"/>
<!-- dist vcenter 1048.6-1067.4 -->
<rect x="1048.6" y="43.5" width="18.8" height="1.2"/><rect x="1053" y="41" width="10" height="5"/><rect x="1048.6" y="53" width="18.8" height="1.2"/><rect x="1050.5" y="50.5" width="15" height="5.5"/>
<!-- dist bottom 1075-1094 -->
<rect x="1079.5" y="41" width="10" height="4"/><rect x="1075" y="46.5" width="19" height="1.2"/><rect x="1077.5" y="50" width="14.5" height="5"/><rect x="1075" y="57" width="19" height="1.2"/>
<!-- dist left 1107.6-1125 -->
<rect x="1107.6" y="40" width="1.2" height="19"/><rect x="1110" y="42" width="5" height="14.5"/><rect x="1116.6" y="40" width="1.2" height="19"/><rect x="1119.5" y="44.5" width="5" height="9"/>
<!-- dist hcenter 1136-1151 -->
<rect x="1138.3" y="39.5" width="1.2" height="20"/><rect x="1136" y="42" width="5.5" height="14.5"/><rect x="1147.5" y="39.5" width="1.2" height="20"/><rect x="1145.5" y="44.5" width="5.5" height="9"/>
<!-- dist right 1162-1179 -->
<rect x="1162" y="42" width="5" height="14.5"/><rect x="1168.5" y="40" width="1.2" height="19"/><rect x="1171" y="44.5" width="5" height="9"/><rect x="1177.8" y="40" width="1.2" height="19"/>
</g>
<!-- transform icon -->
<rect x="1256" y="46" width="6" height="6" fill="none" stroke="#cfcfcf" stroke-width="1.2"/>
<rect x="1265" y="41" width="6" height="6" fill="none" stroke="#cfcfcf" stroke-width="1.2"/>
<path d="M1263,49 L1263,60 L1266,57 L1270,58 Z" fill="#cfcfcf"/>
<g transform="translate(1283,48.5)"><polyline points="-3.6,-1.8 0,1.8 3.6,-1.8" fill="none" stroke="#d6d6d6" stroke-width="1.4"/></g>
<g fill="#cfcfcf"><rect x="1481" y="42" width="6" height="6"/><rect x="1489" y="42" width="6" height="6"/><rect x="1481" y="50" width="6" height="6"/><rect x="1489" y="50" width="6" height="6"/></g>
<path d="M1480,49 h16 M1488,40 v18" stroke="#535353" stroke-width="1"/>
<rect x="1507" y="41" width="4" height="17" fill="#cfcfcf"/><rect x="1507" y="46" width="4" height="1" fill="#535353"/><rect x="1507" y="52" width="4" height="1" fill="#535353"/>
<path d="M1514,45.5 h4 a4,3.5 0 0 1 0,7 h-4" fill="none" stroke="#cfcfcf" stroke-width="2"/>
<polyline points="1531.5,47.5 1534,50 1536.5,47.5" fill="none" stroke="#777" stroke-width="1"/>
<g fill="#cfcfcf"><rect x="1558" y="43" width="2.5" height="2.5"/><rect x="1562" y="43.5" width="8.5" height="1.7"/><rect x="1558" y="48" width="2.5" height="2.5"/><rect x="1562" y="48.5" width="8.5" height="1.7"/><rect x="1558" y="53" width="2.5" height="2.5"/><rect x="1562" y="53.5" width="8.5" height="1.7"/></g>
<!-- ===== TABS ===== -->
<g transform="translate(249.4,83.5)"><path d="M-3.2,-3.2 L3.2,3.2 M3.2,-3.2 L-3.2,3.2" stroke="#b8b8b8" stroke-width="1.1"/></g>
<g transform="translate(435.3,83.5)"><path d="M-3.2,-3.2 L3.2,3.2 M3.2,-3.2 L-3.2,3.2" stroke="#b8b8b8" stroke-width="1.1"/></g>
<g transform="translate(863.3,82.5)"><path d="M-3.2,-3.2 L3.2,3.2 M3.2,-3.2 L-3.2,3.2" stroke="#b8b8b8" stroke-width="1.1"/></g>
<g transform="translate(1047.3,82.5)"><path d="M-3.2,-3.2 L3.2,3.2 M3.2,-3.2 L-3.2,3.2" stroke="#b8b8b8" stroke-width="1.1"/></g>
<g transform="translate(1231.3,82.5)"><path d="M-3.2,-3.2 L3.2,3.2 M3.2,-3.2 L-3.2,3.2" stroke="#b8b8b8" stroke-width="1.1"/></g>
<!-- ===== LEFT TOOLBAR ===== -->
<polyline points="7.5,70.5 5,73 7.5,75.5 M11.5,70.5 9,73 11.5,75.5" fill="none" stroke="#d0d0d0" stroke-width="1.2"/>
<path d="M11.5,70.5 L9,73 L11.5,75.5" fill="none" stroke="#d0d0d0" stroke-width="1.2"/>
<g transform="translate(27.5,81.5)"><path d="M0,0v5M2,0v5M4,0v5M6,0v5M8,0v5M10,0v5M12,0v5M14,0v5M16,0v5" stroke="#3e3e3e" stroke-width="1"/></g>
<g fill="none" stroke="#d0d0d0" stroke-width="1.2">
<!-- row1: selection, direct selection -->
<path d="M17,104.5 L28.5,114.5 L22.5,115 L19.5,121 Z"/>
</g>
<path d="M48.5,104.5 L60.5,114.5 L54.5,115 L51,121 Z" fill="#d0d0d0"/>
<g transform="translate(62.5,118)"><path d="M3.5,0 L3.5,3.5 L0,3.5 Z" fill="#c8c8c8"/></g>
<!-- row2: magic wand, lasso -->
<path d="M15,145 L26,134" stroke="#d0d0d0" stroke-width="2.4"/>
<path d="M20,131 l0.8,2 2,0.8 -2,0.8 -0.8,2 -0.8,-2 -2,-0.8 2,-0.8z M28,130 l0.6,1.5 1.5,0.6 -1.5,0.6 -0.6,1.5 -0.6,-1.5 -1.5,-0.6 1.5,-0.6z" fill="#d0d0d0"/>
<path d="M52,141 c-6,-2 -6,-9 1,-10 c6,-1 9,2 8,5" fill="none" stroke="#d0d0d0" stroke-width="1.3"/>
<path d="M53,134 L62,141 L57,142 L54.5,147 Z" fill="#d0d0d0"/>
<path d="M51,141 c-2,2 0,5 1,3" fill="none" stroke="#d0d0d0" stroke-width="1.1"/>
<!-- row3: pen (selected), curvature -->
<rect x="11" y="155" width="8" height="1.6" fill="#d0d0d0"/>
<path d="M30,153 L34,157 L31,160 L24.5,168 L17,170 L19,162.5 L27,156 Z" fill="#d0d0d0"/>
<circle cx="23.5" cy="163.5" r="1.2" fill="#2f2f2f"/>
<g transform="translate(31.5,168.5)"><path d="M3.5,0 L3.5,3.5 L0,3.5 Z" fill="#c8c8c8"/></g>
<path d="M61,153 L65,157 L62,160 L55.5,168 L48,170 L50,162.5 L58,156 Z" fill="#d0d0d0"/>
<path d="M49,169 c-4,-3 -3,-7 0,-9 c3,-2 2,-6 -1,-7" fill="none" stroke="#d0d0d0" stroke-width="1.1"/>
<!-- row4: type, line -->
<path d="M14.5,180.5 h13.5 v3 M14.5,180.5 v3 M21.2,180.5 v12.5 M18,193 h6.5" fill="none" stroke="#d0d0d0" stroke-width="1.8"/>
<g transform="translate(31.5,193)"><path d="M3.5,0 L3.5,3.5 L0,3.5 Z" fill="#c8c8c8"/></g>
<path d="M46,194 L61,179" stroke="#d0d0d0" stroke-width="1.3"/>
<g transform="translate(62.5,193)"><path d="M3.5,0 L3.5,3.5 L0,3.5 Z" fill="#c8c8c8"/></g>
<!-- row5: rect, brush -->
<rect x="14" y="203.5" width="15" height="13.5" fill="#6a6a6a" stroke="#d0d0d0" stroke-width="1.4"/>
<g transform="translate(31.5,218)"><path d="M3.5,0 L3.5,3.5 L0,3.5 Z" fill="#c8c8c8"/></g>
<path d="M61,202 L63,204 L54,213 L52,211 Z" fill="#d0d0d0"/>
<path d="M51.5,212 c-3,0 -4,3 -5,6 c3,0 6,-1 7,-4z" fill="#d0d0d0"/>
<g transform="translate(62.5,218)"><path d="M3.5,0 L3.5,3.5 L0,3.5 Z" fill="#c8c8c8"/></g>
<!-- row6: shaper, eraser -->
<circle cx="19" cy="235" r="5.5" fill="#6a6a6a" stroke="#d0d0d0" stroke-width="1.3"/>
<path d="M21,241 L32,230" stroke="#d0d0d0" stroke-width="3"/>
<g transform="translate(31.5,242.5)"><path d="M3.5,0 L3.5,3.5 L0,3.5 Z" fill="#c8c8c8"/></g>
<path d="M55,229 L62,236 L56,242 L49,235 Z" fill="#d0d0d0"/>
<path d="M49,235 L45.5,238.5 L49.5,242.5 L53,239" fill="none" stroke="#d0d0d0" stroke-width="1.3"/>
<g transform="translate(62.5,242.5)"><path d="M3.5,0 L3.5,3.5 L0,3.5 Z" fill="#c8c8c8"/></g>
<!-- row7: rotate, scale -->
<path d="M16,257 a7,7 0 1 1 4,11" fill="none" stroke="#d0d0d0" stroke-width="1.4" stroke-dasharray="2,1.3"/>
<path d="M14,256 L19,253 L19,259 Z" fill="#d0d0d0"/>
<g transform="translate(31.5,267.5)"><path d="M3.5,0 L3.5,3.5 L0,3.5 Z" fill="#c8c8c8"/></g>
<rect x="44.5" y="260.5" width="9" height="8.5" fill="none" stroke="#d0d0d0" stroke-width="1.2"/>
<rect x="48.5" y="253" width="13.5" height="11.5" fill="none" stroke="#d0d0d0" stroke-width="1.2"/>
<path d="M55,261 L60,256 M57,255.5 h3.5 v3.5" fill="none" stroke="#d0d0d0" stroke-width="1.1"/>
<g transform="translate(62.5,267.5)"><path d="M3.5,0 L3.5,3.5 L0,3.5 Z" fill="#c8c8c8"/></g>
<!-- row8: warp(puppet), free transform -->
<path d="M19,285 c-2,-6 2,-9 5,-6 c-3,1 -1,4 2,4 c3,0 5,-3 8,-1 c-2,1 -3,3 -3,6 c-3,1 -7,0 -9,-1 z" fill="#d0d0d0"/>
<path d="M14,292.5 L26,279" stroke="#d0d0d0" stroke-width="1.1"/>
<circle cx="14" cy="292.5" r="1.5" fill="#535353" stroke="#d0d0d0" stroke-width="1"/>
<g transform="translate(31.5,292.5)"><path d="M3.5,0 L3.5,3.5 L0,3.5 Z" fill="#c8c8c8"/></g>
<rect x="49.5" y="279.5" width="12.5" height="12" fill="none" stroke="#d0d0d0" stroke-width="1.1" stroke-dasharray="2,1.5"/>
<path d="M44,277 L53.5,285 L48.5,286 L44,292.5 Z" fill="#d0d0d0"/>
<g transform="translate(62.5,292.5)"><path d="M3.5,0 L3.5,3.5 L0,3.5 Z" fill="#c8c8c8"/></g>
<!-- row9: shape builder, perspective grid -->
<ellipse cx="21" cy="307.5" rx="7.5" ry="5.5" fill="none" stroke="#d0d0d0" stroke-width="1.2"/>
<path d="M25,308 L33,314.5 L29,315 L27,319 Z" fill="#d0d0d0"/>
<g transform="translate(31.5,317)"><path d="M3.5,0 L3.5,3.5 L0,3.5 Z" fill="#c8c8c8"/></g>
<path d="M44.5,302 v15 l9,-4 v-8 z M44.5,307 h9 M44.5,312 h9 M49,303.5 v11.5 M55,312 h7 M55,315 h8 M55,309 h5" fill="none" stroke="#d0d0d0" stroke-width="1.1"/>
<g transform="translate(62.5,317)"><path d="M3.5,0 L3.5,3.5 L0,3.5 Z" fill="#c8c8c8"/></g>
<!-- row10: mesh, gradient -->
<rect x="14" y="328" width="16" height="14.5" fill="none" stroke="#d0d0d0" stroke-width="1.3"/>
<path d="M15,333 c4,-2 9,2 14,-1 M15,338 c4,-2 9,2 14,-1 M19,329 c-2,4 2,9 0,13 M25,329 c-2,4 2,9 0,13" fill="none" stroke="#d0d0d0" stroke-width="1"/>
<defs><linearGradient id="gr1" x1="0" x2="1"><stop offset="0" stop-color="#1a1a1a"/><stop offset="1" stop-color="#e0e0e0"/></linearGradient><linearGradient id="gr2" x1="0" x2="1"><stop offset="0" stop-color="#222"/><stop offset="1" stop-color="#f0f0f0"/></linearGradient></defs>
<rect x="45" y="328" width="15.5" height="14.5" fill="url(#gr1)" stroke="#d0d0d0" stroke-width="1.2"/>
<!-- row11: eyedropper, blend -->
<path d="M26,353 l3,3 -2,2 -10,10 -3,1 1,-3 10,-10 z" fill="none" stroke="#d0d0d0" stroke-width="1.3"/>
<path d="M25.5,352.5 l4.5,4.5 1.5,-1.5 -4.5,-4.5z" fill="#d0d0d0"/>
<g transform="translate(31.5,366.5)"><path d="M3.5,0 L3.5,3.5 L0,3.5 Z" fill="#c8c8c8"/></g>
<rect x="44.5" y="353" width="6" height="6" fill="#d0d0d0"/>
<circle cx="53" cy="359" r="4.5" fill="#9a9a9a" stroke="#d0d0d0" stroke-width="1"/>
<circle cx="58" cy="363" r="4" fill="#535353" stroke="#d0d0d0" stroke-width="1.2"/>
<!-- row12: symbol sprayer, column graph -->
<g fill="#d0d0d0"><rect x="12.5" y="378" width="1.6" height="1.6"/><rect x="15.5" y="378" width="1.6" height="1.6"/><rect x="12.5" y="381" width="1.6" height="1.6"/><rect x="15.5" y="381" width="1.6" height="1.6"/><rect x="12.5" y="384" width="1.6" height="1.6"/><rect x="18.5" y="378" width="1.6" height="1.6"/></g>
<rect x="20" y="381.5" width="8.5" height="11" rx="1.5" fill="none" stroke="#d0d0d0" stroke-width="1.3"/>
<circle cx="24.2" cy="387.5" r="2.3" fill="none" stroke="#d0d0d0" stroke-width="1.1"/>
<rect x="22.5" y="378.5" width="3.5" height="3" fill="#d0d0d0"/>
<g transform="translate(31.5,391)"><path d="M3.5,0 L3.5,3.5 L0,3.5 Z" fill="#c8c8c8"/></g>
<path d="M45,378 v15 h16.5" fill="none" stroke="#d0d0d0" stroke-width="1.2"/>
<g fill="#d0d0d0"><rect x="47.5" y="384" width="2.4" height="8"/><rect x="51.3" y="379" width="2.4" height="13"/><rect x="55.1" y="382" width="2.4" height="10"/><rect x="58.9" y="386" width="2.4" height="6"/></g>
<g transform="translate(62.5,391)"><path d="M3.5,0 L3.5,3.5 L0,3.5 Z" fill="#c8c8c8"/></g>
<!-- row13: artboard, slice -->
<path d="M11,406.4 h7 M17.4,400 v7.5" stroke="#d0d0d0" stroke-width="1.2"/>
<path d="M18,405 h10 l2,2 v10 h-12 z" fill="#6a6a6a" stroke="#d0d0d0" stroke-width="1.2"/>
<path d="M61,402 l2,2 -12,12 -4,1 1,-4z" fill="none" stroke="#d0d0d0" stroke-width="1.2"/>
<path d="M58,403 l3,3" stroke="#d0d0d0" stroke-width="1.2"/>
<g transform="translate(62.5,415.5)"><path d="M3.5,0 L3.5,3.5 L0,3.5 Z" fill="#c8c8c8"/></g>
<!-- row14: hand, zoom -->
<path d="M18,442 c-2,-2 -5,-6 -4.5,-7.5 c1,-1.5 3,0 4.5,2 v-8.5 c0,-2 2.4,-2 2.4,0 v5 v-7 c0,-2 2.4,-2 2.4,0 v7 v-6 c0,-2 2.4,-2 2.4,0 v6 v-4 c0,-2 2.4,-2 2.4,0 v7.5 c0,4.5 -2.5,6.5 -5.5,6.5 h-4z" fill="#d0d0d0"/>
<g transform="translate(31.5,440)"><path d="M3.5,0 L3.5,3.5 L0,3.5 Z" fill="#c8c8c8"/></g>
<circle cx="51.5" cy="432" r="5.5" fill="none" stroke="#d0d0d0" stroke-width="1.4"/>
<path d="M55.5,436 L61,441.5" stroke="#d0d0d0" stroke-width="2"/>
<!-- fill/stroke widget -->
<rect x="25.5" y="473.5" width="36.5" height="36.5" fill="#000" stroke="#bdbdbd" stroke-width="1"/>
<rect x="34.5" y="482.5" width="18" height="18" fill="#535353" stroke="#bdbdbd" stroke-width="1.5"/>
<rect x="7.5" y="454.5" width="35.5" height="36" fill="#fff" stroke="#9a9a9a" stroke-width="1"/>
<line x1="8.5" y1="489.5" x2="42" y2="455.5" stroke="#e0141e" stroke-width="2.2"/>
<path d="M54,461 a6,6 0 0 1 7,6" fill="none" stroke="#d0d0d0" stroke-width="1.4"/>
<path d="M52,458.5 L55.5,457 L55,462 Z M59,465.5 L64,466 L60.5,469 Z" fill="#d0d0d0"/>
<rect x="7" y="498" width="7" height="7" fill="#fff" stroke="#d0d0d0" stroke-width="1"/>
<rect x="10.5" y="501.5" width="7" height="7" fill="#000" stroke="#d0d0d0" stroke-width="1"/>
<rect x="6.5" y="518" width="18" height="19" fill="#353535"/>
<rect x="9" y="520.5" width="13" height="13.5" fill="#fff" stroke="#222" stroke-width="1"/>
<rect x="28.5" y="518" width="18" height="19" fill="#353535"/>
<rect x="31" y="520.5" width="13" height="13.5" fill="url(#gr2)" stroke="#222" stroke-width="1"/>
<rect x="48" y="518" width="18" height="19" fill="#353535"/>
<rect x="50.5" y="520.5" width="13" height="13.5" fill="#fff" stroke="#222" stroke-width="1"/>
<line x1="51.5" y1="533" x2="62.5" y2="521.5" stroke="#e0141e" stroke-width="2"/>
<rect x="7.5" y="543" width="59" height="18" fill="#4e4e4e"/>
<rect x="7.5" y="543" width="18.5" height="18" fill="#333"/>
<circle cx="14.5" cy="550.5" r="4" fill="#8a8a8a" stroke="#d0d0d0" stroke-width="1"/><rect x="15" y="551" width="6" height="6" fill="#d0d0d0"/>
<circle cx="35" cy="550.5" r="4" fill="#8a8a8a" stroke="#d0d0d0" stroke-width="1"/><rect x="35.5" y="551" width="6" height="6" fill="#d0d0d0"/>
<circle cx="56" cy="551.5" r="4.5" fill="none" stroke="#777" stroke-width="1"/>
<rect x="34" y="571" width="15" height="10" fill="#6a6a6a" stroke="#d0d0d0" stroke-width="1.1"/>
<rect x="26" y="576" width="14" height="10" fill="#535353" stroke="#d0d0d0" stroke-width="1.1"/>
<path d="M34,573.5 h15 M26,578.5 h14" stroke="#d0d0d0" stroke-width="1"/>
<g transform="translate(37.5,612)"><circle cx="-5.5" cy="0" r="1.7" fill="#d0d0d0"/><circle cx="0" cy="0" r="1.7" fill="#d0d0d0"/><circle cx="5.5" cy="0" r="1.7" fill="#d0d0d0"/></g>
<!-- ===== V SCROLL / STATUS ===== -->
<polyline points="1271.5,109 1275,105.5 1278.5,109" fill="none" stroke="#b0b0b0" stroke-width="1.2"/>
<polyline points="1271.5,865 1275,868.5 1278.5,865" fill="none" stroke="#b0b0b0" stroke-width="1.2"/>
<g transform="translate(142,885.5)"><polyline points="-3.6,-1.8 0,1.8 3.6,-1.8" fill="none" stroke="#d6d6d6" stroke-width="1.4"/></g>
<g transform="translate(245.5,885.5)"><polyline points="-3.6,-1.8 0,1.8 3.6,-1.8" fill="none" stroke="#d6d6d6" stroke-width="1.4"/></g>
<g fill="#6e6e6e"><rect x="160" y="880" width="1.5" height="10"/><path d="M168.5,880 v10 l-6,-5z"/><path d="M188,880 v10 l-6,-5z"/>
<path d="M264,880 v10 l6,-5z"/><path d="M283,880 v10 l6,-5z"/><rect x="289" y="880" width="1.5" height="10"/></g>
<path d="M511,881 v8 l6,-4z" fill="#d0d0d0"/>
<polyline points="534,881.5 530.5,885 534,888.5" fill="none" stroke="#b0b0b0" stroke-width="1.2"/>
<polyline points="1255.5,881.5 1259,885 1255.5,888.5" fill="none" stroke="#b0b0b0" stroke-width="1.2"/>
<!-- ===== RIGHT DOCK ===== -->
<path d="M1315.5,70 L1313,72.5 L1315.5,75 M1319.5,70 L1317,72.5 L1319.5,75" fill="none" stroke="#d0d0d0" stroke-width="1.1"/>
<path d="M1574,70 L1576.5,72.5 L1574,75 M1578,70 L1580.5,72.5 L1578,75" fill="none" stroke="#d0d0d0" stroke-width="1.1"/>
<g fill="none" stroke="#3a3a3a" stroke-width="1.5">
<path d="M1287.5,149.5 h38 M1287.5,250.5 h38 M1287.5,350.5 h38 M1287.5,422 h38 M1287.5,522.5 h38 M1287.5,594.5 h38 M1287.5,636 h38"/>
</g>
<g transform="translate(1299.5,82.5)"><path d="M0,0v5M2,0v5M4,0v5M6,0v5M8,0v5M10,0v5M12,0v5M14,0v5M16,0v5" stroke="#3e3e3e" stroke-width="1"/></g>
<g transform="translate(1299.5,153)"><path d="M0,0v5M2,0v5M4,0v5M6,0v5M8,0v5M10,0v5M12,0v5M14,0v5M16,0v5" stroke="#3e3e3e" stroke-width="1"/></g>
<g transform="translate(1299.5,253.5)"><path d="M0,0v5M2,0v5M4,0v5M6,0v5M8,0v5M10,0v5M12,0v5M14,0v5M16,0v5" stroke="#3e3e3e" stroke-width="1"/></g>
<g transform="translate(1299.5,354)"><path d="M0,0v5M2,0v5M4,0v5M6,0v5M8,0v5M10,0v5M12,0v5M14,0v5M16,0v5" stroke="#3e3e3e" stroke-width="1"/></g>
<g transform="translate(1299.5,425)"><path d="M0,0v5M2,0v5M4,0v5M6,0v5M8,0v5M10,0v5M12,0v5M14,0v5M16,0v5" stroke="#3e3e3e" stroke-width="1"/></g>
<g transform="translate(1299.5,525.5)"><path d="M0,0v5M2,0v5M4,0v5M6,0v5M8,0v5M10,0v5M12,0v5M14,0v5M16,0v5" stroke="#3e3e3e" stroke-width="1"/></g>
<g transform="translate(1299.5,597.5)"><path d="M0,0v5M2,0v5M4,0v5M6,0v5M8,0v5M10,0v5M12,0v5M14,0v5M16,0v5" stroke="#3e3e3e" stroke-width="1"/></g>
<!-- palette -->
<path d="M1307,96.5 c7,0 11,3 11,6.5 c0,2.5 -2.5,2.5 -4,2.5 c-1.5,0 -1,2 0,3 c1,1.5 -2,2.5 -7,2.5 c-6,0 -10,-3 -10,-7 c0,-4 4,-7.5 10,-7.5z" fill="#d0d0d0"/>
<g fill="#535353"><circle cx="1301" cy="106" r="1.3"/><circle cx="1304.5" cy="108" r="1.3"/><circle cx="1308.5" cy="108" r="1.3"/><circle cx="1312" cy="102" r="1.2"/><circle cx="1313.5" cy="99.5" r="1"/></g>
<!-- quarter gradient -->
<defs><radialGradient id="qg" cx="0" cy="1" r="1"><stop offset="0" stop-color="#111"/><stop offset="1" stop-color="#f0f0f0"/></radialGradient></defs>
<path d="M1300,140.5 V124.5 A16.5,16 0 0 1 1316.5,140.5 Z" fill="url(#qg)" stroke="#d0d0d0" stroke-width="1.2"/>
<!-- swatches -->
<rect x="1299" y="169.5" width="16.5" height="11.5" fill="#d0d0d0"/>
<g fill="#8a8a8a"><rect x="1300.5" y="171" width="4" height="3.8"/><rect x="1305.5" y="171" width="4" height="3.8"/><rect x="1310.5" y="171" width="4" height="3.8"/><rect x="1300.5" y="175.8" width="4" height="3.8"/><rect x="1305.5" y="175.8" width="4" height="3.8"/><rect x="1310.5" y="175.8" width="4" height="3.8"/></g>
<rect x="1305.5" y="171" width="4" height="3.8" fill="#c0c0c0"/>
<!-- brushes -->
<rect x="1301.5" y="204" width="10.5" height="11" fill="#d0d0d0"/>
<path d="M1304,204 L1301,196 M1307,204 L1306,193 M1309.5,204 L1313,198" stroke="#d0d0d0" stroke-width="1.6"/>
<circle cx="1306" cy="194.5" r="2" fill="#d0d0d0"/><path d="M1311,197 c2,-2 5,-1 5,1 c-2,0 -3,1 -4,2z" fill="#d0d0d0"/><path d="M1299,197 c0,-2 2,-3 3,-1 l-1,2z" fill="#d0d0d0"/>
<!-- club -->
<circle cx="1307.5" cy="227.5" r="4" fill="#d0d0d0"/><circle cx="1303" cy="233.5" r="4" fill="#d0d0d0"/><circle cx="1312" cy="233.5" r="4" fill="#d0d0d0"/>
<path d="M1307.5,230 L1307.5,240 M1301,241.5 h13 c-3,-1 -5,-3 -6.5,-6 c-1.5,3 -3.5,5 -6.5,6z" fill="#d0d0d0" stroke="#d0d0d0" stroke-width="1"/>
<!-- stroke lines -->
<g fill="#d0d0d0"><rect x="1298" y="268.5" width="19" height="2"/><rect x="1298" y="273" width="19" height="3"/><rect x="1298" y="278.5" width="19" height="4"/></g>
<!-- gradient -->
<rect x="1299" y="297.5" width="17" height="13" fill="url(#gr2)" stroke="#d0d0d0" stroke-width="1.3"/>
<!-- transparency -->
<circle cx="1305" cy="330.5" r="6.8" fill="#cfcfcf"/>
<circle cx="1309.5" cy="337" r="6.8" fill="#8f8f8f" stroke="#535353" stroke-width="0.8"/>
<path d="M1302.7,337 a6.8,6.8 0 0 1 9,-6.4" fill="none" stroke="#cfcfcf" stroke-width="0"/>
<!-- appearance -->
<circle cx="1307.8" cy="376" r="6" fill="#d0d0d0"/>
<circle cx="1307.8" cy="376" r="8" fill="none" stroke="#d0d0d0" stroke-width="1.1" stroke-dasharray="1.6,1.6"/>
<!-- transform -->
<rect x="1304" y="397.5" width="12.5" height="12.5" fill="none" stroke="#d0d0d0" stroke-width="1.3"/>
<rect x="1299" y="405" width="6" height="5.5" fill="#535353" stroke="#d0d0d0" stroke-width="1.2"/>
<rect x="1302" y="408" width="6" height="5.5" fill="#535353" stroke="#d0d0d0" stroke-width="1.2"/>
<!-- layers -->
<path d="M1307.5,440 L1316,446 L1307.5,451.5 L1299,446 Z" fill="#d0d0d0"/>
<path d="M1299,450 L1307.5,455.5 L1316,450" fill="none" stroke="#d0d0d0" stroke-width="1.8"/>
<!-- export -->
<path d="M1307,469 h-8 v15.5 h15.5 v-8" fill="none" stroke="#d0d0d0" stroke-width="1.6"/>
<path d="M1306,478 L1316,468 M1310,467.5 h6 v6" fill="none" stroke="#d0d0d0" stroke-width="1.6"/>
<!-- artboards -->
<rect x="1298.5" y="496.5" width="10" height="12.5" fill="none" stroke="#d0d0d0" stroke-width="1.2"/>
<rect x="1302" y="503" width="14" height="11" fill="#535353" stroke="#d0d0d0" stroke-width="1.2"/>
<!-- transform2 -->
<rect x="1301.5" y="542" width="12.5" height="12" fill="none" stroke="#d0d0d0" stroke-width="1.2" stroke-dasharray="2,1.5"/>
<g fill="#d0d0d0"><rect x="1300" y="540.5" width="3" height="3"/><rect x="1312.5" y="540.5" width="3" height="3"/><rect x="1300" y="552.5" width="3" height="3"/><rect x="1312.5" y="552.5" width="3" height="3"/><rect x="1306.3" y="546.5" width="2.8" height="2.8"/><rect x="1306.3" y="540.5" width="3" height="3"/><rect x="1306.3" y="552.5" width="3" height="3"/><rect x="1300" y="546.5" width="3" height="3"/><rect x="1312.5" y="546.5" width="3" height="3"/></g>
<rect x="1303.5" y="544" width="8.5" height="8" fill="#535353"/><rect x="1306.5" y="547" width="2.5" height="2.5" fill="#d0d0d0"/>
<!-- align -->
<g fill="#d0d0d0"><rect x="1300" y="567.5" width="1.3" height="19"/><rect x="1302.5" y="570" width="8" height="5.5"/><rect x="1302.5" y="578" width="13.5" height="5.5"/></g>
<!-- pathfinder -->
<rect x="1300" y="612" width="10" height="9.5" fill="#d0d0d0"/>
<rect x="1305" y="617" width="10.5" height="10.5" fill="#d0d0d0" stroke="#535353" stroke-width="1"/>
<rect x="1305.5" y="617.5" width="4" height="3.5" fill="#535353"/>
<!-- ===== PROPERTIES ===== -->
<!-- ref point -->
<g fill="none" stroke="#d0d0d0" stroke-width="1"><rect x="1338.5" y="187.5" width="5" height="5"/><rect x="1346" y="187.5" width="5" height="5"/><rect x="1353.5" y="187.5" width="5" height="5"/><rect x="1338.5" y="195" width="5" height="5"/><rect x="1353.5" y="195" width="5" height="5"/><rect x="1338.5" y="202.5" width="5" height="5"/><rect x="1346" y="202.5" width="5" height="5"/><rect x="1353.5" y="202.5" width="5" height="5"/>
<path d="M1343.5,190 h2.5 M1351,190 h2.5 M1343.5,205 h2.5 M1351,205 h2.5 M1341,192.5 v2.5 M1356,192.5 v2.5 M1341,200 v2.5 M1356,200 v2.5"/></g>
<rect x="1346" y="195" width="5" height="5" fill="#f0f0f0"/>
<!-- link -->
<path d="M1552,194 v-2 a3,3 0 0 1 6,0 v4 M1552,200 v3 a3,3 0 0 0 6,0 v-2" fill="none" stroke="#d0d0d0" stroke-width="1.5"/>
<path d="M1549,190.5 L1563,206.5" stroke="#d0d0d0" stroke-width="1.4"/>
<!-- angle -->
<path d="M1383.5,240.5 h-15 l9,-8.5" fill="none" stroke="#c8c8c8" stroke-width="1.2"/>
<path d="M1374,234.5 a6,6 0 0 1 2.5,6" fill="none" stroke="#c8c8c8" stroke-width="1"/>
<circle cx="1386" cy="234" r="0.9" fill="#c8c8c8"/><circle cx="1386" cy="239.5" r="0.9" fill="#c8c8c8"/>
<g transform="translate(1434.8,238.5)"><polyline points="-3.6,-1.8 0,1.8 3.6,-1.8" fill="none" stroke="#d6d6d6" stroke-width="1.4"/></g>
<!-- flip -->
<path d="M1483.5,234.5 v11 l5.5,-5.5z" fill="none" stroke="#d0d0d0" stroke-width="1.1"/>
<path d="M1497.5,234.5 v11 l-5.5,-5.5z" fill="#d0d0d0"/>
<path d="M1490.5,233 v14" stroke="#d0d0d0" stroke-width="1" stroke-dasharray="1.2,1.2"/>
<path d="M1514,234 h11.5 l-5.75,5z" fill="#d0d0d0"/>
<path d="M1514,246 h11.5 l-5.75,-5z" fill="none" stroke="#d0d0d0" stroke-width="1.1"/>
<path d="M1512.5,240 h14.5" stroke="#d0d0d0" stroke-width="1" stroke-dasharray="1.2,1.2"/>
<g transform="translate(1565.5,260.5)"><circle cx="-5.5" cy="0" r="1.7" fill="#d0d0d0"/><circle cx="0" cy="0" r="1.7" fill="#d0d0d0"/><circle cx="5.5" cy="0" r="1.7" fill="#d0d0d0"/></g>
<!-- appearance spinners -->
<polyline points="1420,347 1423,344 1426,347" fill="none" stroke="#d6d6d6" stroke-width="1.2"/>
<polyline points="1420,353 1423,356 1426,353" fill="none" stroke="#d6d6d6" stroke-width="1.2"/>
<g transform="translate(1475.5,350.5)"><polyline points="-3.6,-1.8 0,1.8 3.6,-1.8" fill="none" stroke="#d6d6d6" stroke-width="1.4"/></g>
<polyline points="1473.5,376.5 1476.5,380 1473.5,383.5" fill="none" stroke="#d6d6d6" stroke-width="1.4"/>
<path d="M1398.7,358.5 h-29 M1404,388.5 h-34.3" stroke="#a0a0a0" stroke-width="1" stroke-dasharray="1,1"/>
<text x="1345" y="415" font-family="Liberation Serif" font-style="italic" font-size="14" fill="#c8c8c8">fx</text>
<rect x="1358.5" y="414" width="1.6" height="1.6" fill="#c8c8c8"/>
<g transform="translate(1565.5,435)"><circle cx="-5.5" cy="0" r="1.7" fill="#d0d0d0"/><circle cx="0" cy="0" r="1.7" fill="#d0d0d0"/><circle cx="5.5" cy="0" r="1.7" fill="#d0d0d0"/></g>
<!-- align row -->
<rect x="1343.5" y="491.5" width="12" height="12" fill="none" stroke="#cfcfcf" stroke-width="1" stroke-dasharray="1.5,1.5"/>
<g fill="#cfcfcf"><rect x="1342.5" y="490.5" width="2.4" height="2.4"/><rect x="1354.5" y="490.5" width="2.4" height="2.4"/><rect x="1342.5" y="502.5" width="2.4" height="2.4"/><rect x="1354.5" y="502.5" width="2.4" height="2.4"/><rect x="1348.3" y="496.3" width="2.4" height="2.4"/></g>
<polyline points="1359,496 1362,499 1365,496" fill="none" stroke="#cfcfcf" stroke-width="1.1"/>
<g fill="#cfcfcf">
<rect x="1381" y="487.5" width="1.2" height="18"/><rect x="1383.5" y="489.5" width="8" height="5.5"/><rect x="1383.5" y="497" width="13.5" height="5.5"/>
<rect x="1419.5" y="487" width="1.2" height="19"/><rect x="1415.5" y="489.5" width="9.5" height="5.5"/><rect x="1413" y="497" width="14.5" height="5.5"/>
<rect x="1459" y="487.5" width="1.2" height="18"/><rect x="1449.5" y="489.5" width="8.5" height="5.5"/><rect x="1443.7" y="497" width="14.5" height="5.5"/>
<rect x="1473" y="488" width="19.3" height="1.2"/><rect x="1476.5" y="490.5" width="5.5" height="13.5"/><rect x="1484" y="490.5" width="5.5" height="8"/>
<rect x="1504" y="496" width="18.5" height="1.2"/><rect x="1507.5" y="489" width="5.5" height="14.5"/><rect x="1515" y="491.5" width="5.5" height="9.5"/>
<rect x="1535" y="504" width="19" height="1.2"/><rect x="1538.5" y="489.5" width="5.5" height="13.5"/><rect x="1546.5" y="495" width="5.5" height="8"/>
</g>
<g transform="translate(1565.5,524)"><circle cx="-5.5" cy="0" r="1.7" fill="#d0d0d0"/><circle cx="0" cy="0" r="1.7" fill="#d0d0d0"/><circle cx="5.5" cy="0" r="1.7" fill="#d0d0d0"/></g>
<!-- pathfinder -->
<g fill="#d0d0d0"><rect x="1345" y="578.5" width="10" height="9.5"/><rect x="1349.5" y="583" width="10.5" height="10.5"/></g>
<rect x="1377.5" y="578.5" width="10" height="9.5" fill="#d0d0d0"/><rect x="1382" y="583" width="10" height="10" fill="#535353" stroke="#d0d0d0" stroke-width="1.4"/>
<rect x="1409.5" y="578.5" width="9.5" height="9.5" fill="none" stroke="#d0d0d0" stroke-width="1.3"/><rect x="1414" y="583" width="10" height="10" fill="none" stroke="#d0d0d0" stroke-width="1.3"/><rect x="1414" y="583" width="5" height="5" fill="#d0d0d0"/>
<rect x="1441" y="578.5" width="10" height="9.5" fill="#d0d0d0"/><rect x="1445.5" y="583" width="10.5" height="10.5" fill="#d0d0d0"/><rect x="1445.5" y="583" width="5.5" height="5" fill="#535353"/>
<g transform="translate(1565.5,608)"><circle cx="-5.5" cy="0" r="1.7" fill="#d0d0d0"/><circle cx="0" cy="0" r="1.7" fill="#d0d0d0"/><circle cx="5.5" cy="0" r="1.7" fill="#d0d0d0"/></g>
</svg>

<div class="t" style="left:92.1px;top:9.65px;font-size:11.87px;font-weight:normal;color:#dcdcdc;transform:scaleX(1.013);">File</div>
<div class="t" style="left:126.1px;top:9.65px;font-size:11.87px;font-weight:normal;color:#dcdcdc;transform:scaleX(1.047);">Edit</div>
<div class="t" style="left:162.4px;top:9.65px;font-size:11.87px;font-weight:normal;color:#dcdcdc;transform:scaleX(1.092);">Object</div>
<div class="t" style="left:214.5px;top:9.65px;font-size:11.87px;font-weight:normal;color:#dcdcdc;transform:scaleX(1.070);">Type</div>
<div class="t" style="left:255.5px;top:9.65px;font-size:11.87px;font-weight:normal;color:#dcdcdc;transform:scaleX(1.021);">Select</div>
<div class="t" style="left:303.3px;top:9.65px;font-size:11.87px;font-weight:normal;color:#dcdcdc;transform:scaleX(1.036);">Effect</div>
<div class="t" style="left:349.0px;top:9.65px;font-size:11.87px;font-weight:normal;color:#dcdcdc;transform:scaleX(1.092);">View</div>
<div class="t" style="left:389.9px;top:9.65px;font-size:11.87px;font-weight:normal;color:#dcdcdc;transform:scaleX(1.096);">Window</div>
<div class="t" style="left:449.8px;top:9.65px;font-size:11.87px;font-weight:normal;color:#dcdcdc;transform:scaleX(1.075);">Help</div>
<div class="t" style="left:1179.9px;top:8.75px;font-size:11.87px;font-weight:normal;color:#dcdcdc;transform:scaleX(0.966);">Essentials Classic</div>
<div class="t" style="left:15.4px;top:44.33px;font-size:11.31px;font-weight:normal;color:#d0d0d0;transform:scaleX(0.886);">Path</div>
<div class="t" style="left:195.1px;top:43.36px;font-size:12.57px;font-weight:normal;color:#d8d8d8;transform:scaleX(0.837);">Stroke:</div>
<div class="t" style="left:255.5px;top:43.36px;font-size:12.57px;font-weight:normal;color:#e0e0e0;transform:scaleX(0.920);">0.5 pt</div>
<div class="t" style="left:376.0px;top:43.86px;font-size:12.57px;font-weight:normal;color:#1a1a1a;transform:scaleX(0.842);">Uniform</div>
<div class="t" style="left:502.6px;top:43.36px;font-size:12.57px;font-weight:normal;color:#1a1a1a;transform:scaleX(0.774);">Basic</div>
<div class="t" style="left:557.6px;top:43.36px;font-size:12.57px;font-weight:normal;color:#d8d8d8;transform:scaleX(0.843);">Opacity:</div>
<div class="t" style="left:604.6px;top:43.36px;font-size:12.57px;font-weight:normal;color:#e0e0e0;transform:scaleX(0.867);">100%</div>
<div class="t" style="left:679.2px;top:43.36px;font-size:12.57px;font-weight:normal;color:#c8c8c8;transform:scaleX(0.802);">Style:</div>
<div class="t" style="left:1198.1px;top:43.36px;font-size:12.57px;font-weight:normal;color:#dcdcdc;transform:scaleX(0.810);">Transform</div>
<div class="t" style="left:86.1px;top:78.16px;font-size:12.57px;font-weight:bold;color:#b4b4b4;transform:scaleX(0.893);">elements recovered.ai* @ ...</div>
<div class="t" style="left:270.5px;top:78.16px;font-size:12.57px;font-weight:bold;color:#b4b4b4;transform:scaleX(0.896);">elements file [Recovered].ai</div>
<div class="t" style="left:456.6px;top:78.16px;font-size:12.57px;font-weight:bold;color:#e8e8e8;transform:scaleX(0.893);">SO GOD MADE A FARMER WISCONSIN R14* @ 16.67% (CMYK/Preview)</div>
<div class="t" style="left:885.0px;top:78.16px;font-size:12.57px;font-weight:bold;color:#b4b4b4;transform:scaleX(0.910);">18 inch tractor.dxf* @ 51....</div>
<div class="t" style="left:1068.5px;top:78.16px;font-size:12.57px;font-weight:bold;color:#b4b4b4;transform:scaleX(0.899);">20 inch combine.dxf* @ 5...</div>
<div class="t" style="left:82.6px;top:880.71px;font-size:11.45px;font-weight:normal;color:#e0e0e0;transform:scaleX(0.945);">16.67%</div>
<div class="t" style="left:195.6px;top:880.71px;font-size:11.45px;font-weight:normal;color:#e0e0e0;transform:scaleX(0.916);">1</div>
<div class="t" style="left:355.1px;top:880.71px;font-size:11.45px;font-weight:normal;color:#c8c8c8;transform:scaleX(0.908);">Delete Anchor Point</div>
<div class="t" style="left:1337.9px;top:88.89px;font-size:11.59px;font-weight:bold;color:#f0f0f0;transform:scaleX(0.894);">Properties</div>
<div class="t" style="left:1406.4px;top:88.89px;font-size:11.59px;font-weight:bold;color:#b0b0b0;transform:scaleX(0.858);">Libraries</div>
<div class="t" style="left:1467.2px;top:88.89px;font-size:11.59px;font-weight:bold;color:#b0b0b0;transform:scaleX(0.900);">Image Trace</div>
<div class="t" style="left:1337.6px;top:120.19px;font-size:11.59px;font-weight:normal;color:#c8c8c8;transform:scaleX(0.895);">Path</div>
<div class="t" style="left:1337.6px;top:151.77px;font-size:13.27px;font-weight:normal;color:#c8c8c8;transform:scaleX(0.788);">Transform</div>
<div class="t" style="left:1373.3px;top:179.04px;font-size:11.17px;font-weight:normal;color:#c8c8c8;transform:scaleX(0.963);">X:</div>
<div class="t" style="left:1390.6px;top:179.04px;font-size:11.17px;font-weight:normal;color:#e8e8e8;transform:scaleX(1.005);">33.64 in</div>
<div class="t" style="left:1459.4px;top:179.04px;font-size:11.17px;font-weight:normal;color:#c8c8c8;transform:scaleX(0.973);">W:</div>
<div class="t" style="left:1479.5px;top:179.04px;font-size:11.17px;font-weight:normal;color:#e8e8e8;transform:scaleX(1.073);">30 in</div>
<div class="t" style="left:1374.1px;top:206.04px;font-size:11.17px;font-weight:normal;color:#c8c8c8;transform:scaleX(0.940);">Y:</div>
<div class="t" style="left:1390.6px;top:206.04px;font-size:11.17px;font-weight:normal;color:#e8e8e8;transform:scaleX(0.955);">29.678 in</div>
<div class="t" style="left:1460.5px;top:206.04px;font-size:11.17px;font-weight:normal;color:#c8c8c8;transform:scaleX(1.072);">H:</div>
<div class="t" style="left:1479.5px;top:206.04px;font-size:11.17px;font-weight:normal;color:#e8e8e8;transform:scaleX(1.073);">32 in</div>
<div class="t" style="left:1388.5px;top:232.04px;font-size:11.17px;font-weight:normal;color:#e8e8e8;transform:scaleX(1.125);">0°</div>
<div class="t" style="left:1337.6px;top:287.43px;font-size:12.01px;font-weight:normal;color:#c8c8c8;transform:scaleX(0.847);">Appearance</div>
<div class="t" style="left:1369.3px;top:316.28px;font-size:10.89px;font-weight:normal;color:#c8c8c8;transform:scaleX(0.944);">Fill</div>
<div class="t" style="left:1369.3px;top:345.04px;font-size:11.17px;font-weight:normal;color:#d8d8d8;transform:scaleX(0.925);">Stroke</div>
<div class="t" style="left:1434.0px;top:344.54px;font-size:11.17px;font-weight:normal;color:#e8e8e8;transform:scaleX(1.017);">0.5 pt</div>
<div class="t" style="left:1369.3px;top:375.04px;font-size:11.17px;font-weight:normal;color:#d8d8d8;transform:scaleX(0.929);">Opacity</div>
<div class="t" style="left:1415.6px;top:374.54px;font-size:11.17px;font-weight:normal;color:#e8e8e8;transform:scaleX(0.976);">100%</div>
<div class="t" style="left:1337.6px;top:461.49px;font-size:11.59px;font-weight:normal;color:#c8c8c8;transform:scaleX(0.943);">Align</div>
<div class="t" style="left:1337.6px;top:549.36px;font-size:12.57px;font-weight:normal;color:#c8c8c8;transform:scaleX(0.835);">Pathfinder</div>
<div class="t" style="left:1531.6px;top:581.04px;font-size:11.17px;font-weight:normal;color:#6c6c6c;transform:scaleX(0.893);">Expand</div>
<div class="t" style="left:1338.2px;top:639.45px;font-size:11.87px;font-weight:normal;color:#c8c8c8;transform:scaleX(0.866);">Quick Actions</div>
<div class="t" style="left:1364.6px;top:666.54px;font-size:11.17px;font-weight:normal;color:#e8e8e8;transform:scaleX(0.923);">Offset Path</div>
<div class="t" style="left:1489.6px;top:666.54px;font-size:11.17px;font-weight:normal;color:#e8e8e8;transform:scaleX(0.930);">Group</div>
<div class="t" style="left:1430.1px;top:698.54px;font-size:11.17px;font-weight:normal;color:#e8e8e8;transform:scaleX(0.879);">Recolor</div>
</body></html>
